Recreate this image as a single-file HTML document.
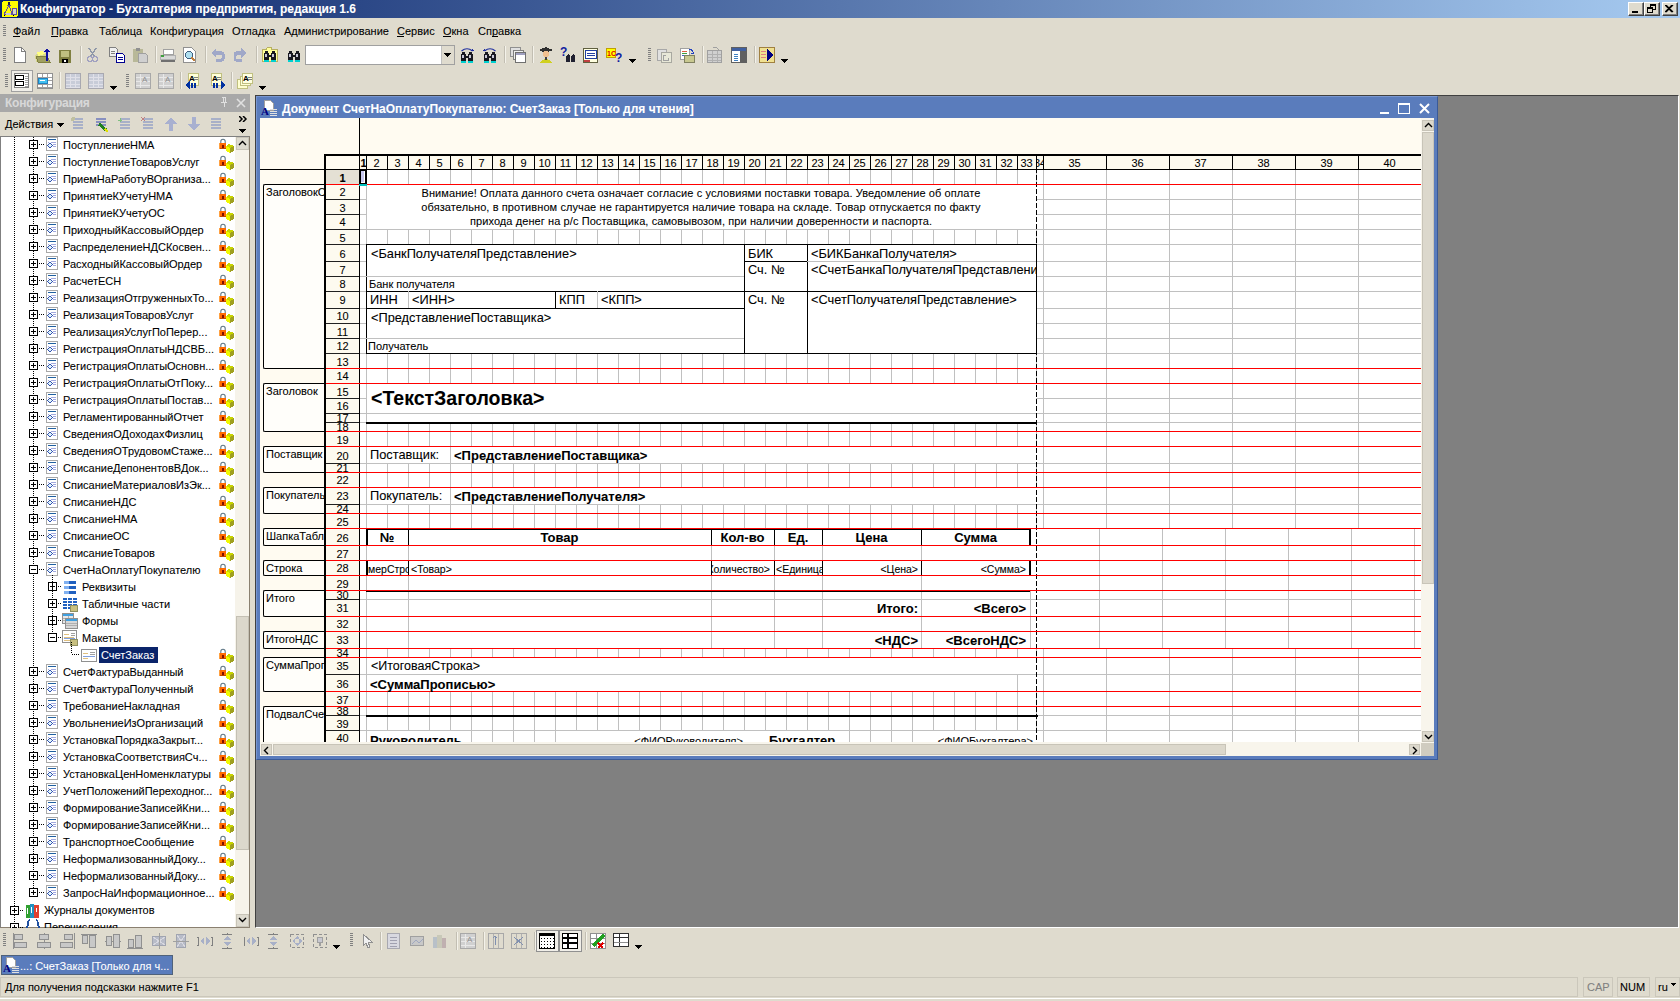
<!DOCTYPE html>
<html><head><meta charset="utf-8"><style>
html,body{margin:0;padding:0}
body{width:1680px;height:1001px;overflow:hidden;position:relative;background:#dfdbce;font-family:"Liberation Sans",sans-serif;font-size:11px}
div{position:absolute;box-sizing:border-box}
.t{white-space:pre;-webkit-text-stroke:0.08px currentColor}
</style></head><body>
<div style="left:0px;top:0px;width:1680px;height:18px;background:linear-gradient(to right,#0a246a,#a6caf0)"></div><svg style="position:absolute;left:0px;top:0px" width="20" height="18" viewBox="0 0 20 18" shape-rendering="crispEdges"><rect x="2" y="1" width="16" height="16" rx="2" fill="#ffff00"/><circle cx="9" cy="3.5" r="1.2" fill="#202040"/><path d="M7 5.5 H11" stroke="#6050a0" stroke-width="1.2"/><path d="M8.5 6 L4 14.5 M9.5 6 L12 14 M3.5 14.5 H16.5" stroke="#6050a0" stroke-width="1" fill="none"/><rect x="12.5" y="8.5" width="4" height="6" fill="#d8d8c8" stroke="#6050a0"/><path d="M6 13.5 H11" stroke="#c8c8d8" stroke-width="2"/><circle cx="4.5" cy="15.5" r="1" fill="#000"/><circle cx="13.5" cy="15.5" r="1" fill="#000"/></svg><div class="t" style="left:20px;top:1px;font-size:12px;line-height:16px;color:#fff;font-weight:bold;">Конфигуратор - Бухгалтерия предприятия, редакция 1.6</div><div style="left:1628px;top:2px;width:16px;height:14px;background:#dfdbce;border-top:1px solid #fff;border-left:1px solid #fff;border-right:1px solid #404040;border-bottom:1px solid #404040;box-shadow:inset -1px -1px 0 #808080"></div><div style="left:1632px;top:11px;width:6px;height:2px;background:#000"></div><div style="left:1644px;top:2px;width:16px;height:14px;background:#dfdbce;border-top:1px solid #fff;border-left:1px solid #fff;border-right:1px solid #404040;border-bottom:1px solid #404040;box-shadow:inset -1px -1px 0 #808080"></div><div style="left:1650px;top:4px;width:6px;height:6px;border:1px solid #000;border-top-width:2px"></div><div style="left:1647px;top:7px;width:6px;height:6px;border:1px solid #000;border-top-width:2px;background:#dfdbce"></div><div style="left:1662px;top:2px;width:16px;height:14px;background:#dfdbce;border-top:1px solid #fff;border-left:1px solid #fff;border-right:1px solid #404040;border-bottom:1px solid #404040;box-shadow:inset -1px -1px 0 #808080"></div><svg style="position:absolute;left:1665px;top:5px" width="9" height="8" viewBox="0 0 9 8" shape-rendering="crispEdges"><path d="M1 0 L8 7 M0 0 L7 7 M7 0 L0 7 M8 0 L1 7" stroke="#000" stroke-width="1.2" fill="none" shape-rendering="auto"/></svg><div style="left:3px;top:25px;width:3px;height:1px;background:#808080"></div><div style="left:3px;top:27px;width:3px;height:1px;background:#808080"></div><div style="left:3px;top:29px;width:3px;height:1px;background:#808080"></div><div style="left:3px;top:31px;width:3px;height:1px;background:#808080"></div><div style="left:3px;top:33px;width:3px;height:1px;background:#808080"></div><div style="left:3px;top:35px;width:3px;height:1px;background:#808080"></div><div class="t" style="left:13px;top:24px;font-size:11px;line-height:15px;color:#000;">Файл</div><div class="t" style="left:51px;top:24px;font-size:11px;line-height:15px;color:#000;">Правка</div><div class="t" style="left:99px;top:24px;font-size:11px;line-height:15px;color:#000;">Таблица</div><div class="t" style="left:150px;top:24px;font-size:11px;line-height:15px;color:#000;">Конфигурация</div><div class="t" style="left:232px;top:24px;font-size:11px;line-height:15px;color:#000;">Отладка</div><div class="t" style="left:284px;top:24px;font-size:11px;line-height:15px;color:#000;">Администрирование</div><div class="t" style="left:397px;top:24px;font-size:11px;line-height:15px;color:#000;">Сервис</div><div class="t" style="left:443px;top:24px;font-size:11px;line-height:15px;color:#000;">Окна</div><div class="t" style="left:478px;top:24px;font-size:11px;line-height:15px;color:#000;">Справка</div><div style="left:13px;top:36px;width:7px;height:1px;background:#000"></div><div style="left:51px;top:36px;width:7px;height:1px;background:#000"></div><div style="left:397px;top:36px;width:7px;height:1px;background:#000"></div><div style="left:443px;top:36px;width:8px;height:1px;background:#000"></div><div style="left:492px;top:36px;width:6px;height:1px;background:#000"></div><div style="left:3px;top:48px;width:3px;height:1px;background:#808080"></div><div style="left:3px;top:50px;width:3px;height:1px;background:#808080"></div><div style="left:3px;top:52px;width:3px;height:1px;background:#808080"></div><div style="left:3px;top:54px;width:3px;height:1px;background:#808080"></div><div style="left:3px;top:56px;width:3px;height:1px;background:#808080"></div><div style="left:3px;top:58px;width:3px;height:1px;background:#808080"></div><div style="left:3px;top:60px;width:3px;height:1px;background:#808080"></div><svg style="position:absolute;left:12px;top:47px" width="16" height="16" viewBox="0 0 16 16" shape-rendering="crispEdges"><path d="M2.5 0.5 H9.5 L13.5 4.5 V15.5 H2.5 Z" fill="#fff" stroke="#808080"/><path d="M9.5 0.5 V4.5 H13.5" fill="none" stroke="#808080"/></svg><svg style="position:absolute;left:35px;top:47px" width="16" height="16" viewBox="0 0 16 16" shape-rendering="crispEdges"><path d="M0 8 L4 6 H12 V15 H1 Z" fill="#d8d890"/><path d="M1 9 H12 L15 15 H3 Z" fill="#a0a060" stroke="#808040"/><path d="M2 5 L8 4 L10 7 L3 9 Z" fill="#ffff80"/><path d="M12 1 L9 5 H11 V14 H13 V5 H15 Z" fill="#1010a0"/></svg><svg style="position:absolute;left:59px;top:47px" width="16" height="16" viewBox="0 0 16 16" shape-rendering="crispEdges"><rect x="0" y="3" width="12" height="13" fill="#808040"/><rect x="2" y="4" width="8" height="6" fill="#c0c080"/><rect x="3" y="12" width="6" height="4" fill="#000"/><rect x="5" y="13" width="2" height="2" fill="#ffffff"/></svg><div style="left:80px;top:46px;width:1px;height:17px;background:#c2beb2"></div><div style="left:81px;top:46px;width:1px;height:17px;background:#f4f2ea"></div><svg style="position:absolute;left:86px;top:47px" width="16" height="16" viewBox="0 0 16 16" shape-rendering="crispEdges"><path d="M3 1 L8 9 M10 1 L5 9" stroke="#9098a8" stroke-width="1.5" fill="none"/><circle cx="4" cy="12" r="2.5" fill="none" stroke="#a0a0c0" stroke-width="1.2"/><circle cx="9" cy="12" r="2.5" fill="none" stroke="#a0a0c0" stroke-width="1.2"/></svg><svg style="position:absolute;left:109px;top:47px" width="16" height="16" viewBox="0 0 16 16" shape-rendering="crispEdges"><path d="M0.5 0.5 H6.5 L8.5 2.5 V9.5 H0.5 Z" fill="#f0f0f0" stroke="#808080"/><path d="M2 4 H6 M2 6 H6" stroke="#808080"/><path d="M7.5 6.5 H13.5 L15.5 8.5 V15.5 H7.5 Z" fill="#fff" stroke="#000090"/><path d="M9 10 H14 M9 12 H14" stroke="#000090"/></svg><svg style="position:absolute;left:132px;top:47px" width="16" height="16" viewBox="0 0 16 16" shape-rendering="crispEdges"><rect x="1" y="2" width="10" height="13" fill="#b8b898"/><rect x="4" y="1" width="4" height="3" fill="#909090"/><path d="M6.5 6.5 H13.5 L15.5 8.5 V15.5 H6.5 Z" fill="#d0d0d0" stroke="#a0a0a0"/></svg><div style="left:155px;top:46px;width:1px;height:17px;background:#c2beb2"></div><div style="left:156px;top:46px;width:1px;height:17px;background:#f4f2ea"></div><svg style="position:absolute;left:160px;top:47px" width="16" height="16" viewBox="0 0 16 16" shape-rendering="crispEdges"><rect x="3" y="2" width="10" height="5" fill="#fff" stroke="#a0a0a0"/><path d="M0 8 H16 V13 H0 Z" fill="#b0b0b0"/><rect x="1" y="9" width="14" height="3" fill="#d8d8d8"/><rect x="1" y="8" width="3" height="2" fill="#40a040"/><path d="M1 13 H15 V15 H1Z" fill="#707070"/></svg><svg style="position:absolute;left:183px;top:47px" width="16" height="16" viewBox="0 0 16 16" shape-rendering="crispEdges"><path d="M0.5 0.5 H8.5 L12.5 4.5 V15.5 H0.5 Z" fill="#fff" stroke="#909090"/><circle cx="6" cy="8" r="3.5" fill="#b0e0f0" stroke="#406080"/><path d="M8.5 10.5 L12 14" stroke="#c08040" stroke-width="2"/></svg><div style="left:205px;top:46px;width:1px;height:17px;background:#c2beb2"></div><div style="left:206px;top:46px;width:1px;height:17px;background:#f4f2ea"></div><svg style="position:absolute;left:210px;top:47px" width="16" height="16" viewBox="0 0 16 16" shape-rendering="crispEdges"><path d="M6 1 L1 6 L6 11 V8 H10 A2 2 0 0 1 10 12 H6 V15 H10 A5 5 0 0 0 10 4 H6 Z" fill="#a0a8c8"/></svg><svg style="position:absolute;left:234px;top:47px" width="16" height="16" viewBox="0 0 16 16" shape-rendering="crispEdges"><path d="M7 1 L12 6 L7 11 V8 H4 A2 2 0 0 0 4 12 H8 V15 H4 A5 5 0 0 1 4 4 H7 Z" fill="#a0a8c8"/></svg><div style="left:256px;top:46px;width:1px;height:17px;background:#c2beb2"></div><div style="left:257px;top:46px;width:1px;height:17px;background:#f4f2ea"></div><svg style="position:absolute;left:262px;top:46px" width="16" height="16" viewBox="0 0 16 16" shape-rendering="crispEdges"><path d="M0.5 3.5 H4 L5.5 1.5 H9 V3.5 H15.5 V15.5 H0.5 Z" fill="#ffff98" stroke="#b8b060"/><g transform="translate(0,0.5)"><path d="M3 4 H6 V6 H7 V8 H9 V6 H10 V4 H13 V6 H14 V14 H9 V10 H7 V14 H2 V6 H3 Z" fill="#181820"/><rect x="3" y="7" width="2" height="3" fill="#c8c8d8"/><rect x="10" y="7" width="2" height="3" fill="#c8c8d8"/><rect x="2" y="13" width="5" height="2" fill="#00d0d0"/><rect x="9" y="13" width="5" height="2" fill="#00d0d0"/></g></svg><svg style="position:absolute;left:286px;top:47px" width="16" height="16" viewBox="0 0 16 16" shape-rendering="crispEdges"><g><path d="M3 4 H6 V6 H7 V8 H9 V6 H10 V4 H13 V6 H14 V14 H9 V10 H7 V14 H2 V6 H3 Z" fill="#181820"/><rect x="3" y="7" width="2" height="3" fill="#c8c8d8"/><rect x="10" y="7" width="2" height="3" fill="#c8c8d8"/><rect x="2" y="13" width="5" height="2" fill="#00d0d0"/><rect x="9" y="13" width="5" height="2" fill="#00d0d0"/></g></svg><div style="left:305px;top:45px;width:150px;height:20px;background:#fff;border:1px solid #7f9db9;border-color:#a0a0a0"></div><div style="left:441px;top:46px;width:13px;height:18px;background:#dfdbce;border-left:1px solid #c0c0c0"></div><svg style="position:absolute;left:444px;top:53px" width="7" height="4" viewBox="0 0 7 4" shape-rendering="crispEdges"><path d="M0 0 H7 L3.5 4 Z" fill="#000"/></svg><svg style="position:absolute;left:459px;top:47px" width="16" height="16" viewBox="0 0 16 16" shape-rendering="crispEdges"><path d="M2.5 4 Q8 -0.5 13.5 4" stroke="#2030a0" stroke-width="1.2" fill="none" shape-rendering="auto"/><path d="M15 4.5 L11 4 L14 1.5 Z" fill="#2030a0"/><g transform="translate(0,1)"><path d="M3 4 H6 V6 H7 V8 H9 V6 H10 V4 H13 V6 H14 V14 H9 V10 H7 V14 H2 V6 H3 Z" fill="#181820"/><rect x="3" y="7" width="2" height="3" fill="#c8c8d8"/><rect x="10" y="7" width="2" height="3" fill="#c8c8d8"/><rect x="2" y="13" width="5" height="2" fill="#00d0d0"/><rect x="9" y="13" width="5" height="2" fill="#00d0d0"/></g></svg><svg style="position:absolute;left:482px;top:47px" width="16" height="16" viewBox="0 0 16 16" shape-rendering="crispEdges"><path d="M2.5 4 Q8 -0.5 13.5 4" stroke="#2030a0" stroke-width="1.2" fill="none" shape-rendering="auto"/><path d="M1 4.5 L5 4 L2 1.5 Z" fill="#2030a0"/><g transform="translate(0,1)"><path d="M3 4 H6 V6 H7 V8 H9 V6 H10 V4 H13 V6 H14 V14 H9 V10 H7 V14 H2 V6 H3 Z" fill="#181820"/><rect x="3" y="7" width="2" height="3" fill="#c8c8d8"/><rect x="10" y="7" width="2" height="3" fill="#c8c8d8"/><rect x="2" y="13" width="5" height="2" fill="#00d0d0"/><rect x="9" y="13" width="5" height="2" fill="#00d0d0"/></g></svg><div style="left:504px;top:46px;width:1px;height:17px;background:#c2beb2"></div><div style="left:505px;top:46px;width:1px;height:17px;background:#f4f2ea"></div><svg style="position:absolute;left:510px;top:47px" width="16" height="16" viewBox="0 0 16 16" shape-rendering="crispEdges"><rect x="0.5" y="0.5" width="10" height="9" fill="#e0e0e0" stroke="#909090"/><rect x="3.5" y="3.5" width="10" height="9" fill="#f0f0f0" stroke="#808080"/><rect x="5.5" y="5.5" width="10" height="10" fill="#fff" stroke="#707070"/><rect x="6" y="6" width="9" height="2" fill="#a0a0c0"/></svg><div style="left:532px;top:46px;width:1px;height:17px;background:#c2beb2"></div><div style="left:533px;top:46px;width:1px;height:17px;background:#f4f2ea"></div><svg style="position:absolute;left:537px;top:47px" width="16" height="16" viewBox="0 0 16 16" shape-rendering="crispEdges"><path d="M2 3 L9 0 L16 3 L9 6 Z" fill="#303030"/><circle cx="9" cy="7" r="3" fill="#f0c090"/><path d="M3 16 Q9 8 15 16 Z" fill="#d0d020"/><path d="M8 10 L9 16 L10 10Z" fill="#404040"/></svg><svg style="position:absolute;left:560px;top:47px" width="16" height="16" viewBox="0 0 16 16" shape-rendering="crispEdges"><text x="0" y="9" font-size="12" font-weight="bold" fill="#1020a0" font-family="Liberation Sans">?</text><path d="M6 9 L8 7 L10 9 V15 H6Z M11 9 L13 7 L15 9 V15 H11Z" fill="#202030"/></svg><svg style="position:absolute;left:583px;top:47px" width="16" height="16" viewBox="0 0 16 16" shape-rendering="crispEdges"><rect x="0.5" y="1.5" width="14" height="14" fill="#ffffe0" stroke="#606040"/><rect x="2.5" y="3.5" width="11" height="8" fill="#fff" stroke="#2040a0"/><path d="M4 6 H12 M4 8 H12" stroke="#2040a0"/><rect x="1" y="13" width="6" height="2" fill="#c04040"/></svg><svg style="position:absolute;left:606px;top:47px" width="16" height="16" viewBox="0 0 16 16" shape-rendering="crispEdges"><rect x="0.5" y="1.5" width="9" height="9" fill="#ffff00" stroke="#c0a000"/><text x="1" y="9" font-size="7" font-weight="bold" fill="#e00000" font-family="Liberation Sans">1С</text><text x="9" y="15" font-size="12" font-weight="bold" fill="#1020a0" font-family="Liberation Sans">?</text></svg><svg style="position:absolute;left:629px;top:59px" width="7" height="4" viewBox="0 0 7 4" shape-rendering="crispEdges"><path d="M0 0 H7 L3.5 4 Z" fill="#000"/></svg><div style="left:648px;top:48px;width:3px;height:1px;background:#808080"></div><div style="left:648px;top:50px;width:3px;height:1px;background:#808080"></div><div style="left:648px;top:52px;width:3px;height:1px;background:#808080"></div><div style="left:648px;top:54px;width:3px;height:1px;background:#808080"></div><div style="left:648px;top:56px;width:3px;height:1px;background:#808080"></div><div style="left:648px;top:58px;width:3px;height:1px;background:#808080"></div><div style="left:648px;top:60px;width:3px;height:1px;background:#808080"></div><svg style="position:absolute;left:657px;top:47px" width="16" height="16" viewBox="0 0 16 16" shape-rendering="crispEdges"><rect x="0.5" y="2.5" width="9" height="11" fill="#e0e0e0" stroke="#a8a8a8"/><rect x="4.5" y="5.5" width="10" height="10" fill="#e8e8d8" stroke="#a8a8a0"/><path d="M9 8 A3 3 0 1 0 12 11" fill="none" stroke="#a0a0a0"/></svg><svg style="position:absolute;left:680px;top:47px" width="16" height="16" viewBox="0 0 16 16" shape-rendering="crispEdges"><rect x="0.5" y="1.5" width="9" height="11" fill="#fff" stroke="#a0a0a0"/><path d="M2 4 H7" stroke="#e06040"/><path d="M2 6 H7" stroke="#40a040"/><path d="M2 8 H7" stroke="#4060c0"/><rect x="4.5" y="8.5" width="10" height="7" fill="#c8c890" stroke="#808060"/><path d="M9 2 A4 4 0 0 1 13 7 L11 6 M13 7 L14 5" fill="none" stroke="#2040c0"/></svg><div style="left:702px;top:46px;width:1px;height:17px;background:#c2beb2"></div><div style="left:703px;top:46px;width:1px;height:17px;background:#f4f2ea"></div><svg style="position:absolute;left:707px;top:47px" width="16" height="16" viewBox="0 0 16 16" shape-rendering="crispEdges"><rect x="0.5" y="3.5" width="14" height="12" fill="#d0d0d0" stroke="#a0a0a0"/><path d="M1 7 H14 M1 10 H14 M1 13 H14 M5 4 V15 M10 4 V15" stroke="#b0b0b0"/><path d="M6 1 A4 4 0 0 1 12 4" fill="none" stroke="#a0a0a0"/></svg><svg style="position:absolute;left:731px;top:47px" width="16" height="16" viewBox="0 0 16 16" shape-rendering="crispEdges"><rect x="0.5" y="0.5" width="15" height="15" fill="#fff" stroke="#606060"/><rect x="1" y="1" width="14" height="3" fill="#4060a0"/><rect x="9" y="4" width="6" height="11" fill="#606060"/><path d="M3 7 H7 M3 9 H7 M3 11 H7 M3 13 H7" stroke="#4080c0"/></svg><div style="left:754px;top:46px;width:1px;height:17px;background:#c2beb2"></div><div style="left:755px;top:46px;width:1px;height:17px;background:#f4f2ea"></div><svg style="position:absolute;left:759px;top:47px" width="16" height="16" viewBox="0 0 16 16" shape-rendering="crispEdges"><rect x="0.5" y="0.5" width="15" height="15" fill="#f0e090" stroke="#a08040"/><path d="M2 4 H7 M2 7 H7 M2 10 H7" stroke="#e08080"/><path d="M8 2 L15 8 L8 14 Z" fill="#000080"/></svg><svg style="position:absolute;left:781px;top:59px" width="7" height="4" viewBox="0 0 7 4" shape-rendering="crispEdges"><path d="M0 0 H7 L3.5 4 Z" fill="#000"/></svg><div style="left:5px;top:74px;width:3px;height:1px;background:#808080"></div><div style="left:5px;top:76px;width:3px;height:1px;background:#808080"></div><div style="left:5px;top:78px;width:3px;height:1px;background:#808080"></div><div style="left:5px;top:80px;width:3px;height:1px;background:#808080"></div><div style="left:5px;top:82px;width:3px;height:1px;background:#808080"></div><div style="left:5px;top:84px;width:3px;height:1px;background:#808080"></div><div style="left:5px;top:86px;width:3px;height:1px;background:#808080"></div><div style="left:11px;top:70px;width:22px;height:22px;border:1px solid #a0a0a0;background:#f0eee8"></div><svg style="position:absolute;left:14px;top:73px" width="16" height="16" viewBox="0 0 16 16" shape-rendering="crispEdges"><rect x="0.5" y="0.5" width="14" height="14" fill="#fff" stroke="#808080"/><rect x="1.5" y="2.5" width="8" height="4" fill="none" stroke="#000" stroke-width="1.5"/><rect x="1.5" y="8.5" width="8" height="4" fill="none" stroke="#000" stroke-width="1.5"/><path d="M11 3 H14 M11 5 H14 M11 7 H14 M11 9 H14 M11 11 H14 M11 13 H14" stroke="#a0a0a0"/></svg><svg style="position:absolute;left:37px;top:73px" width="16" height="16" viewBox="0 0 16 16" shape-rendering="crispEdges"><rect x="0.5" y="0.5" width="15" height="15" fill="#fff" stroke="#909090"/><path d="M1 4 H15 M1 7.5 H15 M1 11 H15 M1 14 H15 M5.5 1 V15 M10.5 1 V15" stroke="#a0a0a0"/><rect x="1" y="5" width="9" height="5" fill="#40c0f0" stroke="#2080c0"/><path d="M3 7.5 H8" stroke="#fff"/></svg><div style="left:59px;top:72px;width:1px;height:17px;background:#c2beb2"></div><div style="left:60px;top:72px;width:1px;height:17px;background:#f4f2ea"></div><svg style="position:absolute;left:65px;top:73px" width="16" height="16" viewBox="0 0 16 16" shape-rendering="crispEdges"><rect x="0.5" y="0.5" width="15" height="15" fill="#c8ccd8" stroke="#a8a8b0"/><path d="M1 4 H15 M1 7.5 H15 M1 11 H15 M1 14 H15 M5.5 1 V15 M10.5 1 V15" stroke="#e0e0e8"/></svg><svg style="position:absolute;left:88px;top:73px" width="16" height="16" viewBox="0 0 16 16" shape-rendering="crispEdges"><rect x="0.5" y="0.5" width="15" height="15" fill="#c8ccd8" stroke="#a8a8b0"/><path d="M1 4 H15 M1 7.5 H15 M1 11 H15 M1 14 H15 M5.5 1 V15 M10.5 1 V15" stroke="#e0e0e8"/></svg><svg style="position:absolute;left:110px;top:86px" width="7" height="4" viewBox="0 0 7 4" shape-rendering="crispEdges"><path d="M0 0 H7 L3.5 4 Z" fill="#000"/></svg><div style="left:126px;top:74px;width:3px;height:1px;background:#808080"></div><div style="left:126px;top:76px;width:3px;height:1px;background:#808080"></div><div style="left:126px;top:78px;width:3px;height:1px;background:#808080"></div><div style="left:126px;top:80px;width:3px;height:1px;background:#808080"></div><div style="left:126px;top:82px;width:3px;height:1px;background:#808080"></div><div style="left:126px;top:84px;width:3px;height:1px;background:#808080"></div><div style="left:126px;top:86px;width:3px;height:1px;background:#808080"></div><svg style="position:absolute;left:135px;top:73px" width="16" height="16" viewBox="0 0 16 16" shape-rendering="crispEdges"><rect x="0.5" y="0.5" width="15" height="15" fill="#d0d0d0" stroke="#a8a8a8"/><path d="M1 4 H15 M1 8 H15 M1 12 H15 M5 1 V15" stroke="#e8e8e8"/><text x="7" y="9" font-size="8" fill="#909090" font-family="Liberation Sans">A</text></svg><svg style="position:absolute;left:158px;top:73px" width="16" height="16" viewBox="0 0 16 16" shape-rendering="crispEdges"><rect x="0.5" y="0.5" width="15" height="15" fill="#d0d0d0" stroke="#a8a8a8"/><path d="M1 4 H15 M1 8 H15 M1 12 H15 M5 1 V15" stroke="#e8e8e8"/><text x="7" y="9" font-size="8" fill="#909090" font-family="Liberation Sans">A</text></svg><div style="left:180px;top:72px;width:1px;height:17px;background:#c2beb2"></div><div style="left:181px;top:72px;width:1px;height:17px;background:#f4f2ea"></div><svg style="position:absolute;left:185px;top:73px" width="16" height="16" viewBox="0 0 16 16" shape-rendering="crispEdges"><rect x="3.5" y="0.5" width="10" height="12" fill="#ffffd8" stroke="#c0c080"/><text x="4" y="8" font-size="8" font-weight="bold" fill="#000" font-family="Liberation Sans">A</text><path d="M9 4 H13 M9 6 H13" stroke="#808080"/><path d="M0 12 L5 8 V16 Z" fill="#0030a0"/><rect x="6" y="10" width="2" height="5" fill="#0030a0"/><rect x="9" y="10" width="2" height="5" fill="#0030a0"/></svg><svg style="position:absolute;left:210px;top:73px" width="16" height="16" viewBox="0 0 16 16" shape-rendering="crispEdges"><rect x="1.5" y="0.5" width="10" height="12" fill="#ffffd8" stroke="#c0c080"/><text x="2" y="8" font-size="8" font-weight="bold" fill="#000" font-family="Liberation Sans">A</text><path d="M7 4 H11 M7 6 H11" stroke="#808080"/><path d="M16 12 L11 8 V16 Z" fill="#0030a0"/><rect x="3" y="10" width="2" height="5" fill="#0030a0"/><rect x="6" y="10" width="2" height="5" fill="#0030a0"/></svg><div style="left:231px;top:72px;width:1px;height:17px;background:#c2beb2"></div><div style="left:232px;top:72px;width:1px;height:17px;background:#f4f2ea"></div><svg style="position:absolute;left:237px;top:73px" width="16" height="16" viewBox="0 0 16 16" shape-rendering="crispEdges"><rect x="0.5" y="6.5" width="10" height="9" fill="#ffffd0" stroke="#c0c080"/><rect x="3.5" y="3.5" width="10" height="9" fill="#ffffd8" stroke="#c0c080"/><rect x="5.5" y="0.5" width="10" height="10" fill="#ffffe0" stroke="#c0c080"/><text x="6" y="8" font-size="8" font-weight="bold" fill="#000" font-family="Liberation Sans">A</text><path d="M11 4 H15 M11 6 H15" stroke="#808080"/></svg><svg style="position:absolute;left:259px;top:86px" width="7" height="4" viewBox="0 0 7 4" shape-rendering="crispEdges"><path d="M0 0 H7 L3.5 4 Z" fill="#000"/></svg><div style="left:0px;top:94px;width:250px;height:18px;background:#a8a8a8"></div><div class="t" style="left:5px;top:95px;font-size:12px;line-height:16px;color:#d8d8d8;font-weight:bold;letter-spacing:-0.2px;">Конфигурация</div><svg style="position:absolute;left:220px;top:96px" width="8" height="12" viewBox="0 0 8 12" shape-rendering="crispEdges"><path d="M2 1 H6 M3 1 V6 M5 1 V6 M1 6 H7 M4 6 V11" stroke="#e0e0e0" fill="none"/></svg><svg style="position:absolute;left:236px;top:98px" width="10" height="10" viewBox="0 0 10 10" shape-rendering="crispEdges"><path d="M1 1 L9 9 M9 1 L1 9" stroke="#e0e0e0" stroke-width="1.6" fill="none" shape-rendering="auto"/></svg><div class="t" style="left:5px;top:117px;font-size:11px;line-height:15px;color:#000;">Действия</div><svg style="position:absolute;left:57px;top:123px" width="7" height="4" viewBox="0 0 7 4" shape-rendering="crispEdges"><path d="M0 0 H7 L3.5 4 Z" fill="#000"/></svg><svg style="position:absolute;left:70px;top:116px" width="16" height="16" viewBox="0 0 16 16" shape-rendering="crispEdges"><path d="M3 3 H13 M3 6 H13 M3 9 H13 M3 12 H13" stroke="#a8b0c8" stroke-width="2"/><circle cx="3" cy="3" r="2" fill="#c0c0a0"/></svg><svg style="position:absolute;left:93px;top:116px" width="16" height="16" viewBox="0 0 16 16" shape-rendering="crispEdges"><path d="M3 3 H13 M3 6 H13 M3 9 H13" stroke="#8890c0" stroke-width="2"/><path d="M6 8 L13 14" stroke="#208020" stroke-width="3"/><path d="M12 13 L15 16" stroke="#e0e000" stroke-width="2"/></svg><svg style="position:absolute;left:117px;top:116px" width="16" height="16" viewBox="0 0 16 16" shape-rendering="crispEdges"><path d="M3 3 H13 M3 6 H13 M3 9 H13 M3 12 H13" stroke="#a8b0c8" stroke-width="2"/><path d="M1 4 H5 M3 2 V6" stroke="#80c080"/></svg><svg style="position:absolute;left:140px;top:116px" width="16" height="16" viewBox="0 0 16 16" shape-rendering="crispEdges"><path d="M3 3 H13 M3 6 H13 M3 9 H13 M3 12 H13" stroke="#a8b0c8" stroke-width="2"/><path d="M1 1 L5 5 M5 1 L1 5" stroke="#c08080"/></svg><svg style="position:absolute;left:163px;top:116px" width="16" height="16" viewBox="0 0 16 16" shape-rendering="crispEdges"><path d="M8 1 L14 8 H10 V15 H6 V8 H2 Z" fill="#a8b0d0"/></svg><svg style="position:absolute;left:186px;top:116px" width="16" height="16" viewBox="0 0 16 16" shape-rendering="crispEdges"><path d="M8 15 L14 8 H10 V1 H6 V8 H2 Z" fill="#a8b0d0"/></svg><svg style="position:absolute;left:208px;top:116px" width="16" height="16" viewBox="0 0 16 16" shape-rendering="crispEdges"><path d="M3 3 H13 M3 6 H13 M3 9 H13 M3 12 H13" stroke="#a8b0c8" stroke-width="2"/></svg><svg style="position:absolute;left:239px;top:116px" width="9" height="6" viewBox="0 0 9 6" shape-rendering="crispEdges"><path d="M0 0 L3 3 L0 6 M4 0 L7 3 L4 6" stroke="#000" stroke-width="1.5" fill="none" shape-rendering="auto"/></svg><svg style="position:absolute;left:239px;top:129px" width="7" height="4" viewBox="0 0 7 4" shape-rendering="crispEdges"><path d="M0 0 H7 L3.5 4 Z" fill="#000"/></svg><div style="left:0px;top:136px;width:250px;height:792px;background:#fff;border:1px solid #808080;border-right-color:#8a8070;border-bottom-color:#8a8070"></div><div style="left:235px;top:137px;width:14px;height:790px;background:#f6f3ea"></div><div style="left:236px;top:137px;width:13px;height:13px;background:#dedbd0;border:1px solid #c8c4b8"></div><svg style="position:absolute;left:238px;top:140px" width="9" height="6" viewBox="0 0 9 6" shape-rendering="crispEdges"><path d="M1 5 L4.5 1.5 L8 5" stroke="#000" stroke-width="1.4" fill="none" shape-rendering="auto"/></svg><div style="left:236px;top:914px;width:13px;height:13px;background:#dedbd0;border:1px solid #c8c4b8"></div><svg style="position:absolute;left:238px;top:917px" width="9" height="6" viewBox="0 0 9 6" shape-rendering="crispEdges"><path d="M1 1 L4.5 4.5 L8 1" stroke="#000" stroke-width="1.4" fill="none" shape-rendering="auto"/></svg><div style="left:236px;top:616px;width:13px;height:234px;background:#dcd8cc;border:1px solid #c4c0b4"></div><div style="left:14px;top:137px;width:1px;height:790px;background:repeating-linear-gradient(to bottom,#000 0 1px,transparent 1px 2px)"></div><div style="left:33px;top:137px;width:1px;height:756px;background:repeating-linear-gradient(to bottom,#000 0 1px,transparent 1px 2px)"></div><div style="left:29px;top:140px;width:9px;height:9px;background:#fff;border:1px solid #000"></div><div style="left:31px;top:144px;width:5px;height:1px;background:#000"></div><div style="left:33px;top:142px;width:1px;height:5px;background:#000"></div><div style="left:39px;top:144px;width:6px;height:1px;background:repeating-linear-gradient(to right,#000 0 1px,transparent 1px 2px)"></div><svg style="position:absolute;left:46px;top:137px" width="12" height="14" viewBox="0 0 12 14" shape-rendering="crispEdges"><rect x="0.5" y="0.5" width="11" height="13" fill="#fff" stroke="#a8a8a8"/><path d="M2 2.5 H10" stroke="#2060a0" stroke-width="1.3"/><path d="M2 5 H3 M5 5 H10 M7 7 H10 M7 9 H10" stroke="#a0a8e0"/><path d="M4 6 L6.5 8.5 L4 11 L1.5 8.5 Z" fill="#e0f4f8" stroke="#3050b0"/></svg><div class="t" style="left:63px;top:138px;font-size:11px;line-height:15px;color:#000;">ПоступлениеНМА</div><svg style="position:absolute;left:219px;top:137px" width="16" height="16" viewBox="0 0 16 16" shape-rendering="crispEdges"><path d="M1.8 6 V4.5 A2.2 2.2 0 0 1 6.2 4.5 V6" fill="none" stroke="#607888" stroke-width="1.1" shape-rendering="auto"/><rect x="0" y="6" width="7" height="6" fill="#ff6a00"/><rect x="0" y="11" width="7" height="1" fill="#c04800"/><rect x="0" y="6" width="1" height="6" fill="#ffa040"/><rect x="3" y="8" width="1.5" height="2.5" fill="#801000"/><path d="M7 9 L10 7 L15 9 L11 11 Z" fill="#c8d400"/><path d="M7 9 L11 11 V16 L7 14 Z" fill="#f0f800"/><path d="M11 11 L15 9 V14 L11 16 Z" fill="#a0a020"/></svg><div style="left:29px;top:157px;width:9px;height:9px;background:#fff;border:1px solid #000"></div><div style="left:31px;top:161px;width:5px;height:1px;background:#000"></div><div style="left:33px;top:159px;width:1px;height:5px;background:#000"></div><div style="left:39px;top:161px;width:6px;height:1px;background:repeating-linear-gradient(to right,#000 0 1px,transparent 1px 2px)"></div><svg style="position:absolute;left:46px;top:154px" width="12" height="14" viewBox="0 0 12 14" shape-rendering="crispEdges"><rect x="0.5" y="0.5" width="11" height="13" fill="#fff" stroke="#a8a8a8"/><path d="M2 2.5 H10" stroke="#2060a0" stroke-width="1.3"/><path d="M2 5 H3 M5 5 H10 M7 7 H10 M7 9 H10" stroke="#a0a8e0"/><path d="M4 6 L6.5 8.5 L4 11 L1.5 8.5 Z" fill="#e0f4f8" stroke="#3050b0"/></svg><div class="t" style="left:63px;top:155px;font-size:11px;line-height:15px;color:#000;">ПоступлениеТоваровУслуг</div><svg style="position:absolute;left:219px;top:154px" width="16" height="16" viewBox="0 0 16 16" shape-rendering="crispEdges"><path d="M1.8 6 V4.5 A2.2 2.2 0 0 1 6.2 4.5 V6" fill="none" stroke="#607888" stroke-width="1.1" shape-rendering="auto"/><rect x="0" y="6" width="7" height="6" fill="#ff6a00"/><rect x="0" y="11" width="7" height="1" fill="#c04800"/><rect x="0" y="6" width="1" height="6" fill="#ffa040"/><rect x="3" y="8" width="1.5" height="2.5" fill="#801000"/><path d="M7 9 L10 7 L15 9 L11 11 Z" fill="#c8d400"/><path d="M7 9 L11 11 V16 L7 14 Z" fill="#f0f800"/><path d="M11 11 L15 9 V14 L11 16 Z" fill="#a0a020"/></svg><div style="left:29px;top:174px;width:9px;height:9px;background:#fff;border:1px solid #000"></div><div style="left:31px;top:178px;width:5px;height:1px;background:#000"></div><div style="left:33px;top:176px;width:1px;height:5px;background:#000"></div><div style="left:39px;top:178px;width:6px;height:1px;background:repeating-linear-gradient(to right,#000 0 1px,transparent 1px 2px)"></div><svg style="position:absolute;left:46px;top:171px" width="12" height="14" viewBox="0 0 12 14" shape-rendering="crispEdges"><rect x="0.5" y="0.5" width="11" height="13" fill="#fff" stroke="#a8a8a8"/><path d="M2 2.5 H10" stroke="#2060a0" stroke-width="1.3"/><path d="M2 5 H3 M5 5 H10 M7 7 H10 M7 9 H10" stroke="#a0a8e0"/><path d="M4 6 L6.5 8.5 L4 11 L1.5 8.5 Z" fill="#e0f4f8" stroke="#3050b0"/></svg><div class="t" style="left:63px;top:172px;font-size:11px;line-height:15px;color:#000;">ПриемНаРаботуВОрганиза...</div><svg style="position:absolute;left:219px;top:171px" width="16" height="16" viewBox="0 0 16 16" shape-rendering="crispEdges"><path d="M1.8 6 V4.5 A2.2 2.2 0 0 1 6.2 4.5 V6" fill="none" stroke="#607888" stroke-width="1.1" shape-rendering="auto"/><rect x="0" y="6" width="7" height="6" fill="#ff6a00"/><rect x="0" y="11" width="7" height="1" fill="#c04800"/><rect x="0" y="6" width="1" height="6" fill="#ffa040"/><rect x="3" y="8" width="1.5" height="2.5" fill="#801000"/><path d="M7 9 L10 7 L15 9 L11 11 Z" fill="#c8d400"/><path d="M7 9 L11 11 V16 L7 14 Z" fill="#f0f800"/><path d="M11 11 L15 9 V14 L11 16 Z" fill="#a0a020"/></svg><div style="left:29px;top:191px;width:9px;height:9px;background:#fff;border:1px solid #000"></div><div style="left:31px;top:195px;width:5px;height:1px;background:#000"></div><div style="left:33px;top:193px;width:1px;height:5px;background:#000"></div><div style="left:39px;top:195px;width:6px;height:1px;background:repeating-linear-gradient(to right,#000 0 1px,transparent 1px 2px)"></div><svg style="position:absolute;left:46px;top:188px" width="12" height="14" viewBox="0 0 12 14" shape-rendering="crispEdges"><rect x="0.5" y="0.5" width="11" height="13" fill="#fff" stroke="#a8a8a8"/><path d="M2 2.5 H10" stroke="#2060a0" stroke-width="1.3"/><path d="M2 5 H3 M5 5 H10 M7 7 H10 M7 9 H10" stroke="#a0a8e0"/><path d="M4 6 L6.5 8.5 L4 11 L1.5 8.5 Z" fill="#e0f4f8" stroke="#3050b0"/></svg><div class="t" style="left:63px;top:189px;font-size:11px;line-height:15px;color:#000;">ПринятиеКУчетуНМА</div><svg style="position:absolute;left:219px;top:188px" width="16" height="16" viewBox="0 0 16 16" shape-rendering="crispEdges"><path d="M1.8 6 V4.5 A2.2 2.2 0 0 1 6.2 4.5 V6" fill="none" stroke="#607888" stroke-width="1.1" shape-rendering="auto"/><rect x="0" y="6" width="7" height="6" fill="#ff6a00"/><rect x="0" y="11" width="7" height="1" fill="#c04800"/><rect x="0" y="6" width="1" height="6" fill="#ffa040"/><rect x="3" y="8" width="1.5" height="2.5" fill="#801000"/><path d="M7 9 L10 7 L15 9 L11 11 Z" fill="#c8d400"/><path d="M7 9 L11 11 V16 L7 14 Z" fill="#f0f800"/><path d="M11 11 L15 9 V14 L11 16 Z" fill="#a0a020"/></svg><div style="left:29px;top:208px;width:9px;height:9px;background:#fff;border:1px solid #000"></div><div style="left:31px;top:212px;width:5px;height:1px;background:#000"></div><div style="left:33px;top:210px;width:1px;height:5px;background:#000"></div><div style="left:39px;top:212px;width:6px;height:1px;background:repeating-linear-gradient(to right,#000 0 1px,transparent 1px 2px)"></div><svg style="position:absolute;left:46px;top:205px" width="12" height="14" viewBox="0 0 12 14" shape-rendering="crispEdges"><rect x="0.5" y="0.5" width="11" height="13" fill="#fff" stroke="#a8a8a8"/><path d="M2 2.5 H10" stroke="#2060a0" stroke-width="1.3"/><path d="M2 5 H3 M5 5 H10 M7 7 H10 M7 9 H10" stroke="#a0a8e0"/><path d="M4 6 L6.5 8.5 L4 11 L1.5 8.5 Z" fill="#e0f4f8" stroke="#3050b0"/></svg><div class="t" style="left:63px;top:206px;font-size:11px;line-height:15px;color:#000;">ПринятиеКУчетуОС</div><svg style="position:absolute;left:219px;top:205px" width="16" height="16" viewBox="0 0 16 16" shape-rendering="crispEdges"><path d="M1.8 6 V4.5 A2.2 2.2 0 0 1 6.2 4.5 V6" fill="none" stroke="#607888" stroke-width="1.1" shape-rendering="auto"/><rect x="0" y="6" width="7" height="6" fill="#ff6a00"/><rect x="0" y="11" width="7" height="1" fill="#c04800"/><rect x="0" y="6" width="1" height="6" fill="#ffa040"/><rect x="3" y="8" width="1.5" height="2.5" fill="#801000"/><path d="M7 9 L10 7 L15 9 L11 11 Z" fill="#c8d400"/><path d="M7 9 L11 11 V16 L7 14 Z" fill="#f0f800"/><path d="M11 11 L15 9 V14 L11 16 Z" fill="#a0a020"/></svg><div style="left:29px;top:225px;width:9px;height:9px;background:#fff;border:1px solid #000"></div><div style="left:31px;top:229px;width:5px;height:1px;background:#000"></div><div style="left:33px;top:227px;width:1px;height:5px;background:#000"></div><div style="left:39px;top:229px;width:6px;height:1px;background:repeating-linear-gradient(to right,#000 0 1px,transparent 1px 2px)"></div><svg style="position:absolute;left:46px;top:222px" width="12" height="14" viewBox="0 0 12 14" shape-rendering="crispEdges"><rect x="0.5" y="0.5" width="11" height="13" fill="#fff" stroke="#a8a8a8"/><path d="M2 2.5 H10" stroke="#2060a0" stroke-width="1.3"/><path d="M2 5 H3 M5 5 H10 M7 7 H10 M7 9 H10" stroke="#a0a8e0"/><path d="M4 6 L6.5 8.5 L4 11 L1.5 8.5 Z" fill="#e0f4f8" stroke="#3050b0"/></svg><div class="t" style="left:63px;top:223px;font-size:11px;line-height:15px;color:#000;">ПриходныйКассовыйОрдер</div><svg style="position:absolute;left:219px;top:222px" width="16" height="16" viewBox="0 0 16 16" shape-rendering="crispEdges"><path d="M1.8 6 V4.5 A2.2 2.2 0 0 1 6.2 4.5 V6" fill="none" stroke="#607888" stroke-width="1.1" shape-rendering="auto"/><rect x="0" y="6" width="7" height="6" fill="#ff6a00"/><rect x="0" y="11" width="7" height="1" fill="#c04800"/><rect x="0" y="6" width="1" height="6" fill="#ffa040"/><rect x="3" y="8" width="1.5" height="2.5" fill="#801000"/><path d="M7 9 L10 7 L15 9 L11 11 Z" fill="#c8d400"/><path d="M7 9 L11 11 V16 L7 14 Z" fill="#f0f800"/><path d="M11 11 L15 9 V14 L11 16 Z" fill="#a0a020"/></svg><div style="left:29px;top:242px;width:9px;height:9px;background:#fff;border:1px solid #000"></div><div style="left:31px;top:246px;width:5px;height:1px;background:#000"></div><div style="left:33px;top:244px;width:1px;height:5px;background:#000"></div><div style="left:39px;top:246px;width:6px;height:1px;background:repeating-linear-gradient(to right,#000 0 1px,transparent 1px 2px)"></div><svg style="position:absolute;left:46px;top:239px" width="12" height="14" viewBox="0 0 12 14" shape-rendering="crispEdges"><rect x="0.5" y="0.5" width="11" height="13" fill="#fff" stroke="#a8a8a8"/><path d="M2 2.5 H10" stroke="#2060a0" stroke-width="1.3"/><path d="M2 5 H3 M5 5 H10 M7 7 H10 M7 9 H10" stroke="#a0a8e0"/><path d="M4 6 L6.5 8.5 L4 11 L1.5 8.5 Z" fill="#e0f4f8" stroke="#3050b0"/></svg><div class="t" style="left:63px;top:240px;font-size:11px;line-height:15px;color:#000;">РаспределениеНДСКосвен...</div><svg style="position:absolute;left:219px;top:239px" width="16" height="16" viewBox="0 0 16 16" shape-rendering="crispEdges"><path d="M1.8 6 V4.5 A2.2 2.2 0 0 1 6.2 4.5 V6" fill="none" stroke="#607888" stroke-width="1.1" shape-rendering="auto"/><rect x="0" y="6" width="7" height="6" fill="#ff6a00"/><rect x="0" y="11" width="7" height="1" fill="#c04800"/><rect x="0" y="6" width="1" height="6" fill="#ffa040"/><rect x="3" y="8" width="1.5" height="2.5" fill="#801000"/><path d="M7 9 L10 7 L15 9 L11 11 Z" fill="#c8d400"/><path d="M7 9 L11 11 V16 L7 14 Z" fill="#f0f800"/><path d="M11 11 L15 9 V14 L11 16 Z" fill="#a0a020"/></svg><div style="left:29px;top:259px;width:9px;height:9px;background:#fff;border:1px solid #000"></div><div style="left:31px;top:263px;width:5px;height:1px;background:#000"></div><div style="left:33px;top:261px;width:1px;height:5px;background:#000"></div><div style="left:39px;top:263px;width:6px;height:1px;background:repeating-linear-gradient(to right,#000 0 1px,transparent 1px 2px)"></div><svg style="position:absolute;left:46px;top:256px" width="12" height="14" viewBox="0 0 12 14" shape-rendering="crispEdges"><rect x="0.5" y="0.5" width="11" height="13" fill="#fff" stroke="#a8a8a8"/><path d="M2 2.5 H10" stroke="#2060a0" stroke-width="1.3"/><path d="M2 5 H3 M5 5 H10 M7 7 H10 M7 9 H10" stroke="#a0a8e0"/><path d="M4 6 L6.5 8.5 L4 11 L1.5 8.5 Z" fill="#e0f4f8" stroke="#3050b0"/></svg><div class="t" style="left:63px;top:257px;font-size:11px;line-height:15px;color:#000;">РасходныйКассовыйОрдер</div><svg style="position:absolute;left:219px;top:256px" width="16" height="16" viewBox="0 0 16 16" shape-rendering="crispEdges"><path d="M1.8 6 V4.5 A2.2 2.2 0 0 1 6.2 4.5 V6" fill="none" stroke="#607888" stroke-width="1.1" shape-rendering="auto"/><rect x="0" y="6" width="7" height="6" fill="#ff6a00"/><rect x="0" y="11" width="7" height="1" fill="#c04800"/><rect x="0" y="6" width="1" height="6" fill="#ffa040"/><rect x="3" y="8" width="1.5" height="2.5" fill="#801000"/><path d="M7 9 L10 7 L15 9 L11 11 Z" fill="#c8d400"/><path d="M7 9 L11 11 V16 L7 14 Z" fill="#f0f800"/><path d="M11 11 L15 9 V14 L11 16 Z" fill="#a0a020"/></svg><div style="left:29px;top:276px;width:9px;height:9px;background:#fff;border:1px solid #000"></div><div style="left:31px;top:280px;width:5px;height:1px;background:#000"></div><div style="left:33px;top:278px;width:1px;height:5px;background:#000"></div><div style="left:39px;top:280px;width:6px;height:1px;background:repeating-linear-gradient(to right,#000 0 1px,transparent 1px 2px)"></div><svg style="position:absolute;left:46px;top:273px" width="12" height="14" viewBox="0 0 12 14" shape-rendering="crispEdges"><rect x="0.5" y="0.5" width="11" height="13" fill="#fff" stroke="#a8a8a8"/><path d="M2 2.5 H10" stroke="#2060a0" stroke-width="1.3"/><path d="M2 5 H3 M5 5 H10 M7 7 H10 M7 9 H10" stroke="#a0a8e0"/><path d="M4 6 L6.5 8.5 L4 11 L1.5 8.5 Z" fill="#e0f4f8" stroke="#3050b0"/></svg><div class="t" style="left:63px;top:274px;font-size:11px;line-height:15px;color:#000;">РасчетЕСН</div><svg style="position:absolute;left:219px;top:273px" width="16" height="16" viewBox="0 0 16 16" shape-rendering="crispEdges"><path d="M1.8 6 V4.5 A2.2 2.2 0 0 1 6.2 4.5 V6" fill="none" stroke="#607888" stroke-width="1.1" shape-rendering="auto"/><rect x="0" y="6" width="7" height="6" fill="#ff6a00"/><rect x="0" y="11" width="7" height="1" fill="#c04800"/><rect x="0" y="6" width="1" height="6" fill="#ffa040"/><rect x="3" y="8" width="1.5" height="2.5" fill="#801000"/><path d="M7 9 L10 7 L15 9 L11 11 Z" fill="#c8d400"/><path d="M7 9 L11 11 V16 L7 14 Z" fill="#f0f800"/><path d="M11 11 L15 9 V14 L11 16 Z" fill="#a0a020"/></svg><div style="left:29px;top:293px;width:9px;height:9px;background:#fff;border:1px solid #000"></div><div style="left:31px;top:297px;width:5px;height:1px;background:#000"></div><div style="left:33px;top:295px;width:1px;height:5px;background:#000"></div><div style="left:39px;top:297px;width:6px;height:1px;background:repeating-linear-gradient(to right,#000 0 1px,transparent 1px 2px)"></div><svg style="position:absolute;left:46px;top:290px" width="12" height="14" viewBox="0 0 12 14" shape-rendering="crispEdges"><rect x="0.5" y="0.5" width="11" height="13" fill="#fff" stroke="#a8a8a8"/><path d="M2 2.5 H10" stroke="#2060a0" stroke-width="1.3"/><path d="M2 5 H3 M5 5 H10 M7 7 H10 M7 9 H10" stroke="#a0a8e0"/><path d="M4 6 L6.5 8.5 L4 11 L1.5 8.5 Z" fill="#e0f4f8" stroke="#3050b0"/></svg><div class="t" style="left:63px;top:291px;font-size:11px;line-height:15px;color:#000;">РеализацияОтгруженныхТо...</div><svg style="position:absolute;left:219px;top:290px" width="16" height="16" viewBox="0 0 16 16" shape-rendering="crispEdges"><path d="M1.8 6 V4.5 A2.2 2.2 0 0 1 6.2 4.5 V6" fill="none" stroke="#607888" stroke-width="1.1" shape-rendering="auto"/><rect x="0" y="6" width="7" height="6" fill="#ff6a00"/><rect x="0" y="11" width="7" height="1" fill="#c04800"/><rect x="0" y="6" width="1" height="6" fill="#ffa040"/><rect x="3" y="8" width="1.5" height="2.5" fill="#801000"/><path d="M7 9 L10 7 L15 9 L11 11 Z" fill="#c8d400"/><path d="M7 9 L11 11 V16 L7 14 Z" fill="#f0f800"/><path d="M11 11 L15 9 V14 L11 16 Z" fill="#a0a020"/></svg><div style="left:29px;top:310px;width:9px;height:9px;background:#fff;border:1px solid #000"></div><div style="left:31px;top:314px;width:5px;height:1px;background:#000"></div><div style="left:33px;top:312px;width:1px;height:5px;background:#000"></div><div style="left:39px;top:314px;width:6px;height:1px;background:repeating-linear-gradient(to right,#000 0 1px,transparent 1px 2px)"></div><svg style="position:absolute;left:46px;top:307px" width="12" height="14" viewBox="0 0 12 14" shape-rendering="crispEdges"><rect x="0.5" y="0.5" width="11" height="13" fill="#fff" stroke="#a8a8a8"/><path d="M2 2.5 H10" stroke="#2060a0" stroke-width="1.3"/><path d="M2 5 H3 M5 5 H10 M7 7 H10 M7 9 H10" stroke="#a0a8e0"/><path d="M4 6 L6.5 8.5 L4 11 L1.5 8.5 Z" fill="#e0f4f8" stroke="#3050b0"/></svg><div class="t" style="left:63px;top:308px;font-size:11px;line-height:15px;color:#000;">РеализацияТоваровУслуг</div><svg style="position:absolute;left:219px;top:307px" width="16" height="16" viewBox="0 0 16 16" shape-rendering="crispEdges"><path d="M1.8 6 V4.5 A2.2 2.2 0 0 1 6.2 4.5 V6" fill="none" stroke="#607888" stroke-width="1.1" shape-rendering="auto"/><rect x="0" y="6" width="7" height="6" fill="#ff6a00"/><rect x="0" y="11" width="7" height="1" fill="#c04800"/><rect x="0" y="6" width="1" height="6" fill="#ffa040"/><rect x="3" y="8" width="1.5" height="2.5" fill="#801000"/><path d="M7 9 L10 7 L15 9 L11 11 Z" fill="#c8d400"/><path d="M7 9 L11 11 V16 L7 14 Z" fill="#f0f800"/><path d="M11 11 L15 9 V14 L11 16 Z" fill="#a0a020"/></svg><div style="left:29px;top:327px;width:9px;height:9px;background:#fff;border:1px solid #000"></div><div style="left:31px;top:331px;width:5px;height:1px;background:#000"></div><div style="left:33px;top:329px;width:1px;height:5px;background:#000"></div><div style="left:39px;top:331px;width:6px;height:1px;background:repeating-linear-gradient(to right,#000 0 1px,transparent 1px 2px)"></div><svg style="position:absolute;left:46px;top:324px" width="12" height="14" viewBox="0 0 12 14" shape-rendering="crispEdges"><rect x="0.5" y="0.5" width="11" height="13" fill="#fff" stroke="#a8a8a8"/><path d="M2 2.5 H10" stroke="#2060a0" stroke-width="1.3"/><path d="M2 5 H3 M5 5 H10 M7 7 H10 M7 9 H10" stroke="#a0a8e0"/><path d="M4 6 L6.5 8.5 L4 11 L1.5 8.5 Z" fill="#e0f4f8" stroke="#3050b0"/></svg><div class="t" style="left:63px;top:325px;font-size:11px;line-height:15px;color:#000;">РеализацияУслугПоПерер...</div><svg style="position:absolute;left:219px;top:324px" width="16" height="16" viewBox="0 0 16 16" shape-rendering="crispEdges"><path d="M1.8 6 V4.5 A2.2 2.2 0 0 1 6.2 4.5 V6" fill="none" stroke="#607888" stroke-width="1.1" shape-rendering="auto"/><rect x="0" y="6" width="7" height="6" fill="#ff6a00"/><rect x="0" y="11" width="7" height="1" fill="#c04800"/><rect x="0" y="6" width="1" height="6" fill="#ffa040"/><rect x="3" y="8" width="1.5" height="2.5" fill="#801000"/><path d="M7 9 L10 7 L15 9 L11 11 Z" fill="#c8d400"/><path d="M7 9 L11 11 V16 L7 14 Z" fill="#f0f800"/><path d="M11 11 L15 9 V14 L11 16 Z" fill="#a0a020"/></svg><div style="left:29px;top:344px;width:9px;height:9px;background:#fff;border:1px solid #000"></div><div style="left:31px;top:348px;width:5px;height:1px;background:#000"></div><div style="left:33px;top:346px;width:1px;height:5px;background:#000"></div><div style="left:39px;top:348px;width:6px;height:1px;background:repeating-linear-gradient(to right,#000 0 1px,transparent 1px 2px)"></div><svg style="position:absolute;left:46px;top:341px" width="12" height="14" viewBox="0 0 12 14" shape-rendering="crispEdges"><rect x="0.5" y="0.5" width="11" height="13" fill="#fff" stroke="#a8a8a8"/><path d="M2 2.5 H10" stroke="#2060a0" stroke-width="1.3"/><path d="M2 5 H3 M5 5 H10 M7 7 H10 M7 9 H10" stroke="#a0a8e0"/><path d="M4 6 L6.5 8.5 L4 11 L1.5 8.5 Z" fill="#e0f4f8" stroke="#3050b0"/></svg><div class="t" style="left:63px;top:342px;font-size:11px;line-height:15px;color:#000;">РегистрацияОплатыНДСВБ...</div><svg style="position:absolute;left:219px;top:341px" width="16" height="16" viewBox="0 0 16 16" shape-rendering="crispEdges"><path d="M1.8 6 V4.5 A2.2 2.2 0 0 1 6.2 4.5 V6" fill="none" stroke="#607888" stroke-width="1.1" shape-rendering="auto"/><rect x="0" y="6" width="7" height="6" fill="#ff6a00"/><rect x="0" y="11" width="7" height="1" fill="#c04800"/><rect x="0" y="6" width="1" height="6" fill="#ffa040"/><rect x="3" y="8" width="1.5" height="2.5" fill="#801000"/><path d="M7 9 L10 7 L15 9 L11 11 Z" fill="#c8d400"/><path d="M7 9 L11 11 V16 L7 14 Z" fill="#f0f800"/><path d="M11 11 L15 9 V14 L11 16 Z" fill="#a0a020"/></svg><div style="left:29px;top:361px;width:9px;height:9px;background:#fff;border:1px solid #000"></div><div style="left:31px;top:365px;width:5px;height:1px;background:#000"></div><div style="left:33px;top:363px;width:1px;height:5px;background:#000"></div><div style="left:39px;top:365px;width:6px;height:1px;background:repeating-linear-gradient(to right,#000 0 1px,transparent 1px 2px)"></div><svg style="position:absolute;left:46px;top:358px" width="12" height="14" viewBox="0 0 12 14" shape-rendering="crispEdges"><rect x="0.5" y="0.5" width="11" height="13" fill="#fff" stroke="#a8a8a8"/><path d="M2 2.5 H10" stroke="#2060a0" stroke-width="1.3"/><path d="M2 5 H3 M5 5 H10 M7 7 H10 M7 9 H10" stroke="#a0a8e0"/><path d="M4 6 L6.5 8.5 L4 11 L1.5 8.5 Z" fill="#e0f4f8" stroke="#3050b0"/></svg><div class="t" style="left:63px;top:359px;font-size:11px;line-height:15px;color:#000;">РегистрацияОплатыОсновн...</div><svg style="position:absolute;left:219px;top:358px" width="16" height="16" viewBox="0 0 16 16" shape-rendering="crispEdges"><path d="M1.8 6 V4.5 A2.2 2.2 0 0 1 6.2 4.5 V6" fill="none" stroke="#607888" stroke-width="1.1" shape-rendering="auto"/><rect x="0" y="6" width="7" height="6" fill="#ff6a00"/><rect x="0" y="11" width="7" height="1" fill="#c04800"/><rect x="0" y="6" width="1" height="6" fill="#ffa040"/><rect x="3" y="8" width="1.5" height="2.5" fill="#801000"/><path d="M7 9 L10 7 L15 9 L11 11 Z" fill="#c8d400"/><path d="M7 9 L11 11 V16 L7 14 Z" fill="#f0f800"/><path d="M11 11 L15 9 V14 L11 16 Z" fill="#a0a020"/></svg><div style="left:29px;top:378px;width:9px;height:9px;background:#fff;border:1px solid #000"></div><div style="left:31px;top:382px;width:5px;height:1px;background:#000"></div><div style="left:33px;top:380px;width:1px;height:5px;background:#000"></div><div style="left:39px;top:382px;width:6px;height:1px;background:repeating-linear-gradient(to right,#000 0 1px,transparent 1px 2px)"></div><svg style="position:absolute;left:46px;top:375px" width="12" height="14" viewBox="0 0 12 14" shape-rendering="crispEdges"><rect x="0.5" y="0.5" width="11" height="13" fill="#fff" stroke="#a8a8a8"/><path d="M2 2.5 H10" stroke="#2060a0" stroke-width="1.3"/><path d="M2 5 H3 M5 5 H10 M7 7 H10 M7 9 H10" stroke="#a0a8e0"/><path d="M4 6 L6.5 8.5 L4 11 L1.5 8.5 Z" fill="#e0f4f8" stroke="#3050b0"/></svg><div class="t" style="left:63px;top:376px;font-size:11px;line-height:15px;color:#000;">РегистрацияОплатыОтПоку...</div><svg style="position:absolute;left:219px;top:375px" width="16" height="16" viewBox="0 0 16 16" shape-rendering="crispEdges"><path d="M1.8 6 V4.5 A2.2 2.2 0 0 1 6.2 4.5 V6" fill="none" stroke="#607888" stroke-width="1.1" shape-rendering="auto"/><rect x="0" y="6" width="7" height="6" fill="#ff6a00"/><rect x="0" y="11" width="7" height="1" fill="#c04800"/><rect x="0" y="6" width="1" height="6" fill="#ffa040"/><rect x="3" y="8" width="1.5" height="2.5" fill="#801000"/><path d="M7 9 L10 7 L15 9 L11 11 Z" fill="#c8d400"/><path d="M7 9 L11 11 V16 L7 14 Z" fill="#f0f800"/><path d="M11 11 L15 9 V14 L11 16 Z" fill="#a0a020"/></svg><div style="left:29px;top:395px;width:9px;height:9px;background:#fff;border:1px solid #000"></div><div style="left:31px;top:399px;width:5px;height:1px;background:#000"></div><div style="left:33px;top:397px;width:1px;height:5px;background:#000"></div><div style="left:39px;top:399px;width:6px;height:1px;background:repeating-linear-gradient(to right,#000 0 1px,transparent 1px 2px)"></div><svg style="position:absolute;left:46px;top:392px" width="12" height="14" viewBox="0 0 12 14" shape-rendering="crispEdges"><rect x="0.5" y="0.5" width="11" height="13" fill="#fff" stroke="#a8a8a8"/><path d="M2 2.5 H10" stroke="#2060a0" stroke-width="1.3"/><path d="M2 5 H3 M5 5 H10 M7 7 H10 M7 9 H10" stroke="#a0a8e0"/><path d="M4 6 L6.5 8.5 L4 11 L1.5 8.5 Z" fill="#e0f4f8" stroke="#3050b0"/></svg><div class="t" style="left:63px;top:393px;font-size:11px;line-height:15px;color:#000;">РегистрацияОплатыПостав...</div><svg style="position:absolute;left:219px;top:392px" width="16" height="16" viewBox="0 0 16 16" shape-rendering="crispEdges"><path d="M1.8 6 V4.5 A2.2 2.2 0 0 1 6.2 4.5 V6" fill="none" stroke="#607888" stroke-width="1.1" shape-rendering="auto"/><rect x="0" y="6" width="7" height="6" fill="#ff6a00"/><rect x="0" y="11" width="7" height="1" fill="#c04800"/><rect x="0" y="6" width="1" height="6" fill="#ffa040"/><rect x="3" y="8" width="1.5" height="2.5" fill="#801000"/><path d="M7 9 L10 7 L15 9 L11 11 Z" fill="#c8d400"/><path d="M7 9 L11 11 V16 L7 14 Z" fill="#f0f800"/><path d="M11 11 L15 9 V14 L11 16 Z" fill="#a0a020"/></svg><div style="left:29px;top:412px;width:9px;height:9px;background:#fff;border:1px solid #000"></div><div style="left:31px;top:416px;width:5px;height:1px;background:#000"></div><div style="left:33px;top:414px;width:1px;height:5px;background:#000"></div><div style="left:39px;top:416px;width:6px;height:1px;background:repeating-linear-gradient(to right,#000 0 1px,transparent 1px 2px)"></div><svg style="position:absolute;left:46px;top:409px" width="12" height="14" viewBox="0 0 12 14" shape-rendering="crispEdges"><rect x="0.5" y="0.5" width="11" height="13" fill="#fff" stroke="#a8a8a8"/><path d="M2 2.5 H10" stroke="#2060a0" stroke-width="1.3"/><path d="M2 5 H3 M5 5 H10 M7 7 H10 M7 9 H10" stroke="#a0a8e0"/><path d="M4 6 L6.5 8.5 L4 11 L1.5 8.5 Z" fill="#e0f4f8" stroke="#3050b0"/></svg><div class="t" style="left:63px;top:410px;font-size:11px;line-height:15px;color:#000;">РегламентированныйОтчет</div><svg style="position:absolute;left:219px;top:409px" width="16" height="16" viewBox="0 0 16 16" shape-rendering="crispEdges"><path d="M1.8 6 V4.5 A2.2 2.2 0 0 1 6.2 4.5 V6" fill="none" stroke="#607888" stroke-width="1.1" shape-rendering="auto"/><rect x="0" y="6" width="7" height="6" fill="#ff6a00"/><rect x="0" y="11" width="7" height="1" fill="#c04800"/><rect x="0" y="6" width="1" height="6" fill="#ffa040"/><rect x="3" y="8" width="1.5" height="2.5" fill="#801000"/><path d="M7 9 L10 7 L15 9 L11 11 Z" fill="#c8d400"/><path d="M7 9 L11 11 V16 L7 14 Z" fill="#f0f800"/><path d="M11 11 L15 9 V14 L11 16 Z" fill="#a0a020"/></svg><div style="left:29px;top:429px;width:9px;height:9px;background:#fff;border:1px solid #000"></div><div style="left:31px;top:433px;width:5px;height:1px;background:#000"></div><div style="left:33px;top:431px;width:1px;height:5px;background:#000"></div><div style="left:39px;top:433px;width:6px;height:1px;background:repeating-linear-gradient(to right,#000 0 1px,transparent 1px 2px)"></div><svg style="position:absolute;left:46px;top:426px" width="12" height="14" viewBox="0 0 12 14" shape-rendering="crispEdges"><rect x="0.5" y="0.5" width="11" height="13" fill="#fff" stroke="#a8a8a8"/><path d="M2 2.5 H10" stroke="#2060a0" stroke-width="1.3"/><path d="M2 5 H3 M5 5 H10 M7 7 H10 M7 9 H10" stroke="#a0a8e0"/><path d="M4 6 L6.5 8.5 L4 11 L1.5 8.5 Z" fill="#e0f4f8" stroke="#3050b0"/></svg><div class="t" style="left:63px;top:427px;font-size:11px;line-height:15px;color:#000;">СведенияОДоходахФизлиц</div><svg style="position:absolute;left:219px;top:426px" width="16" height="16" viewBox="0 0 16 16" shape-rendering="crispEdges"><path d="M1.8 6 V4.5 A2.2 2.2 0 0 1 6.2 4.5 V6" fill="none" stroke="#607888" stroke-width="1.1" shape-rendering="auto"/><rect x="0" y="6" width="7" height="6" fill="#ff6a00"/><rect x="0" y="11" width="7" height="1" fill="#c04800"/><rect x="0" y="6" width="1" height="6" fill="#ffa040"/><rect x="3" y="8" width="1.5" height="2.5" fill="#801000"/><path d="M7 9 L10 7 L15 9 L11 11 Z" fill="#c8d400"/><path d="M7 9 L11 11 V16 L7 14 Z" fill="#f0f800"/><path d="M11 11 L15 9 V14 L11 16 Z" fill="#a0a020"/></svg><div style="left:29px;top:446px;width:9px;height:9px;background:#fff;border:1px solid #000"></div><div style="left:31px;top:450px;width:5px;height:1px;background:#000"></div><div style="left:33px;top:448px;width:1px;height:5px;background:#000"></div><div style="left:39px;top:450px;width:6px;height:1px;background:repeating-linear-gradient(to right,#000 0 1px,transparent 1px 2px)"></div><svg style="position:absolute;left:46px;top:443px" width="12" height="14" viewBox="0 0 12 14" shape-rendering="crispEdges"><rect x="0.5" y="0.5" width="11" height="13" fill="#fff" stroke="#a8a8a8"/><path d="M2 2.5 H10" stroke="#2060a0" stroke-width="1.3"/><path d="M2 5 H3 M5 5 H10 M7 7 H10 M7 9 H10" stroke="#a0a8e0"/><path d="M4 6 L6.5 8.5 L4 11 L1.5 8.5 Z" fill="#e0f4f8" stroke="#3050b0"/></svg><div class="t" style="left:63px;top:444px;font-size:11px;line-height:15px;color:#000;">СведенияОТрудовомСтаже...</div><svg style="position:absolute;left:219px;top:443px" width="16" height="16" viewBox="0 0 16 16" shape-rendering="crispEdges"><path d="M1.8 6 V4.5 A2.2 2.2 0 0 1 6.2 4.5 V6" fill="none" stroke="#607888" stroke-width="1.1" shape-rendering="auto"/><rect x="0" y="6" width="7" height="6" fill="#ff6a00"/><rect x="0" y="11" width="7" height="1" fill="#c04800"/><rect x="0" y="6" width="1" height="6" fill="#ffa040"/><rect x="3" y="8" width="1.5" height="2.5" fill="#801000"/><path d="M7 9 L10 7 L15 9 L11 11 Z" fill="#c8d400"/><path d="M7 9 L11 11 V16 L7 14 Z" fill="#f0f800"/><path d="M11 11 L15 9 V14 L11 16 Z" fill="#a0a020"/></svg><div style="left:29px;top:463px;width:9px;height:9px;background:#fff;border:1px solid #000"></div><div style="left:31px;top:467px;width:5px;height:1px;background:#000"></div><div style="left:33px;top:465px;width:1px;height:5px;background:#000"></div><div style="left:39px;top:467px;width:6px;height:1px;background:repeating-linear-gradient(to right,#000 0 1px,transparent 1px 2px)"></div><svg style="position:absolute;left:46px;top:460px" width="12" height="14" viewBox="0 0 12 14" shape-rendering="crispEdges"><rect x="0.5" y="0.5" width="11" height="13" fill="#fff" stroke="#a8a8a8"/><path d="M2 2.5 H10" stroke="#2060a0" stroke-width="1.3"/><path d="M2 5 H3 M5 5 H10 M7 7 H10 M7 9 H10" stroke="#a0a8e0"/><path d="M4 6 L6.5 8.5 L4 11 L1.5 8.5 Z" fill="#e0f4f8" stroke="#3050b0"/></svg><div class="t" style="left:63px;top:461px;font-size:11px;line-height:15px;color:#000;">СписаниеДепонентовВДок...</div><svg style="position:absolute;left:219px;top:460px" width="16" height="16" viewBox="0 0 16 16" shape-rendering="crispEdges"><path d="M1.8 6 V4.5 A2.2 2.2 0 0 1 6.2 4.5 V6" fill="none" stroke="#607888" stroke-width="1.1" shape-rendering="auto"/><rect x="0" y="6" width="7" height="6" fill="#ff6a00"/><rect x="0" y="11" width="7" height="1" fill="#c04800"/><rect x="0" y="6" width="1" height="6" fill="#ffa040"/><rect x="3" y="8" width="1.5" height="2.5" fill="#801000"/><path d="M7 9 L10 7 L15 9 L11 11 Z" fill="#c8d400"/><path d="M7 9 L11 11 V16 L7 14 Z" fill="#f0f800"/><path d="M11 11 L15 9 V14 L11 16 Z" fill="#a0a020"/></svg><div style="left:29px;top:480px;width:9px;height:9px;background:#fff;border:1px solid #000"></div><div style="left:31px;top:484px;width:5px;height:1px;background:#000"></div><div style="left:33px;top:482px;width:1px;height:5px;background:#000"></div><div style="left:39px;top:484px;width:6px;height:1px;background:repeating-linear-gradient(to right,#000 0 1px,transparent 1px 2px)"></div><svg style="position:absolute;left:46px;top:477px" width="12" height="14" viewBox="0 0 12 14" shape-rendering="crispEdges"><rect x="0.5" y="0.5" width="11" height="13" fill="#fff" stroke="#a8a8a8"/><path d="M2 2.5 H10" stroke="#2060a0" stroke-width="1.3"/><path d="M2 5 H3 M5 5 H10 M7 7 H10 M7 9 H10" stroke="#a0a8e0"/><path d="M4 6 L6.5 8.5 L4 11 L1.5 8.5 Z" fill="#e0f4f8" stroke="#3050b0"/></svg><div class="t" style="left:63px;top:478px;font-size:11px;line-height:15px;color:#000;">СписаниеМатериаловИзЭк...</div><svg style="position:absolute;left:219px;top:477px" width="16" height="16" viewBox="0 0 16 16" shape-rendering="crispEdges"><path d="M1.8 6 V4.5 A2.2 2.2 0 0 1 6.2 4.5 V6" fill="none" stroke="#607888" stroke-width="1.1" shape-rendering="auto"/><rect x="0" y="6" width="7" height="6" fill="#ff6a00"/><rect x="0" y="11" width="7" height="1" fill="#c04800"/><rect x="0" y="6" width="1" height="6" fill="#ffa040"/><rect x="3" y="8" width="1.5" height="2.5" fill="#801000"/><path d="M7 9 L10 7 L15 9 L11 11 Z" fill="#c8d400"/><path d="M7 9 L11 11 V16 L7 14 Z" fill="#f0f800"/><path d="M11 11 L15 9 V14 L11 16 Z" fill="#a0a020"/></svg><div style="left:29px;top:497px;width:9px;height:9px;background:#fff;border:1px solid #000"></div><div style="left:31px;top:501px;width:5px;height:1px;background:#000"></div><div style="left:33px;top:499px;width:1px;height:5px;background:#000"></div><div style="left:39px;top:501px;width:6px;height:1px;background:repeating-linear-gradient(to right,#000 0 1px,transparent 1px 2px)"></div><svg style="position:absolute;left:46px;top:494px" width="12" height="14" viewBox="0 0 12 14" shape-rendering="crispEdges"><rect x="0.5" y="0.5" width="11" height="13" fill="#fff" stroke="#a8a8a8"/><path d="M2 2.5 H10" stroke="#2060a0" stroke-width="1.3"/><path d="M2 5 H3 M5 5 H10 M7 7 H10 M7 9 H10" stroke="#a0a8e0"/><path d="M4 6 L6.5 8.5 L4 11 L1.5 8.5 Z" fill="#e0f4f8" stroke="#3050b0"/></svg><div class="t" style="left:63px;top:495px;font-size:11px;line-height:15px;color:#000;">СписаниеНДС</div><svg style="position:absolute;left:219px;top:494px" width="16" height="16" viewBox="0 0 16 16" shape-rendering="crispEdges"><path d="M1.8 6 V4.5 A2.2 2.2 0 0 1 6.2 4.5 V6" fill="none" stroke="#607888" stroke-width="1.1" shape-rendering="auto"/><rect x="0" y="6" width="7" height="6" fill="#ff6a00"/><rect x="0" y="11" width="7" height="1" fill="#c04800"/><rect x="0" y="6" width="1" height="6" fill="#ffa040"/><rect x="3" y="8" width="1.5" height="2.5" fill="#801000"/><path d="M7 9 L10 7 L15 9 L11 11 Z" fill="#c8d400"/><path d="M7 9 L11 11 V16 L7 14 Z" fill="#f0f800"/><path d="M11 11 L15 9 V14 L11 16 Z" fill="#a0a020"/></svg><div style="left:29px;top:514px;width:9px;height:9px;background:#fff;border:1px solid #000"></div><div style="left:31px;top:518px;width:5px;height:1px;background:#000"></div><div style="left:33px;top:516px;width:1px;height:5px;background:#000"></div><div style="left:39px;top:518px;width:6px;height:1px;background:repeating-linear-gradient(to right,#000 0 1px,transparent 1px 2px)"></div><svg style="position:absolute;left:46px;top:511px" width="12" height="14" viewBox="0 0 12 14" shape-rendering="crispEdges"><rect x="0.5" y="0.5" width="11" height="13" fill="#fff" stroke="#a8a8a8"/><path d="M2 2.5 H10" stroke="#2060a0" stroke-width="1.3"/><path d="M2 5 H3 M5 5 H10 M7 7 H10 M7 9 H10" stroke="#a0a8e0"/><path d="M4 6 L6.5 8.5 L4 11 L1.5 8.5 Z" fill="#e0f4f8" stroke="#3050b0"/></svg><div class="t" style="left:63px;top:512px;font-size:11px;line-height:15px;color:#000;">СписаниеНМА</div><svg style="position:absolute;left:219px;top:511px" width="16" height="16" viewBox="0 0 16 16" shape-rendering="crispEdges"><path d="M1.8 6 V4.5 A2.2 2.2 0 0 1 6.2 4.5 V6" fill="none" stroke="#607888" stroke-width="1.1" shape-rendering="auto"/><rect x="0" y="6" width="7" height="6" fill="#ff6a00"/><rect x="0" y="11" width="7" height="1" fill="#c04800"/><rect x="0" y="6" width="1" height="6" fill="#ffa040"/><rect x="3" y="8" width="1.5" height="2.5" fill="#801000"/><path d="M7 9 L10 7 L15 9 L11 11 Z" fill="#c8d400"/><path d="M7 9 L11 11 V16 L7 14 Z" fill="#f0f800"/><path d="M11 11 L15 9 V14 L11 16 Z" fill="#a0a020"/></svg><div style="left:29px;top:531px;width:9px;height:9px;background:#fff;border:1px solid #000"></div><div style="left:31px;top:535px;width:5px;height:1px;background:#000"></div><div style="left:33px;top:533px;width:1px;height:5px;background:#000"></div><div style="left:39px;top:535px;width:6px;height:1px;background:repeating-linear-gradient(to right,#000 0 1px,transparent 1px 2px)"></div><svg style="position:absolute;left:46px;top:528px" width="12" height="14" viewBox="0 0 12 14" shape-rendering="crispEdges"><rect x="0.5" y="0.5" width="11" height="13" fill="#fff" stroke="#a8a8a8"/><path d="M2 2.5 H10" stroke="#2060a0" stroke-width="1.3"/><path d="M2 5 H3 M5 5 H10 M7 7 H10 M7 9 H10" stroke="#a0a8e0"/><path d="M4 6 L6.5 8.5 L4 11 L1.5 8.5 Z" fill="#e0f4f8" stroke="#3050b0"/></svg><div class="t" style="left:63px;top:529px;font-size:11px;line-height:15px;color:#000;">СписаниеОС</div><svg style="position:absolute;left:219px;top:528px" width="16" height="16" viewBox="0 0 16 16" shape-rendering="crispEdges"><path d="M1.8 6 V4.5 A2.2 2.2 0 0 1 6.2 4.5 V6" fill="none" stroke="#607888" stroke-width="1.1" shape-rendering="auto"/><rect x="0" y="6" width="7" height="6" fill="#ff6a00"/><rect x="0" y="11" width="7" height="1" fill="#c04800"/><rect x="0" y="6" width="1" height="6" fill="#ffa040"/><rect x="3" y="8" width="1.5" height="2.5" fill="#801000"/><path d="M7 9 L10 7 L15 9 L11 11 Z" fill="#c8d400"/><path d="M7 9 L11 11 V16 L7 14 Z" fill="#f0f800"/><path d="M11 11 L15 9 V14 L11 16 Z" fill="#a0a020"/></svg><div style="left:29px;top:548px;width:9px;height:9px;background:#fff;border:1px solid #000"></div><div style="left:31px;top:552px;width:5px;height:1px;background:#000"></div><div style="left:33px;top:550px;width:1px;height:5px;background:#000"></div><div style="left:39px;top:552px;width:6px;height:1px;background:repeating-linear-gradient(to right,#000 0 1px,transparent 1px 2px)"></div><svg style="position:absolute;left:46px;top:545px" width="12" height="14" viewBox="0 0 12 14" shape-rendering="crispEdges"><rect x="0.5" y="0.5" width="11" height="13" fill="#fff" stroke="#a8a8a8"/><path d="M2 2.5 H10" stroke="#2060a0" stroke-width="1.3"/><path d="M2 5 H3 M5 5 H10 M7 7 H10 M7 9 H10" stroke="#a0a8e0"/><path d="M4 6 L6.5 8.5 L4 11 L1.5 8.5 Z" fill="#e0f4f8" stroke="#3050b0"/></svg><div class="t" style="left:63px;top:546px;font-size:11px;line-height:15px;color:#000;">СписаниеТоваров</div><svg style="position:absolute;left:219px;top:545px" width="16" height="16" viewBox="0 0 16 16" shape-rendering="crispEdges"><path d="M1.8 6 V4.5 A2.2 2.2 0 0 1 6.2 4.5 V6" fill="none" stroke="#607888" stroke-width="1.1" shape-rendering="auto"/><rect x="0" y="6" width="7" height="6" fill="#ff6a00"/><rect x="0" y="11" width="7" height="1" fill="#c04800"/><rect x="0" y="6" width="1" height="6" fill="#ffa040"/><rect x="3" y="8" width="1.5" height="2.5" fill="#801000"/><path d="M7 9 L10 7 L15 9 L11 11 Z" fill="#c8d400"/><path d="M7 9 L11 11 V16 L7 14 Z" fill="#f0f800"/><path d="M11 11 L15 9 V14 L11 16 Z" fill="#a0a020"/></svg><div style="left:29px;top:565px;width:9px;height:9px;background:#fff;border:1px solid #000"></div><div style="left:31px;top:569px;width:5px;height:1px;background:#000"></div><div style="left:39px;top:569px;width:6px;height:1px;background:repeating-linear-gradient(to right,#000 0 1px,transparent 1px 2px)"></div><svg style="position:absolute;left:46px;top:562px" width="12" height="14" viewBox="0 0 12 14" shape-rendering="crispEdges"><rect x="0.5" y="0.5" width="11" height="13" fill="#fff" stroke="#a8a8a8"/><path d="M2 2.5 H10" stroke="#2060a0" stroke-width="1.3"/><path d="M2 5 H3 M5 5 H10 M7 7 H10 M7 9 H10" stroke="#a0a8e0"/><path d="M4 6 L6.5 8.5 L4 11 L1.5 8.5 Z" fill="#e0f4f8" stroke="#3050b0"/></svg><div class="t" style="left:63px;top:563px;font-size:11px;line-height:15px;color:#000;">СчетНаОплатуПокупателю</div><svg style="position:absolute;left:219px;top:562px" width="16" height="16" viewBox="0 0 16 16" shape-rendering="crispEdges"><path d="M1.8 6 V4.5 A2.2 2.2 0 0 1 6.2 4.5 V6" fill="none" stroke="#607888" stroke-width="1.1" shape-rendering="auto"/><rect x="0" y="6" width="7" height="6" fill="#ff6a00"/><rect x="0" y="11" width="7" height="1" fill="#c04800"/><rect x="0" y="6" width="1" height="6" fill="#ffa040"/><rect x="3" y="8" width="1.5" height="2.5" fill="#801000"/><path d="M7 9 L10 7 L15 9 L11 11 Z" fill="#c8d400"/><path d="M7 9 L11 11 V16 L7 14 Z" fill="#f0f800"/><path d="M11 11 L15 9 V14 L11 16 Z" fill="#a0a020"/></svg><div style="left:48px;top:582px;width:9px;height:9px;background:#fff;border:1px solid #000"></div><div style="left:50px;top:586px;width:5px;height:1px;background:#000"></div><div style="left:52px;top:584px;width:1px;height:5px;background:#000"></div><div style="left:58px;top:586px;width:4px;height:1px;background:repeating-linear-gradient(to right,#000 0 1px,transparent 1px 2px)"></div><svg style="position:absolute;left:62px;top:579px" width="16" height="16" viewBox="0 0 16 16" shape-rendering="crispEdges"><rect x="2" y="2" width="12" height="3" fill="#2060c0"/><rect x="2" y="7" width="12" height="3" fill="#2060c0"/><rect x="2" y="12" width="12" height="3" fill="#2060c0"/><rect x="2" y="2" width="5" height="3" fill="#80b0f0"/><rect x="2" y="7" width="5" height="3" fill="#80b0f0"/><rect x="2" y="12" width="5" height="3" fill="#80b0f0"/></svg><div class="t" style="left:82px;top:580px;font-size:11px;line-height:15px;color:#000;">Реквизиты</div><div style="left:48px;top:599px;width:9px;height:9px;background:#fff;border:1px solid #000"></div><div style="left:50px;top:603px;width:5px;height:1px;background:#000"></div><div style="left:52px;top:601px;width:1px;height:5px;background:#000"></div><div style="left:58px;top:603px;width:4px;height:1px;background:repeating-linear-gradient(to right,#000 0 1px,transparent 1px 2px)"></div><svg style="position:absolute;left:62px;top:596px" width="16" height="16" viewBox="0 0 16 16" shape-rendering="crispEdges"><path d="M1 3 H15 M1 6 H15 M1 9 H15 M1 12 H15" stroke="#2060c0" stroke-width="2"/><path d="M5 1 V14 M10 1 V14" stroke="#fff" stroke-width="1"/><rect x="8.5" y="9.5" width="7" height="6" fill="#c8c080" stroke="#909060"/></svg><div class="t" style="left:82px;top:597px;font-size:11px;line-height:15px;color:#000;">Табличные части</div><div style="left:48px;top:616px;width:9px;height:9px;background:#fff;border:1px solid #000"></div><div style="left:50px;top:620px;width:5px;height:1px;background:#000"></div><div style="left:52px;top:618px;width:1px;height:5px;background:#000"></div><div style="left:58px;top:620px;width:4px;height:1px;background:repeating-linear-gradient(to right,#000 0 1px,transparent 1px 2px)"></div><svg style="position:absolute;left:62px;top:613px" width="16" height="16" viewBox="0 0 16 16" shape-rendering="crispEdges"><rect x="0.5" y="0.5" width="11" height="10" fill="#e8e8e8" stroke="#909090"/><rect x="1" y="1" width="10" height="2" fill="#40a0e0"/><path d="M1 5 H11 M1 7 H11 M6 3 V10" stroke="#b0b0b0"/><rect x="3.5" y="5.5" width="12" height="10" fill="#d8d8d8" stroke="#909090"/><rect x="4" y="6" width="11" height="2" fill="#40a0e0"/><path d="M4 10 H15 M4 12 H15" stroke="#b0b0b0"/></svg><div class="t" style="left:82px;top:614px;font-size:11px;line-height:15px;color:#000;">Формы</div><div style="left:48px;top:633px;width:9px;height:9px;background:#fff;border:1px solid #000"></div><div style="left:50px;top:637px;width:5px;height:1px;background:#000"></div><div style="left:58px;top:637px;width:4px;height:1px;background:repeating-linear-gradient(to right,#000 0 1px,transparent 1px 2px)"></div><svg style="position:absolute;left:62px;top:630px" width="16" height="16" viewBox="0 0 16 16" shape-rendering="crispEdges"><rect x="0.5" y="0.5" width="14" height="12" fill="#fff" stroke="#909090"/><path d="M2 4 H7 M2 7 H12 M2 10 H8" stroke="#e0c080"/><path d="M9 3 H13 M9 5 H13" stroke="#a0a0a0"/><path d="M2 8 H13" stroke="#80a0e0"/><rect x="8.5" y="9.5" width="7" height="6" fill="#c8c080" stroke="#909060"/></svg><div class="t" style="left:82px;top:631px;font-size:11px;line-height:15px;color:#000;">Макеты</div><div style="left:71px;top:642px;width:1px;height:12px;background:repeating-linear-gradient(to bottom,#000 0 1px,transparent 1px 2px)"></div><div style="left:72px;top:654px;width:8px;height:1px;background:repeating-linear-gradient(to right,#000 0 1px,transparent 1px 2px)"></div><svg style="position:absolute;left:81px;top:648px" width="16" height="16" viewBox="0 0 16 16" shape-rendering="crispEdges"><rect x="0.5" y="1.5" width="15" height="12" fill="#fff" stroke="#909090"/><path d="M2 5 H7 M2 10 H7" stroke="#e0c080"/><path d="M9 4 H14 M9 6 H14" stroke="#a0a0a0"/><path d="M2 8 H14" stroke="#80a0e0"/></svg><div style="left:99px;top:647px;width:59px;height:16px;background:#0a246a"></div><div class="t" style="left:101px;top:648px;font-size:11px;line-height:15px;color:#fff;">СчетЗаказ</div><svg style="position:absolute;left:219px;top:647px" width="16" height="16" viewBox="0 0 16 16" shape-rendering="crispEdges"><path d="M1.8 6 V4.5 A2.2 2.2 0 0 1 6.2 4.5 V6" fill="none" stroke="#607888" stroke-width="1.1" shape-rendering="auto"/><rect x="0" y="6" width="7" height="6" fill="#ff6a00"/><rect x="0" y="11" width="7" height="1" fill="#c04800"/><rect x="0" y="6" width="1" height="6" fill="#ffa040"/><rect x="3" y="8" width="1.5" height="2.5" fill="#801000"/><path d="M7 9 L10 7 L15 9 L11 11 Z" fill="#c8d400"/><path d="M7 9 L11 11 V16 L7 14 Z" fill="#f0f800"/><path d="M11 11 L15 9 V14 L11 16 Z" fill="#a0a020"/></svg><div style="left:29px;top:667px;width:9px;height:9px;background:#fff;border:1px solid #000"></div><div style="left:31px;top:671px;width:5px;height:1px;background:#000"></div><div style="left:33px;top:669px;width:1px;height:5px;background:#000"></div><div style="left:39px;top:671px;width:6px;height:1px;background:repeating-linear-gradient(to right,#000 0 1px,transparent 1px 2px)"></div><svg style="position:absolute;left:46px;top:664px" width="12" height="14" viewBox="0 0 12 14" shape-rendering="crispEdges"><rect x="0.5" y="0.5" width="11" height="13" fill="#fff" stroke="#a8a8a8"/><path d="M2 2.5 H10" stroke="#2060a0" stroke-width="1.3"/><path d="M2 5 H3 M5 5 H10 M7 7 H10 M7 9 H10" stroke="#a0a8e0"/><path d="M4 6 L6.5 8.5 L4 11 L1.5 8.5 Z" fill="#e0f4f8" stroke="#3050b0"/></svg><div class="t" style="left:63px;top:665px;font-size:11px;line-height:15px;color:#000;">СчетФактураВыданный</div><svg style="position:absolute;left:219px;top:664px" width="16" height="16" viewBox="0 0 16 16" shape-rendering="crispEdges"><path d="M1.8 6 V4.5 A2.2 2.2 0 0 1 6.2 4.5 V6" fill="none" stroke="#607888" stroke-width="1.1" shape-rendering="auto"/><rect x="0" y="6" width="7" height="6" fill="#ff6a00"/><rect x="0" y="11" width="7" height="1" fill="#c04800"/><rect x="0" y="6" width="1" height="6" fill="#ffa040"/><rect x="3" y="8" width="1.5" height="2.5" fill="#801000"/><path d="M7 9 L10 7 L15 9 L11 11 Z" fill="#c8d400"/><path d="M7 9 L11 11 V16 L7 14 Z" fill="#f0f800"/><path d="M11 11 L15 9 V14 L11 16 Z" fill="#a0a020"/></svg><div style="left:29px;top:684px;width:9px;height:9px;background:#fff;border:1px solid #000"></div><div style="left:31px;top:688px;width:5px;height:1px;background:#000"></div><div style="left:33px;top:686px;width:1px;height:5px;background:#000"></div><div style="left:39px;top:688px;width:6px;height:1px;background:repeating-linear-gradient(to right,#000 0 1px,transparent 1px 2px)"></div><svg style="position:absolute;left:46px;top:681px" width="12" height="14" viewBox="0 0 12 14" shape-rendering="crispEdges"><rect x="0.5" y="0.5" width="11" height="13" fill="#fff" stroke="#a8a8a8"/><path d="M2 2.5 H10" stroke="#2060a0" stroke-width="1.3"/><path d="M2 5 H3 M5 5 H10 M7 7 H10 M7 9 H10" stroke="#a0a8e0"/><path d="M4 6 L6.5 8.5 L4 11 L1.5 8.5 Z" fill="#e0f4f8" stroke="#3050b0"/></svg><div class="t" style="left:63px;top:682px;font-size:11px;line-height:15px;color:#000;">СчетФактураПолученный</div><svg style="position:absolute;left:219px;top:681px" width="16" height="16" viewBox="0 0 16 16" shape-rendering="crispEdges"><path d="M1.8 6 V4.5 A2.2 2.2 0 0 1 6.2 4.5 V6" fill="none" stroke="#607888" stroke-width="1.1" shape-rendering="auto"/><rect x="0" y="6" width="7" height="6" fill="#ff6a00"/><rect x="0" y="11" width="7" height="1" fill="#c04800"/><rect x="0" y="6" width="1" height="6" fill="#ffa040"/><rect x="3" y="8" width="1.5" height="2.5" fill="#801000"/><path d="M7 9 L10 7 L15 9 L11 11 Z" fill="#c8d400"/><path d="M7 9 L11 11 V16 L7 14 Z" fill="#f0f800"/><path d="M11 11 L15 9 V14 L11 16 Z" fill="#a0a020"/></svg><div style="left:29px;top:701px;width:9px;height:9px;background:#fff;border:1px solid #000"></div><div style="left:31px;top:705px;width:5px;height:1px;background:#000"></div><div style="left:33px;top:703px;width:1px;height:5px;background:#000"></div><div style="left:39px;top:705px;width:6px;height:1px;background:repeating-linear-gradient(to right,#000 0 1px,transparent 1px 2px)"></div><svg style="position:absolute;left:46px;top:698px" width="12" height="14" viewBox="0 0 12 14" shape-rendering="crispEdges"><rect x="0.5" y="0.5" width="11" height="13" fill="#fff" stroke="#a8a8a8"/><path d="M2 2.5 H10" stroke="#2060a0" stroke-width="1.3"/><path d="M2 5 H3 M5 5 H10 M7 7 H10 M7 9 H10" stroke="#a0a8e0"/><path d="M4 6 L6.5 8.5 L4 11 L1.5 8.5 Z" fill="#e0f4f8" stroke="#3050b0"/></svg><div class="t" style="left:63px;top:699px;font-size:11px;line-height:15px;color:#000;">ТребованиеНакладная</div><svg style="position:absolute;left:219px;top:698px" width="16" height="16" viewBox="0 0 16 16" shape-rendering="crispEdges"><path d="M1.8 6 V4.5 A2.2 2.2 0 0 1 6.2 4.5 V6" fill="none" stroke="#607888" stroke-width="1.1" shape-rendering="auto"/><rect x="0" y="6" width="7" height="6" fill="#ff6a00"/><rect x="0" y="11" width="7" height="1" fill="#c04800"/><rect x="0" y="6" width="1" height="6" fill="#ffa040"/><rect x="3" y="8" width="1.5" height="2.5" fill="#801000"/><path d="M7 9 L10 7 L15 9 L11 11 Z" fill="#c8d400"/><path d="M7 9 L11 11 V16 L7 14 Z" fill="#f0f800"/><path d="M11 11 L15 9 V14 L11 16 Z" fill="#a0a020"/></svg><div style="left:29px;top:718px;width:9px;height:9px;background:#fff;border:1px solid #000"></div><div style="left:31px;top:722px;width:5px;height:1px;background:#000"></div><div style="left:33px;top:720px;width:1px;height:5px;background:#000"></div><div style="left:39px;top:722px;width:6px;height:1px;background:repeating-linear-gradient(to right,#000 0 1px,transparent 1px 2px)"></div><svg style="position:absolute;left:46px;top:715px" width="12" height="14" viewBox="0 0 12 14" shape-rendering="crispEdges"><rect x="0.5" y="0.5" width="11" height="13" fill="#fff" stroke="#a8a8a8"/><path d="M2 2.5 H10" stroke="#2060a0" stroke-width="1.3"/><path d="M2 5 H3 M5 5 H10 M7 7 H10 M7 9 H10" stroke="#a0a8e0"/><path d="M4 6 L6.5 8.5 L4 11 L1.5 8.5 Z" fill="#e0f4f8" stroke="#3050b0"/></svg><div class="t" style="left:63px;top:716px;font-size:11px;line-height:15px;color:#000;">УвольнениеИзОрганизаций</div><svg style="position:absolute;left:219px;top:715px" width="16" height="16" viewBox="0 0 16 16" shape-rendering="crispEdges"><path d="M1.8 6 V4.5 A2.2 2.2 0 0 1 6.2 4.5 V6" fill="none" stroke="#607888" stroke-width="1.1" shape-rendering="auto"/><rect x="0" y="6" width="7" height="6" fill="#ff6a00"/><rect x="0" y="11" width="7" height="1" fill="#c04800"/><rect x="0" y="6" width="1" height="6" fill="#ffa040"/><rect x="3" y="8" width="1.5" height="2.5" fill="#801000"/><path d="M7 9 L10 7 L15 9 L11 11 Z" fill="#c8d400"/><path d="M7 9 L11 11 V16 L7 14 Z" fill="#f0f800"/><path d="M11 11 L15 9 V14 L11 16 Z" fill="#a0a020"/></svg><div style="left:29px;top:735px;width:9px;height:9px;background:#fff;border:1px solid #000"></div><div style="left:31px;top:739px;width:5px;height:1px;background:#000"></div><div style="left:33px;top:737px;width:1px;height:5px;background:#000"></div><div style="left:39px;top:739px;width:6px;height:1px;background:repeating-linear-gradient(to right,#000 0 1px,transparent 1px 2px)"></div><svg style="position:absolute;left:46px;top:732px" width="12" height="14" viewBox="0 0 12 14" shape-rendering="crispEdges"><rect x="0.5" y="0.5" width="11" height="13" fill="#fff" stroke="#a8a8a8"/><path d="M2 2.5 H10" stroke="#2060a0" stroke-width="1.3"/><path d="M2 5 H3 M5 5 H10 M7 7 H10 M7 9 H10" stroke="#a0a8e0"/><path d="M4 6 L6.5 8.5 L4 11 L1.5 8.5 Z" fill="#e0f4f8" stroke="#3050b0"/></svg><div class="t" style="left:63px;top:733px;font-size:11px;line-height:15px;color:#000;">УстановкаПорядкаЗакрыт...</div><svg style="position:absolute;left:219px;top:732px" width="16" height="16" viewBox="0 0 16 16" shape-rendering="crispEdges"><path d="M1.8 6 V4.5 A2.2 2.2 0 0 1 6.2 4.5 V6" fill="none" stroke="#607888" stroke-width="1.1" shape-rendering="auto"/><rect x="0" y="6" width="7" height="6" fill="#ff6a00"/><rect x="0" y="11" width="7" height="1" fill="#c04800"/><rect x="0" y="6" width="1" height="6" fill="#ffa040"/><rect x="3" y="8" width="1.5" height="2.5" fill="#801000"/><path d="M7 9 L10 7 L15 9 L11 11 Z" fill="#c8d400"/><path d="M7 9 L11 11 V16 L7 14 Z" fill="#f0f800"/><path d="M11 11 L15 9 V14 L11 16 Z" fill="#a0a020"/></svg><div style="left:29px;top:752px;width:9px;height:9px;background:#fff;border:1px solid #000"></div><div style="left:31px;top:756px;width:5px;height:1px;background:#000"></div><div style="left:33px;top:754px;width:1px;height:5px;background:#000"></div><div style="left:39px;top:756px;width:6px;height:1px;background:repeating-linear-gradient(to right,#000 0 1px,transparent 1px 2px)"></div><svg style="position:absolute;left:46px;top:749px" width="12" height="14" viewBox="0 0 12 14" shape-rendering="crispEdges"><rect x="0.5" y="0.5" width="11" height="13" fill="#fff" stroke="#a8a8a8"/><path d="M2 2.5 H10" stroke="#2060a0" stroke-width="1.3"/><path d="M2 5 H3 M5 5 H10 M7 7 H10 M7 9 H10" stroke="#a0a8e0"/><path d="M4 6 L6.5 8.5 L4 11 L1.5 8.5 Z" fill="#e0f4f8" stroke="#3050b0"/></svg><div class="t" style="left:63px;top:750px;font-size:11px;line-height:15px;color:#000;">УстановкаСоответствияСч...</div><svg style="position:absolute;left:219px;top:749px" width="16" height="16" viewBox="0 0 16 16" shape-rendering="crispEdges"><path d="M1.8 6 V4.5 A2.2 2.2 0 0 1 6.2 4.5 V6" fill="none" stroke="#607888" stroke-width="1.1" shape-rendering="auto"/><rect x="0" y="6" width="7" height="6" fill="#ff6a00"/><rect x="0" y="11" width="7" height="1" fill="#c04800"/><rect x="0" y="6" width="1" height="6" fill="#ffa040"/><rect x="3" y="8" width="1.5" height="2.5" fill="#801000"/><path d="M7 9 L10 7 L15 9 L11 11 Z" fill="#c8d400"/><path d="M7 9 L11 11 V16 L7 14 Z" fill="#f0f800"/><path d="M11 11 L15 9 V14 L11 16 Z" fill="#a0a020"/></svg><div style="left:29px;top:769px;width:9px;height:9px;background:#fff;border:1px solid #000"></div><div style="left:31px;top:773px;width:5px;height:1px;background:#000"></div><div style="left:33px;top:771px;width:1px;height:5px;background:#000"></div><div style="left:39px;top:773px;width:6px;height:1px;background:repeating-linear-gradient(to right,#000 0 1px,transparent 1px 2px)"></div><svg style="position:absolute;left:46px;top:766px" width="12" height="14" viewBox="0 0 12 14" shape-rendering="crispEdges"><rect x="0.5" y="0.5" width="11" height="13" fill="#fff" stroke="#a8a8a8"/><path d="M2 2.5 H10" stroke="#2060a0" stroke-width="1.3"/><path d="M2 5 H3 M5 5 H10 M7 7 H10 M7 9 H10" stroke="#a0a8e0"/><path d="M4 6 L6.5 8.5 L4 11 L1.5 8.5 Z" fill="#e0f4f8" stroke="#3050b0"/></svg><div class="t" style="left:63px;top:767px;font-size:11px;line-height:15px;color:#000;">УстановкаЦенНоменклатуры</div><svg style="position:absolute;left:219px;top:766px" width="16" height="16" viewBox="0 0 16 16" shape-rendering="crispEdges"><path d="M1.8 6 V4.5 A2.2 2.2 0 0 1 6.2 4.5 V6" fill="none" stroke="#607888" stroke-width="1.1" shape-rendering="auto"/><rect x="0" y="6" width="7" height="6" fill="#ff6a00"/><rect x="0" y="11" width="7" height="1" fill="#c04800"/><rect x="0" y="6" width="1" height="6" fill="#ffa040"/><rect x="3" y="8" width="1.5" height="2.5" fill="#801000"/><path d="M7 9 L10 7 L15 9 L11 11 Z" fill="#c8d400"/><path d="M7 9 L11 11 V16 L7 14 Z" fill="#f0f800"/><path d="M11 11 L15 9 V14 L11 16 Z" fill="#a0a020"/></svg><div style="left:29px;top:786px;width:9px;height:9px;background:#fff;border:1px solid #000"></div><div style="left:31px;top:790px;width:5px;height:1px;background:#000"></div><div style="left:33px;top:788px;width:1px;height:5px;background:#000"></div><div style="left:39px;top:790px;width:6px;height:1px;background:repeating-linear-gradient(to right,#000 0 1px,transparent 1px 2px)"></div><svg style="position:absolute;left:46px;top:783px" width="12" height="14" viewBox="0 0 12 14" shape-rendering="crispEdges"><rect x="0.5" y="0.5" width="11" height="13" fill="#fff" stroke="#a8a8a8"/><path d="M2 2.5 H10" stroke="#2060a0" stroke-width="1.3"/><path d="M2 5 H3 M5 5 H10 M7 7 H10 M7 9 H10" stroke="#a0a8e0"/><path d="M4 6 L6.5 8.5 L4 11 L1.5 8.5 Z" fill="#e0f4f8" stroke="#3050b0"/></svg><div class="t" style="left:63px;top:784px;font-size:11px;line-height:15px;color:#000;">УчетПоложенийПереходног...</div><svg style="position:absolute;left:219px;top:783px" width="16" height="16" viewBox="0 0 16 16" shape-rendering="crispEdges"><path d="M1.8 6 V4.5 A2.2 2.2 0 0 1 6.2 4.5 V6" fill="none" stroke="#607888" stroke-width="1.1" shape-rendering="auto"/><rect x="0" y="6" width="7" height="6" fill="#ff6a00"/><rect x="0" y="11" width="7" height="1" fill="#c04800"/><rect x="0" y="6" width="1" height="6" fill="#ffa040"/><rect x="3" y="8" width="1.5" height="2.5" fill="#801000"/><path d="M7 9 L10 7 L15 9 L11 11 Z" fill="#c8d400"/><path d="M7 9 L11 11 V16 L7 14 Z" fill="#f0f800"/><path d="M11 11 L15 9 V14 L11 16 Z" fill="#a0a020"/></svg><div style="left:29px;top:803px;width:9px;height:9px;background:#fff;border:1px solid #000"></div><div style="left:31px;top:807px;width:5px;height:1px;background:#000"></div><div style="left:33px;top:805px;width:1px;height:5px;background:#000"></div><div style="left:39px;top:807px;width:6px;height:1px;background:repeating-linear-gradient(to right,#000 0 1px,transparent 1px 2px)"></div><svg style="position:absolute;left:46px;top:800px" width="12" height="14" viewBox="0 0 12 14" shape-rendering="crispEdges"><rect x="0.5" y="0.5" width="11" height="13" fill="#fff" stroke="#a8a8a8"/><path d="M2 2.5 H10" stroke="#2060a0" stroke-width="1.3"/><path d="M2 5 H3 M5 5 H10 M7 7 H10 M7 9 H10" stroke="#a0a8e0"/><path d="M4 6 L6.5 8.5 L4 11 L1.5 8.5 Z" fill="#e0f4f8" stroke="#3050b0"/></svg><div class="t" style="left:63px;top:801px;font-size:11px;line-height:15px;color:#000;">ФормированиеЗаписейКни...</div><svg style="position:absolute;left:219px;top:800px" width="16" height="16" viewBox="0 0 16 16" shape-rendering="crispEdges"><path d="M1.8 6 V4.5 A2.2 2.2 0 0 1 6.2 4.5 V6" fill="none" stroke="#607888" stroke-width="1.1" shape-rendering="auto"/><rect x="0" y="6" width="7" height="6" fill="#ff6a00"/><rect x="0" y="11" width="7" height="1" fill="#c04800"/><rect x="0" y="6" width="1" height="6" fill="#ffa040"/><rect x="3" y="8" width="1.5" height="2.5" fill="#801000"/><path d="M7 9 L10 7 L15 9 L11 11 Z" fill="#c8d400"/><path d="M7 9 L11 11 V16 L7 14 Z" fill="#f0f800"/><path d="M11 11 L15 9 V14 L11 16 Z" fill="#a0a020"/></svg><div style="left:29px;top:820px;width:9px;height:9px;background:#fff;border:1px solid #000"></div><div style="left:31px;top:824px;width:5px;height:1px;background:#000"></div><div style="left:33px;top:822px;width:1px;height:5px;background:#000"></div><div style="left:39px;top:824px;width:6px;height:1px;background:repeating-linear-gradient(to right,#000 0 1px,transparent 1px 2px)"></div><svg style="position:absolute;left:46px;top:817px" width="12" height="14" viewBox="0 0 12 14" shape-rendering="crispEdges"><rect x="0.5" y="0.5" width="11" height="13" fill="#fff" stroke="#a8a8a8"/><path d="M2 2.5 H10" stroke="#2060a0" stroke-width="1.3"/><path d="M2 5 H3 M5 5 H10 M7 7 H10 M7 9 H10" stroke="#a0a8e0"/><path d="M4 6 L6.5 8.5 L4 11 L1.5 8.5 Z" fill="#e0f4f8" stroke="#3050b0"/></svg><div class="t" style="left:63px;top:818px;font-size:11px;line-height:15px;color:#000;">ФормированиеЗаписейКни...</div><svg style="position:absolute;left:219px;top:817px" width="16" height="16" viewBox="0 0 16 16" shape-rendering="crispEdges"><path d="M1.8 6 V4.5 A2.2 2.2 0 0 1 6.2 4.5 V6" fill="none" stroke="#607888" stroke-width="1.1" shape-rendering="auto"/><rect x="0" y="6" width="7" height="6" fill="#ff6a00"/><rect x="0" y="11" width="7" height="1" fill="#c04800"/><rect x="0" y="6" width="1" height="6" fill="#ffa040"/><rect x="3" y="8" width="1.5" height="2.5" fill="#801000"/><path d="M7 9 L10 7 L15 9 L11 11 Z" fill="#c8d400"/><path d="M7 9 L11 11 V16 L7 14 Z" fill="#f0f800"/><path d="M11 11 L15 9 V14 L11 16 Z" fill="#a0a020"/></svg><div style="left:29px;top:837px;width:9px;height:9px;background:#fff;border:1px solid #000"></div><div style="left:31px;top:841px;width:5px;height:1px;background:#000"></div><div style="left:33px;top:839px;width:1px;height:5px;background:#000"></div><div style="left:39px;top:841px;width:6px;height:1px;background:repeating-linear-gradient(to right,#000 0 1px,transparent 1px 2px)"></div><svg style="position:absolute;left:46px;top:834px" width="12" height="14" viewBox="0 0 12 14" shape-rendering="crispEdges"><rect x="0.5" y="0.5" width="11" height="13" fill="#fff" stroke="#a8a8a8"/><path d="M2 2.5 H10" stroke="#2060a0" stroke-width="1.3"/><path d="M2 5 H3 M5 5 H10 M7 7 H10 M7 9 H10" stroke="#a0a8e0"/><path d="M4 6 L6.5 8.5 L4 11 L1.5 8.5 Z" fill="#e0f4f8" stroke="#3050b0"/></svg><div class="t" style="left:63px;top:835px;font-size:11px;line-height:15px;color:#000;">ТранспортноеСообщение</div><svg style="position:absolute;left:219px;top:834px" width="16" height="16" viewBox="0 0 16 16" shape-rendering="crispEdges"><path d="M1.8 6 V4.5 A2.2 2.2 0 0 1 6.2 4.5 V6" fill="none" stroke="#607888" stroke-width="1.1" shape-rendering="auto"/><rect x="0" y="6" width="7" height="6" fill="#ff6a00"/><rect x="0" y="11" width="7" height="1" fill="#c04800"/><rect x="0" y="6" width="1" height="6" fill="#ffa040"/><rect x="3" y="8" width="1.5" height="2.5" fill="#801000"/><path d="M7 9 L10 7 L15 9 L11 11 Z" fill="#c8d400"/><path d="M7 9 L11 11 V16 L7 14 Z" fill="#f0f800"/><path d="M11 11 L15 9 V14 L11 16 Z" fill="#a0a020"/></svg><div style="left:29px;top:854px;width:9px;height:9px;background:#fff;border:1px solid #000"></div><div style="left:31px;top:858px;width:5px;height:1px;background:#000"></div><div style="left:33px;top:856px;width:1px;height:5px;background:#000"></div><div style="left:39px;top:858px;width:6px;height:1px;background:repeating-linear-gradient(to right,#000 0 1px,transparent 1px 2px)"></div><svg style="position:absolute;left:46px;top:851px" width="12" height="14" viewBox="0 0 12 14" shape-rendering="crispEdges"><rect x="0.5" y="0.5" width="11" height="13" fill="#fff" stroke="#a8a8a8"/><path d="M2 2.5 H10" stroke="#2060a0" stroke-width="1.3"/><path d="M2 5 H3 M5 5 H10 M7 7 H10 M7 9 H10" stroke="#a0a8e0"/><path d="M4 6 L6.5 8.5 L4 11 L1.5 8.5 Z" fill="#e0f4f8" stroke="#3050b0"/></svg><div class="t" style="left:63px;top:852px;font-size:11px;line-height:15px;color:#000;">НеформализованныйДоку...</div><svg style="position:absolute;left:219px;top:851px" width="16" height="16" viewBox="0 0 16 16" shape-rendering="crispEdges"><path d="M1.8 6 V4.5 A2.2 2.2 0 0 1 6.2 4.5 V6" fill="none" stroke="#607888" stroke-width="1.1" shape-rendering="auto"/><rect x="0" y="6" width="7" height="6" fill="#ff6a00"/><rect x="0" y="11" width="7" height="1" fill="#c04800"/><rect x="0" y="6" width="1" height="6" fill="#ffa040"/><rect x="3" y="8" width="1.5" height="2.5" fill="#801000"/><path d="M7 9 L10 7 L15 9 L11 11 Z" fill="#c8d400"/><path d="M7 9 L11 11 V16 L7 14 Z" fill="#f0f800"/><path d="M11 11 L15 9 V14 L11 16 Z" fill="#a0a020"/></svg><div style="left:29px;top:871px;width:9px;height:9px;background:#fff;border:1px solid #000"></div><div style="left:31px;top:875px;width:5px;height:1px;background:#000"></div><div style="left:33px;top:873px;width:1px;height:5px;background:#000"></div><div style="left:39px;top:875px;width:6px;height:1px;background:repeating-linear-gradient(to right,#000 0 1px,transparent 1px 2px)"></div><svg style="position:absolute;left:46px;top:868px" width="12" height="14" viewBox="0 0 12 14" shape-rendering="crispEdges"><rect x="0.5" y="0.5" width="11" height="13" fill="#fff" stroke="#a8a8a8"/><path d="M2 2.5 H10" stroke="#2060a0" stroke-width="1.3"/><path d="M2 5 H3 M5 5 H10 M7 7 H10 M7 9 H10" stroke="#a0a8e0"/><path d="M4 6 L6.5 8.5 L4 11 L1.5 8.5 Z" fill="#e0f4f8" stroke="#3050b0"/></svg><div class="t" style="left:63px;top:869px;font-size:11px;line-height:15px;color:#000;">НеформализованныйДоку...</div><svg style="position:absolute;left:219px;top:868px" width="16" height="16" viewBox="0 0 16 16" shape-rendering="crispEdges"><path d="M1.8 6 V4.5 A2.2 2.2 0 0 1 6.2 4.5 V6" fill="none" stroke="#607888" stroke-width="1.1" shape-rendering="auto"/><rect x="0" y="6" width="7" height="6" fill="#ff6a00"/><rect x="0" y="11" width="7" height="1" fill="#c04800"/><rect x="0" y="6" width="1" height="6" fill="#ffa040"/><rect x="3" y="8" width="1.5" height="2.5" fill="#801000"/><path d="M7 9 L10 7 L15 9 L11 11 Z" fill="#c8d400"/><path d="M7 9 L11 11 V16 L7 14 Z" fill="#f0f800"/><path d="M11 11 L15 9 V14 L11 16 Z" fill="#a0a020"/></svg><div style="left:29px;top:888px;width:9px;height:9px;background:#fff;border:1px solid #000"></div><div style="left:31px;top:892px;width:5px;height:1px;background:#000"></div><div style="left:33px;top:890px;width:1px;height:5px;background:#000"></div><div style="left:39px;top:892px;width:6px;height:1px;background:repeating-linear-gradient(to right,#000 0 1px,transparent 1px 2px)"></div><svg style="position:absolute;left:46px;top:885px" width="12" height="14" viewBox="0 0 12 14" shape-rendering="crispEdges"><rect x="0.5" y="0.5" width="11" height="13" fill="#fff" stroke="#a8a8a8"/><path d="M2 2.5 H10" stroke="#2060a0" stroke-width="1.3"/><path d="M2 5 H3 M5 5 H10 M7 7 H10 M7 9 H10" stroke="#a0a8e0"/><path d="M4 6 L6.5 8.5 L4 11 L1.5 8.5 Z" fill="#e0f4f8" stroke="#3050b0"/></svg><div class="t" style="left:63px;top:886px;font-size:11px;line-height:15px;color:#000;">ЗапросНаИнформационное...</div><svg style="position:absolute;left:219px;top:885px" width="16" height="16" viewBox="0 0 16 16" shape-rendering="crispEdges"><path d="M1.8 6 V4.5 A2.2 2.2 0 0 1 6.2 4.5 V6" fill="none" stroke="#607888" stroke-width="1.1" shape-rendering="auto"/><rect x="0" y="6" width="7" height="6" fill="#ff6a00"/><rect x="0" y="11" width="7" height="1" fill="#c04800"/><rect x="0" y="6" width="1" height="6" fill="#ffa040"/><rect x="3" y="8" width="1.5" height="2.5" fill="#801000"/><path d="M7 9 L10 7 L15 9 L11 11 Z" fill="#c8d400"/><path d="M7 9 L11 11 V16 L7 14 Z" fill="#f0f800"/><path d="M11 11 L15 9 V14 L11 16 Z" fill="#a0a020"/></svg><div style="left:52px;top:575px;width:1px;height:59px;background:repeating-linear-gradient(to bottom,#000 0 1px,transparent 1px 2px)"></div><div style="left:10px;top:906px;width:9px;height:9px;background:#fff;border:1px solid #000"></div><div style="left:12px;top:910px;width:5px;height:1px;background:#000"></div><div style="left:14px;top:908px;width:1px;height:5px;background:#000"></div><div style="left:20px;top:910px;width:4px;height:1px;background:repeating-linear-gradient(to right,#000 0 1px,transparent 1px 2px)"></div><svg style="position:absolute;left:25px;top:902px" width="16" height="16" viewBox="0 0 16 16" shape-rendering="crispEdges"><rect x="1" y="3" width="4" height="13" fill="#30a030"/><rect x="5" y="2" width="4" height="14" fill="#2090c0"/><rect x="9" y="3" width="5" height="13" fill="#e04030"/><path d="M2 6 V12 M6 5 V11 M11 6 V10" stroke="#fff"/></svg><div class="t" style="left:44px;top:903px;font-size:11px;line-height:15px;color:#000;">Журналы документов</div><div style="left:10px;top:923px;width:9px;height:9px;background:#fff;border:1px solid #000"></div><div style="left:12px;top:927px;width:5px;height:1px;background:#000"></div><div style="left:14px;top:925px;width:1px;height:5px;background:#000"></div><div style="left:20px;top:927px;width:4px;height:1px;background:repeating-linear-gradient(to right,#000 0 1px,transparent 1px 2px)"></div><svg style="position:absolute;left:25px;top:919px" width="16" height="16" viewBox="0 0 16 16" shape-rendering="crispEdges"><path d="M5 1 Q3 1 3 4 V7 L1 8 L3 9 V13 Q3 15 5 15 M11 1 Q13 1 13 4 V7 L15 8 L13 9 V13 Q13 15 11 15" fill="none" stroke="#2050a0" stroke-width="1.3"/></svg><div class="t" style="left:44px;top:920px;font-size:11px;line-height:15px;color:#000;">Перечисления</div><div style="left:255px;top:95px;width:1424px;height:833px;background:#808080;border-top:1px solid #404040;border-left:1px solid #404040;border-right:1px solid #fff;border-bottom:1px solid #fff"></div><div style="left:256px;top:96px;width:1182px;height:664px;background:#5a7cbc;border:1px solid #7896d0;border-right-color:#3a5a98;border-bottom-color:#3a5a98"></div><svg style="position:absolute;left:261px;top:100px" width="17" height="16" viewBox="0 0 17 16" shape-rendering="crispEdges"><path d="M3.5 0.5 H9.5 L12.5 3.5 V10 H3.5Z" fill="#fff" stroke="#a0a0a0"/><text x="0" y="15" font-size="11" font-weight="bold" fill="#000080" font-family="Liberation Serif">A</text><path d="M9 9 H16 M9 11 H16 M9 13 H16 M9 15 H16" stroke="#e0e0e0"/></svg><div class="t" style="left:282px;top:101px;font-size:12px;line-height:16px;color:#fff;font-weight:bold;">Документ СчетНаОплатуПокупателю: СчетЗаказ [Только для чтения]</div><div style="left:1380px;top:112px;width:9px;height:2px;background:#fff"></div><div style="left:1398px;top:103px;width:12px;height:11px;border:1px solid #fff;border-top-width:2px"></div><svg style="position:absolute;left:1419px;top:103px" width="11" height="11" viewBox="0 0 11 11" shape-rendering="crispEdges"><path d="M1 1 L10 10 M10 1 L1 10" stroke="#fff" stroke-width="2" fill="none" shape-rendering="auto"/></svg><div style="left:260px;top:118px;width:1174px;height:638px;background:#fffbf1"></div><div style="left:359px;top:169px;width:1062px;height:573px;background:#fff"></div><div style="left:366px;top:169px;width:1px;height:15px;background:#c0c0c0"></div><div style="left:387px;top:169px;width:1px;height:15px;background:#c0c0c0"></div><div style="left:408px;top:169px;width:1px;height:15px;background:#c0c0c0"></div><div style="left:429px;top:169px;width:1px;height:15px;background:#c0c0c0"></div><div style="left:450px;top:169px;width:1px;height:15px;background:#c0c0c0"></div><div style="left:471px;top:169px;width:1px;height:15px;background:#c0c0c0"></div><div style="left:492px;top:169px;width:1px;height:15px;background:#c0c0c0"></div><div style="left:513px;top:169px;width:1px;height:15px;background:#c0c0c0"></div><div style="left:534px;top:169px;width:1px;height:15px;background:#c0c0c0"></div><div style="left:555px;top:169px;width:1px;height:15px;background:#c0c0c0"></div><div style="left:576px;top:169px;width:1px;height:15px;background:#c0c0c0"></div><div style="left:597px;top:169px;width:1px;height:15px;background:#c0c0c0"></div><div style="left:618px;top:169px;width:1px;height:15px;background:#c0c0c0"></div><div style="left:639px;top:169px;width:1px;height:15px;background:#c0c0c0"></div><div style="left:660px;top:169px;width:1px;height:15px;background:#c0c0c0"></div><div style="left:681px;top:169px;width:1px;height:15px;background:#c0c0c0"></div><div style="left:702px;top:169px;width:1px;height:15px;background:#c0c0c0"></div><div style="left:723px;top:169px;width:1px;height:15px;background:#c0c0c0"></div><div style="left:744px;top:169px;width:1px;height:15px;background:#c0c0c0"></div><div style="left:765px;top:169px;width:1px;height:15px;background:#c0c0c0"></div><div style="left:786px;top:169px;width:1px;height:15px;background:#c0c0c0"></div><div style="left:807px;top:169px;width:1px;height:15px;background:#c0c0c0"></div><div style="left:828px;top:169px;width:1px;height:15px;background:#c0c0c0"></div><div style="left:849px;top:169px;width:1px;height:15px;background:#c0c0c0"></div><div style="left:870px;top:169px;width:1px;height:15px;background:#c0c0c0"></div><div style="left:891px;top:169px;width:1px;height:15px;background:#c0c0c0"></div><div style="left:912px;top:169px;width:1px;height:15px;background:#c0c0c0"></div><div style="left:933px;top:169px;width:1px;height:15px;background:#c0c0c0"></div><div style="left:954px;top:169px;width:1px;height:15px;background:#c0c0c0"></div><div style="left:975px;top:169px;width:1px;height:15px;background:#c0c0c0"></div><div style="left:996px;top:169px;width:1px;height:15px;background:#c0c0c0"></div><div style="left:1017px;top:169px;width:1px;height:15px;background:#c0c0c0"></div><div style="left:1036px;top:169px;width:1px;height:15px;background:#c0c0c0"></div><div style="left:1043px;top:169px;width:1px;height:15px;background:#c0c0c0"></div><div style="left:1106px;top:169px;width:1px;height:15px;background:#c0c0c0"></div><div style="left:1169px;top:169px;width:1px;height:15px;background:#c0c0c0"></div><div style="left:1232px;top:169px;width:1px;height:15px;background:#c0c0c0"></div><div style="left:1295px;top:169px;width:1px;height:15px;background:#c0c0c0"></div><div style="left:1358px;top:169px;width:1px;height:15px;background:#c0c0c0"></div><div style="left:366px;top:184px;width:1px;height:15px;background:#c0c0c0"></div><div style="left:1043px;top:184px;width:1px;height:15px;background:#c0c0c0"></div><div style="left:1106px;top:184px;width:1px;height:15px;background:#c0c0c0"></div><div style="left:1169px;top:184px;width:1px;height:15px;background:#c0c0c0"></div><div style="left:1232px;top:184px;width:1px;height:15px;background:#c0c0c0"></div><div style="left:1295px;top:184px;width:1px;height:15px;background:#c0c0c0"></div><div style="left:1358px;top:184px;width:1px;height:15px;background:#c0c0c0"></div><div style="left:366px;top:199px;width:1px;height:15px;background:#c0c0c0"></div><div style="left:1043px;top:199px;width:1px;height:15px;background:#c0c0c0"></div><div style="left:1106px;top:199px;width:1px;height:15px;background:#c0c0c0"></div><div style="left:1169px;top:199px;width:1px;height:15px;background:#c0c0c0"></div><div style="left:1232px;top:199px;width:1px;height:15px;background:#c0c0c0"></div><div style="left:1295px;top:199px;width:1px;height:15px;background:#c0c0c0"></div><div style="left:1358px;top:199px;width:1px;height:15px;background:#c0c0c0"></div><div style="left:366px;top:214px;width:1px;height:15px;background:#c0c0c0"></div><div style="left:1043px;top:214px;width:1px;height:15px;background:#c0c0c0"></div><div style="left:1106px;top:214px;width:1px;height:15px;background:#c0c0c0"></div><div style="left:1169px;top:214px;width:1px;height:15px;background:#c0c0c0"></div><div style="left:1232px;top:214px;width:1px;height:15px;background:#c0c0c0"></div><div style="left:1295px;top:214px;width:1px;height:15px;background:#c0c0c0"></div><div style="left:1358px;top:214px;width:1px;height:15px;background:#c0c0c0"></div><div style="left:366px;top:229px;width:1px;height:15px;background:#c0c0c0"></div><div style="left:387px;top:229px;width:1px;height:15px;background:#c0c0c0"></div><div style="left:408px;top:229px;width:1px;height:15px;background:#c0c0c0"></div><div style="left:429px;top:229px;width:1px;height:15px;background:#c0c0c0"></div><div style="left:450px;top:229px;width:1px;height:15px;background:#c0c0c0"></div><div style="left:471px;top:229px;width:1px;height:15px;background:#c0c0c0"></div><div style="left:492px;top:229px;width:1px;height:15px;background:#c0c0c0"></div><div style="left:513px;top:229px;width:1px;height:15px;background:#c0c0c0"></div><div style="left:534px;top:229px;width:1px;height:15px;background:#c0c0c0"></div><div style="left:555px;top:229px;width:1px;height:15px;background:#c0c0c0"></div><div style="left:576px;top:229px;width:1px;height:15px;background:#c0c0c0"></div><div style="left:597px;top:229px;width:1px;height:15px;background:#c0c0c0"></div><div style="left:618px;top:229px;width:1px;height:15px;background:#c0c0c0"></div><div style="left:639px;top:229px;width:1px;height:15px;background:#c0c0c0"></div><div style="left:660px;top:229px;width:1px;height:15px;background:#c0c0c0"></div><div style="left:681px;top:229px;width:1px;height:15px;background:#c0c0c0"></div><div style="left:702px;top:229px;width:1px;height:15px;background:#c0c0c0"></div><div style="left:723px;top:229px;width:1px;height:15px;background:#c0c0c0"></div><div style="left:744px;top:229px;width:1px;height:15px;background:#c0c0c0"></div><div style="left:765px;top:229px;width:1px;height:15px;background:#c0c0c0"></div><div style="left:786px;top:229px;width:1px;height:15px;background:#c0c0c0"></div><div style="left:807px;top:229px;width:1px;height:15px;background:#c0c0c0"></div><div style="left:828px;top:229px;width:1px;height:15px;background:#c0c0c0"></div><div style="left:849px;top:229px;width:1px;height:15px;background:#c0c0c0"></div><div style="left:870px;top:229px;width:1px;height:15px;background:#c0c0c0"></div><div style="left:891px;top:229px;width:1px;height:15px;background:#c0c0c0"></div><div style="left:912px;top:229px;width:1px;height:15px;background:#c0c0c0"></div><div style="left:933px;top:229px;width:1px;height:15px;background:#c0c0c0"></div><div style="left:954px;top:229px;width:1px;height:15px;background:#c0c0c0"></div><div style="left:975px;top:229px;width:1px;height:15px;background:#c0c0c0"></div><div style="left:996px;top:229px;width:1px;height:15px;background:#c0c0c0"></div><div style="left:1017px;top:229px;width:1px;height:15px;background:#c0c0c0"></div><div style="left:1036px;top:229px;width:1px;height:15px;background:#c0c0c0"></div><div style="left:1043px;top:229px;width:1px;height:15px;background:#c0c0c0"></div><div style="left:1106px;top:229px;width:1px;height:15px;background:#c0c0c0"></div><div style="left:1169px;top:229px;width:1px;height:15px;background:#c0c0c0"></div><div style="left:1232px;top:229px;width:1px;height:15px;background:#c0c0c0"></div><div style="left:1295px;top:229px;width:1px;height:15px;background:#c0c0c0"></div><div style="left:1358px;top:229px;width:1px;height:15px;background:#c0c0c0"></div><div style="left:366px;top:244px;width:1px;height:17px;background:#c0c0c0"></div><div style="left:1043px;top:244px;width:1px;height:17px;background:#c0c0c0"></div><div style="left:1106px;top:244px;width:1px;height:17px;background:#c0c0c0"></div><div style="left:1169px;top:244px;width:1px;height:17px;background:#c0c0c0"></div><div style="left:1232px;top:244px;width:1px;height:17px;background:#c0c0c0"></div><div style="left:1295px;top:244px;width:1px;height:17px;background:#c0c0c0"></div><div style="left:1358px;top:244px;width:1px;height:17px;background:#c0c0c0"></div><div style="left:366px;top:261px;width:1px;height:15px;background:#c0c0c0"></div><div style="left:1043px;top:261px;width:1px;height:15px;background:#c0c0c0"></div><div style="left:1106px;top:261px;width:1px;height:15px;background:#c0c0c0"></div><div style="left:1169px;top:261px;width:1px;height:15px;background:#c0c0c0"></div><div style="left:1232px;top:261px;width:1px;height:15px;background:#c0c0c0"></div><div style="left:1295px;top:261px;width:1px;height:15px;background:#c0c0c0"></div><div style="left:1358px;top:261px;width:1px;height:15px;background:#c0c0c0"></div><div style="left:366px;top:276px;width:1px;height:15px;background:#c0c0c0"></div><div style="left:1043px;top:276px;width:1px;height:15px;background:#c0c0c0"></div><div style="left:1106px;top:276px;width:1px;height:15px;background:#c0c0c0"></div><div style="left:1169px;top:276px;width:1px;height:15px;background:#c0c0c0"></div><div style="left:1232px;top:276px;width:1px;height:15px;background:#c0c0c0"></div><div style="left:1295px;top:276px;width:1px;height:15px;background:#c0c0c0"></div><div style="left:1358px;top:276px;width:1px;height:15px;background:#c0c0c0"></div><div style="left:366px;top:291px;width:1px;height:17px;background:#c0c0c0"></div><div style="left:1043px;top:291px;width:1px;height:17px;background:#c0c0c0"></div><div style="left:1106px;top:291px;width:1px;height:17px;background:#c0c0c0"></div><div style="left:1169px;top:291px;width:1px;height:17px;background:#c0c0c0"></div><div style="left:1232px;top:291px;width:1px;height:17px;background:#c0c0c0"></div><div style="left:1295px;top:291px;width:1px;height:17px;background:#c0c0c0"></div><div style="left:1358px;top:291px;width:1px;height:17px;background:#c0c0c0"></div><div style="left:366px;top:308px;width:1px;height:15px;background:#c0c0c0"></div><div style="left:1043px;top:308px;width:1px;height:15px;background:#c0c0c0"></div><div style="left:1106px;top:308px;width:1px;height:15px;background:#c0c0c0"></div><div style="left:1169px;top:308px;width:1px;height:15px;background:#c0c0c0"></div><div style="left:1232px;top:308px;width:1px;height:15px;background:#c0c0c0"></div><div style="left:1295px;top:308px;width:1px;height:15px;background:#c0c0c0"></div><div style="left:1358px;top:308px;width:1px;height:15px;background:#c0c0c0"></div><div style="left:366px;top:323px;width:1px;height:15px;background:#c0c0c0"></div><div style="left:1043px;top:323px;width:1px;height:15px;background:#c0c0c0"></div><div style="left:1106px;top:323px;width:1px;height:15px;background:#c0c0c0"></div><div style="left:1169px;top:323px;width:1px;height:15px;background:#c0c0c0"></div><div style="left:1232px;top:323px;width:1px;height:15px;background:#c0c0c0"></div><div style="left:1295px;top:323px;width:1px;height:15px;background:#c0c0c0"></div><div style="left:1358px;top:323px;width:1px;height:15px;background:#c0c0c0"></div><div style="left:366px;top:338px;width:1px;height:15px;background:#c0c0c0"></div><div style="left:1043px;top:338px;width:1px;height:15px;background:#c0c0c0"></div><div style="left:1106px;top:338px;width:1px;height:15px;background:#c0c0c0"></div><div style="left:1169px;top:338px;width:1px;height:15px;background:#c0c0c0"></div><div style="left:1232px;top:338px;width:1px;height:15px;background:#c0c0c0"></div><div style="left:1295px;top:338px;width:1px;height:15px;background:#c0c0c0"></div><div style="left:1358px;top:338px;width:1px;height:15px;background:#c0c0c0"></div><div style="left:366px;top:353px;width:1px;height:15px;background:#c0c0c0"></div><div style="left:387px;top:353px;width:1px;height:15px;background:#c0c0c0"></div><div style="left:408px;top:353px;width:1px;height:15px;background:#c0c0c0"></div><div style="left:429px;top:353px;width:1px;height:15px;background:#c0c0c0"></div><div style="left:450px;top:353px;width:1px;height:15px;background:#c0c0c0"></div><div style="left:471px;top:353px;width:1px;height:15px;background:#c0c0c0"></div><div style="left:492px;top:353px;width:1px;height:15px;background:#c0c0c0"></div><div style="left:513px;top:353px;width:1px;height:15px;background:#c0c0c0"></div><div style="left:534px;top:353px;width:1px;height:15px;background:#c0c0c0"></div><div style="left:555px;top:353px;width:1px;height:15px;background:#c0c0c0"></div><div style="left:576px;top:353px;width:1px;height:15px;background:#c0c0c0"></div><div style="left:597px;top:353px;width:1px;height:15px;background:#c0c0c0"></div><div style="left:618px;top:353px;width:1px;height:15px;background:#c0c0c0"></div><div style="left:639px;top:353px;width:1px;height:15px;background:#c0c0c0"></div><div style="left:660px;top:353px;width:1px;height:15px;background:#c0c0c0"></div><div style="left:681px;top:353px;width:1px;height:15px;background:#c0c0c0"></div><div style="left:702px;top:353px;width:1px;height:15px;background:#c0c0c0"></div><div style="left:723px;top:353px;width:1px;height:15px;background:#c0c0c0"></div><div style="left:744px;top:353px;width:1px;height:15px;background:#c0c0c0"></div><div style="left:765px;top:353px;width:1px;height:15px;background:#c0c0c0"></div><div style="left:786px;top:353px;width:1px;height:15px;background:#c0c0c0"></div><div style="left:807px;top:353px;width:1px;height:15px;background:#c0c0c0"></div><div style="left:828px;top:353px;width:1px;height:15px;background:#c0c0c0"></div><div style="left:849px;top:353px;width:1px;height:15px;background:#c0c0c0"></div><div style="left:870px;top:353px;width:1px;height:15px;background:#c0c0c0"></div><div style="left:891px;top:353px;width:1px;height:15px;background:#c0c0c0"></div><div style="left:912px;top:353px;width:1px;height:15px;background:#c0c0c0"></div><div style="left:933px;top:353px;width:1px;height:15px;background:#c0c0c0"></div><div style="left:954px;top:353px;width:1px;height:15px;background:#c0c0c0"></div><div style="left:975px;top:353px;width:1px;height:15px;background:#c0c0c0"></div><div style="left:996px;top:353px;width:1px;height:15px;background:#c0c0c0"></div><div style="left:1017px;top:353px;width:1px;height:15px;background:#c0c0c0"></div><div style="left:1036px;top:353px;width:1px;height:15px;background:#c0c0c0"></div><div style="left:1043px;top:353px;width:1px;height:15px;background:#c0c0c0"></div><div style="left:1106px;top:353px;width:1px;height:15px;background:#c0c0c0"></div><div style="left:1169px;top:353px;width:1px;height:15px;background:#c0c0c0"></div><div style="left:1232px;top:353px;width:1px;height:15px;background:#c0c0c0"></div><div style="left:1295px;top:353px;width:1px;height:15px;background:#c0c0c0"></div><div style="left:1358px;top:353px;width:1px;height:15px;background:#c0c0c0"></div><div style="left:366px;top:368px;width:1px;height:15px;background:#c0c0c0"></div><div style="left:387px;top:368px;width:1px;height:15px;background:#c0c0c0"></div><div style="left:408px;top:368px;width:1px;height:15px;background:#c0c0c0"></div><div style="left:429px;top:368px;width:1px;height:15px;background:#c0c0c0"></div><div style="left:450px;top:368px;width:1px;height:15px;background:#c0c0c0"></div><div style="left:471px;top:368px;width:1px;height:15px;background:#c0c0c0"></div><div style="left:492px;top:368px;width:1px;height:15px;background:#c0c0c0"></div><div style="left:513px;top:368px;width:1px;height:15px;background:#c0c0c0"></div><div style="left:534px;top:368px;width:1px;height:15px;background:#c0c0c0"></div><div style="left:555px;top:368px;width:1px;height:15px;background:#c0c0c0"></div><div style="left:576px;top:368px;width:1px;height:15px;background:#c0c0c0"></div><div style="left:597px;top:368px;width:1px;height:15px;background:#c0c0c0"></div><div style="left:618px;top:368px;width:1px;height:15px;background:#c0c0c0"></div><div style="left:639px;top:368px;width:1px;height:15px;background:#c0c0c0"></div><div style="left:660px;top:368px;width:1px;height:15px;background:#c0c0c0"></div><div style="left:681px;top:368px;width:1px;height:15px;background:#c0c0c0"></div><div style="left:702px;top:368px;width:1px;height:15px;background:#c0c0c0"></div><div style="left:723px;top:368px;width:1px;height:15px;background:#c0c0c0"></div><div style="left:744px;top:368px;width:1px;height:15px;background:#c0c0c0"></div><div style="left:765px;top:368px;width:1px;height:15px;background:#c0c0c0"></div><div style="left:786px;top:368px;width:1px;height:15px;background:#c0c0c0"></div><div style="left:807px;top:368px;width:1px;height:15px;background:#c0c0c0"></div><div style="left:828px;top:368px;width:1px;height:15px;background:#c0c0c0"></div><div style="left:849px;top:368px;width:1px;height:15px;background:#c0c0c0"></div><div style="left:870px;top:368px;width:1px;height:15px;background:#c0c0c0"></div><div style="left:891px;top:368px;width:1px;height:15px;background:#c0c0c0"></div><div style="left:912px;top:368px;width:1px;height:15px;background:#c0c0c0"></div><div style="left:933px;top:368px;width:1px;height:15px;background:#c0c0c0"></div><div style="left:954px;top:368px;width:1px;height:15px;background:#c0c0c0"></div><div style="left:975px;top:368px;width:1px;height:15px;background:#c0c0c0"></div><div style="left:996px;top:368px;width:1px;height:15px;background:#c0c0c0"></div><div style="left:1017px;top:368px;width:1px;height:15px;background:#c0c0c0"></div><div style="left:1036px;top:368px;width:1px;height:15px;background:#c0c0c0"></div><div style="left:1043px;top:368px;width:1px;height:15px;background:#c0c0c0"></div><div style="left:1106px;top:368px;width:1px;height:15px;background:#c0c0c0"></div><div style="left:1169px;top:368px;width:1px;height:15px;background:#c0c0c0"></div><div style="left:1232px;top:368px;width:1px;height:15px;background:#c0c0c0"></div><div style="left:1295px;top:368px;width:1px;height:15px;background:#c0c0c0"></div><div style="left:1358px;top:368px;width:1px;height:15px;background:#c0c0c0"></div><div style="left:366px;top:383px;width:1px;height:15px;background:#c0c0c0"></div><div style="left:1043px;top:383px;width:1px;height:15px;background:#c0c0c0"></div><div style="left:1106px;top:383px;width:1px;height:15px;background:#c0c0c0"></div><div style="left:1169px;top:383px;width:1px;height:15px;background:#c0c0c0"></div><div style="left:1232px;top:383px;width:1px;height:15px;background:#c0c0c0"></div><div style="left:1295px;top:383px;width:1px;height:15px;background:#c0c0c0"></div><div style="left:1358px;top:383px;width:1px;height:15px;background:#c0c0c0"></div><div style="left:366px;top:398px;width:1px;height:15px;background:#c0c0c0"></div><div style="left:1043px;top:398px;width:1px;height:15px;background:#c0c0c0"></div><div style="left:1106px;top:398px;width:1px;height:15px;background:#c0c0c0"></div><div style="left:1169px;top:398px;width:1px;height:15px;background:#c0c0c0"></div><div style="left:1232px;top:398px;width:1px;height:15px;background:#c0c0c0"></div><div style="left:1295px;top:398px;width:1px;height:15px;background:#c0c0c0"></div><div style="left:1358px;top:398px;width:1px;height:15px;background:#c0c0c0"></div><div style="left:366px;top:413px;width:1px;height:9px;background:#c0c0c0"></div><div style="left:1043px;top:413px;width:1px;height:9px;background:#c0c0c0"></div><div style="left:1106px;top:413px;width:1px;height:9px;background:#c0c0c0"></div><div style="left:1169px;top:413px;width:1px;height:9px;background:#c0c0c0"></div><div style="left:1232px;top:413px;width:1px;height:9px;background:#c0c0c0"></div><div style="left:1295px;top:413px;width:1px;height:9px;background:#c0c0c0"></div><div style="left:1358px;top:413px;width:1px;height:9px;background:#c0c0c0"></div><div style="left:366px;top:422px;width:1px;height:9px;background:#c0c0c0"></div><div style="left:387px;top:422px;width:1px;height:9px;background:#c0c0c0"></div><div style="left:408px;top:422px;width:1px;height:9px;background:#c0c0c0"></div><div style="left:429px;top:422px;width:1px;height:9px;background:#c0c0c0"></div><div style="left:450px;top:422px;width:1px;height:9px;background:#c0c0c0"></div><div style="left:471px;top:422px;width:1px;height:9px;background:#c0c0c0"></div><div style="left:492px;top:422px;width:1px;height:9px;background:#c0c0c0"></div><div style="left:513px;top:422px;width:1px;height:9px;background:#c0c0c0"></div><div style="left:534px;top:422px;width:1px;height:9px;background:#c0c0c0"></div><div style="left:555px;top:422px;width:1px;height:9px;background:#c0c0c0"></div><div style="left:576px;top:422px;width:1px;height:9px;background:#c0c0c0"></div><div style="left:597px;top:422px;width:1px;height:9px;background:#c0c0c0"></div><div style="left:618px;top:422px;width:1px;height:9px;background:#c0c0c0"></div><div style="left:639px;top:422px;width:1px;height:9px;background:#c0c0c0"></div><div style="left:660px;top:422px;width:1px;height:9px;background:#c0c0c0"></div><div style="left:681px;top:422px;width:1px;height:9px;background:#c0c0c0"></div><div style="left:702px;top:422px;width:1px;height:9px;background:#c0c0c0"></div><div style="left:723px;top:422px;width:1px;height:9px;background:#c0c0c0"></div><div style="left:744px;top:422px;width:1px;height:9px;background:#c0c0c0"></div><div style="left:765px;top:422px;width:1px;height:9px;background:#c0c0c0"></div><div style="left:786px;top:422px;width:1px;height:9px;background:#c0c0c0"></div><div style="left:807px;top:422px;width:1px;height:9px;background:#c0c0c0"></div><div style="left:828px;top:422px;width:1px;height:9px;background:#c0c0c0"></div><div style="left:849px;top:422px;width:1px;height:9px;background:#c0c0c0"></div><div style="left:870px;top:422px;width:1px;height:9px;background:#c0c0c0"></div><div style="left:891px;top:422px;width:1px;height:9px;background:#c0c0c0"></div><div style="left:912px;top:422px;width:1px;height:9px;background:#c0c0c0"></div><div style="left:933px;top:422px;width:1px;height:9px;background:#c0c0c0"></div><div style="left:954px;top:422px;width:1px;height:9px;background:#c0c0c0"></div><div style="left:975px;top:422px;width:1px;height:9px;background:#c0c0c0"></div><div style="left:996px;top:422px;width:1px;height:9px;background:#c0c0c0"></div><div style="left:1017px;top:422px;width:1px;height:9px;background:#c0c0c0"></div><div style="left:1036px;top:422px;width:1px;height:9px;background:#c0c0c0"></div><div style="left:1043px;top:422px;width:1px;height:9px;background:#c0c0c0"></div><div style="left:1106px;top:422px;width:1px;height:9px;background:#c0c0c0"></div><div style="left:1169px;top:422px;width:1px;height:9px;background:#c0c0c0"></div><div style="left:1232px;top:422px;width:1px;height:9px;background:#c0c0c0"></div><div style="left:1295px;top:422px;width:1px;height:9px;background:#c0c0c0"></div><div style="left:1358px;top:422px;width:1px;height:9px;background:#c0c0c0"></div><div style="left:366px;top:431px;width:1px;height:15px;background:#c0c0c0"></div><div style="left:387px;top:431px;width:1px;height:15px;background:#c0c0c0"></div><div style="left:408px;top:431px;width:1px;height:15px;background:#c0c0c0"></div><div style="left:429px;top:431px;width:1px;height:15px;background:#c0c0c0"></div><div style="left:450px;top:431px;width:1px;height:15px;background:#c0c0c0"></div><div style="left:471px;top:431px;width:1px;height:15px;background:#c0c0c0"></div><div style="left:492px;top:431px;width:1px;height:15px;background:#c0c0c0"></div><div style="left:513px;top:431px;width:1px;height:15px;background:#c0c0c0"></div><div style="left:534px;top:431px;width:1px;height:15px;background:#c0c0c0"></div><div style="left:555px;top:431px;width:1px;height:15px;background:#c0c0c0"></div><div style="left:576px;top:431px;width:1px;height:15px;background:#c0c0c0"></div><div style="left:597px;top:431px;width:1px;height:15px;background:#c0c0c0"></div><div style="left:618px;top:431px;width:1px;height:15px;background:#c0c0c0"></div><div style="left:639px;top:431px;width:1px;height:15px;background:#c0c0c0"></div><div style="left:660px;top:431px;width:1px;height:15px;background:#c0c0c0"></div><div style="left:681px;top:431px;width:1px;height:15px;background:#c0c0c0"></div><div style="left:702px;top:431px;width:1px;height:15px;background:#c0c0c0"></div><div style="left:723px;top:431px;width:1px;height:15px;background:#c0c0c0"></div><div style="left:744px;top:431px;width:1px;height:15px;background:#c0c0c0"></div><div style="left:765px;top:431px;width:1px;height:15px;background:#c0c0c0"></div><div style="left:786px;top:431px;width:1px;height:15px;background:#c0c0c0"></div><div style="left:807px;top:431px;width:1px;height:15px;background:#c0c0c0"></div><div style="left:828px;top:431px;width:1px;height:15px;background:#c0c0c0"></div><div style="left:849px;top:431px;width:1px;height:15px;background:#c0c0c0"></div><div style="left:870px;top:431px;width:1px;height:15px;background:#c0c0c0"></div><div style="left:891px;top:431px;width:1px;height:15px;background:#c0c0c0"></div><div style="left:912px;top:431px;width:1px;height:15px;background:#c0c0c0"></div><div style="left:933px;top:431px;width:1px;height:15px;background:#c0c0c0"></div><div style="left:954px;top:431px;width:1px;height:15px;background:#c0c0c0"></div><div style="left:975px;top:431px;width:1px;height:15px;background:#c0c0c0"></div><div style="left:996px;top:431px;width:1px;height:15px;background:#c0c0c0"></div><div style="left:1017px;top:431px;width:1px;height:15px;background:#c0c0c0"></div><div style="left:1036px;top:431px;width:1px;height:15px;background:#c0c0c0"></div><div style="left:1043px;top:431px;width:1px;height:15px;background:#c0c0c0"></div><div style="left:1106px;top:431px;width:1px;height:15px;background:#c0c0c0"></div><div style="left:1169px;top:431px;width:1px;height:15px;background:#c0c0c0"></div><div style="left:1232px;top:431px;width:1px;height:15px;background:#c0c0c0"></div><div style="left:1295px;top:431px;width:1px;height:15px;background:#c0c0c0"></div><div style="left:1358px;top:431px;width:1px;height:15px;background:#c0c0c0"></div><div style="left:366px;top:446px;width:1px;height:17px;background:#c0c0c0"></div><div style="left:1043px;top:446px;width:1px;height:17px;background:#c0c0c0"></div><div style="left:1106px;top:446px;width:1px;height:17px;background:#c0c0c0"></div><div style="left:1169px;top:446px;width:1px;height:17px;background:#c0c0c0"></div><div style="left:1232px;top:446px;width:1px;height:17px;background:#c0c0c0"></div><div style="left:1295px;top:446px;width:1px;height:17px;background:#c0c0c0"></div><div style="left:1358px;top:446px;width:1px;height:17px;background:#c0c0c0"></div><div style="left:450px;top:446px;width:1px;height:17px;background:#c0c0c0"></div><div style="left:366px;top:463px;width:1px;height:9px;background:#c0c0c0"></div><div style="left:387px;top:463px;width:1px;height:9px;background:#c0c0c0"></div><div style="left:408px;top:463px;width:1px;height:9px;background:#c0c0c0"></div><div style="left:429px;top:463px;width:1px;height:9px;background:#c0c0c0"></div><div style="left:450px;top:463px;width:1px;height:9px;background:#c0c0c0"></div><div style="left:471px;top:463px;width:1px;height:9px;background:#c0c0c0"></div><div style="left:492px;top:463px;width:1px;height:9px;background:#c0c0c0"></div><div style="left:513px;top:463px;width:1px;height:9px;background:#c0c0c0"></div><div style="left:534px;top:463px;width:1px;height:9px;background:#c0c0c0"></div><div style="left:555px;top:463px;width:1px;height:9px;background:#c0c0c0"></div><div style="left:576px;top:463px;width:1px;height:9px;background:#c0c0c0"></div><div style="left:597px;top:463px;width:1px;height:9px;background:#c0c0c0"></div><div style="left:618px;top:463px;width:1px;height:9px;background:#c0c0c0"></div><div style="left:639px;top:463px;width:1px;height:9px;background:#c0c0c0"></div><div style="left:660px;top:463px;width:1px;height:9px;background:#c0c0c0"></div><div style="left:681px;top:463px;width:1px;height:9px;background:#c0c0c0"></div><div style="left:702px;top:463px;width:1px;height:9px;background:#c0c0c0"></div><div style="left:723px;top:463px;width:1px;height:9px;background:#c0c0c0"></div><div style="left:744px;top:463px;width:1px;height:9px;background:#c0c0c0"></div><div style="left:765px;top:463px;width:1px;height:9px;background:#c0c0c0"></div><div style="left:786px;top:463px;width:1px;height:9px;background:#c0c0c0"></div><div style="left:807px;top:463px;width:1px;height:9px;background:#c0c0c0"></div><div style="left:828px;top:463px;width:1px;height:9px;background:#c0c0c0"></div><div style="left:849px;top:463px;width:1px;height:9px;background:#c0c0c0"></div><div style="left:870px;top:463px;width:1px;height:9px;background:#c0c0c0"></div><div style="left:891px;top:463px;width:1px;height:9px;background:#c0c0c0"></div><div style="left:912px;top:463px;width:1px;height:9px;background:#c0c0c0"></div><div style="left:933px;top:463px;width:1px;height:9px;background:#c0c0c0"></div><div style="left:954px;top:463px;width:1px;height:9px;background:#c0c0c0"></div><div style="left:975px;top:463px;width:1px;height:9px;background:#c0c0c0"></div><div style="left:996px;top:463px;width:1px;height:9px;background:#c0c0c0"></div><div style="left:1017px;top:463px;width:1px;height:9px;background:#c0c0c0"></div><div style="left:1036px;top:463px;width:1px;height:9px;background:#c0c0c0"></div><div style="left:1043px;top:463px;width:1px;height:9px;background:#c0c0c0"></div><div style="left:1106px;top:463px;width:1px;height:9px;background:#c0c0c0"></div><div style="left:1169px;top:463px;width:1px;height:9px;background:#c0c0c0"></div><div style="left:1232px;top:463px;width:1px;height:9px;background:#c0c0c0"></div><div style="left:1295px;top:463px;width:1px;height:9px;background:#c0c0c0"></div><div style="left:1358px;top:463px;width:1px;height:9px;background:#c0c0c0"></div><div style="left:366px;top:472px;width:1px;height:15px;background:#c0c0c0"></div><div style="left:387px;top:472px;width:1px;height:15px;background:#c0c0c0"></div><div style="left:408px;top:472px;width:1px;height:15px;background:#c0c0c0"></div><div style="left:429px;top:472px;width:1px;height:15px;background:#c0c0c0"></div><div style="left:450px;top:472px;width:1px;height:15px;background:#c0c0c0"></div><div style="left:471px;top:472px;width:1px;height:15px;background:#c0c0c0"></div><div style="left:492px;top:472px;width:1px;height:15px;background:#c0c0c0"></div><div style="left:513px;top:472px;width:1px;height:15px;background:#c0c0c0"></div><div style="left:534px;top:472px;width:1px;height:15px;background:#c0c0c0"></div><div style="left:555px;top:472px;width:1px;height:15px;background:#c0c0c0"></div><div style="left:576px;top:472px;width:1px;height:15px;background:#c0c0c0"></div><div style="left:597px;top:472px;width:1px;height:15px;background:#c0c0c0"></div><div style="left:618px;top:472px;width:1px;height:15px;background:#c0c0c0"></div><div style="left:639px;top:472px;width:1px;height:15px;background:#c0c0c0"></div><div style="left:660px;top:472px;width:1px;height:15px;background:#c0c0c0"></div><div style="left:681px;top:472px;width:1px;height:15px;background:#c0c0c0"></div><div style="left:702px;top:472px;width:1px;height:15px;background:#c0c0c0"></div><div style="left:723px;top:472px;width:1px;height:15px;background:#c0c0c0"></div><div style="left:744px;top:472px;width:1px;height:15px;background:#c0c0c0"></div><div style="left:765px;top:472px;width:1px;height:15px;background:#c0c0c0"></div><div style="left:786px;top:472px;width:1px;height:15px;background:#c0c0c0"></div><div style="left:807px;top:472px;width:1px;height:15px;background:#c0c0c0"></div><div style="left:828px;top:472px;width:1px;height:15px;background:#c0c0c0"></div><div style="left:849px;top:472px;width:1px;height:15px;background:#c0c0c0"></div><div style="left:870px;top:472px;width:1px;height:15px;background:#c0c0c0"></div><div style="left:891px;top:472px;width:1px;height:15px;background:#c0c0c0"></div><div style="left:912px;top:472px;width:1px;height:15px;background:#c0c0c0"></div><div style="left:933px;top:472px;width:1px;height:15px;background:#c0c0c0"></div><div style="left:954px;top:472px;width:1px;height:15px;background:#c0c0c0"></div><div style="left:975px;top:472px;width:1px;height:15px;background:#c0c0c0"></div><div style="left:996px;top:472px;width:1px;height:15px;background:#c0c0c0"></div><div style="left:1017px;top:472px;width:1px;height:15px;background:#c0c0c0"></div><div style="left:1036px;top:472px;width:1px;height:15px;background:#c0c0c0"></div><div style="left:1043px;top:472px;width:1px;height:15px;background:#c0c0c0"></div><div style="left:1106px;top:472px;width:1px;height:15px;background:#c0c0c0"></div><div style="left:1169px;top:472px;width:1px;height:15px;background:#c0c0c0"></div><div style="left:1232px;top:472px;width:1px;height:15px;background:#c0c0c0"></div><div style="left:1295px;top:472px;width:1px;height:15px;background:#c0c0c0"></div><div style="left:1358px;top:472px;width:1px;height:15px;background:#c0c0c0"></div><div style="left:366px;top:487px;width:1px;height:17px;background:#c0c0c0"></div><div style="left:1043px;top:487px;width:1px;height:17px;background:#c0c0c0"></div><div style="left:1106px;top:487px;width:1px;height:17px;background:#c0c0c0"></div><div style="left:1169px;top:487px;width:1px;height:17px;background:#c0c0c0"></div><div style="left:1232px;top:487px;width:1px;height:17px;background:#c0c0c0"></div><div style="left:1295px;top:487px;width:1px;height:17px;background:#c0c0c0"></div><div style="left:1358px;top:487px;width:1px;height:17px;background:#c0c0c0"></div><div style="left:450px;top:487px;width:1px;height:17px;background:#c0c0c0"></div><div style="left:366px;top:504px;width:1px;height:9px;background:#c0c0c0"></div><div style="left:387px;top:504px;width:1px;height:9px;background:#c0c0c0"></div><div style="left:408px;top:504px;width:1px;height:9px;background:#c0c0c0"></div><div style="left:429px;top:504px;width:1px;height:9px;background:#c0c0c0"></div><div style="left:450px;top:504px;width:1px;height:9px;background:#c0c0c0"></div><div style="left:471px;top:504px;width:1px;height:9px;background:#c0c0c0"></div><div style="left:492px;top:504px;width:1px;height:9px;background:#c0c0c0"></div><div style="left:513px;top:504px;width:1px;height:9px;background:#c0c0c0"></div><div style="left:534px;top:504px;width:1px;height:9px;background:#c0c0c0"></div><div style="left:555px;top:504px;width:1px;height:9px;background:#c0c0c0"></div><div style="left:576px;top:504px;width:1px;height:9px;background:#c0c0c0"></div><div style="left:597px;top:504px;width:1px;height:9px;background:#c0c0c0"></div><div style="left:618px;top:504px;width:1px;height:9px;background:#c0c0c0"></div><div style="left:639px;top:504px;width:1px;height:9px;background:#c0c0c0"></div><div style="left:660px;top:504px;width:1px;height:9px;background:#c0c0c0"></div><div style="left:681px;top:504px;width:1px;height:9px;background:#c0c0c0"></div><div style="left:702px;top:504px;width:1px;height:9px;background:#c0c0c0"></div><div style="left:723px;top:504px;width:1px;height:9px;background:#c0c0c0"></div><div style="left:744px;top:504px;width:1px;height:9px;background:#c0c0c0"></div><div style="left:765px;top:504px;width:1px;height:9px;background:#c0c0c0"></div><div style="left:786px;top:504px;width:1px;height:9px;background:#c0c0c0"></div><div style="left:807px;top:504px;width:1px;height:9px;background:#c0c0c0"></div><div style="left:828px;top:504px;width:1px;height:9px;background:#c0c0c0"></div><div style="left:849px;top:504px;width:1px;height:9px;background:#c0c0c0"></div><div style="left:870px;top:504px;width:1px;height:9px;background:#c0c0c0"></div><div style="left:891px;top:504px;width:1px;height:9px;background:#c0c0c0"></div><div style="left:912px;top:504px;width:1px;height:9px;background:#c0c0c0"></div><div style="left:933px;top:504px;width:1px;height:9px;background:#c0c0c0"></div><div style="left:954px;top:504px;width:1px;height:9px;background:#c0c0c0"></div><div style="left:975px;top:504px;width:1px;height:9px;background:#c0c0c0"></div><div style="left:996px;top:504px;width:1px;height:9px;background:#c0c0c0"></div><div style="left:1017px;top:504px;width:1px;height:9px;background:#c0c0c0"></div><div style="left:1036px;top:504px;width:1px;height:9px;background:#c0c0c0"></div><div style="left:1043px;top:504px;width:1px;height:9px;background:#c0c0c0"></div><div style="left:1106px;top:504px;width:1px;height:9px;background:#c0c0c0"></div><div style="left:1169px;top:504px;width:1px;height:9px;background:#c0c0c0"></div><div style="left:1232px;top:504px;width:1px;height:9px;background:#c0c0c0"></div><div style="left:1295px;top:504px;width:1px;height:9px;background:#c0c0c0"></div><div style="left:1358px;top:504px;width:1px;height:9px;background:#c0c0c0"></div><div style="left:366px;top:513px;width:1px;height:15px;background:#c0c0c0"></div><div style="left:387px;top:513px;width:1px;height:15px;background:#c0c0c0"></div><div style="left:408px;top:513px;width:1px;height:15px;background:#c0c0c0"></div><div style="left:429px;top:513px;width:1px;height:15px;background:#c0c0c0"></div><div style="left:450px;top:513px;width:1px;height:15px;background:#c0c0c0"></div><div style="left:471px;top:513px;width:1px;height:15px;background:#c0c0c0"></div><div style="left:492px;top:513px;width:1px;height:15px;background:#c0c0c0"></div><div style="left:513px;top:513px;width:1px;height:15px;background:#c0c0c0"></div><div style="left:534px;top:513px;width:1px;height:15px;background:#c0c0c0"></div><div style="left:555px;top:513px;width:1px;height:15px;background:#c0c0c0"></div><div style="left:576px;top:513px;width:1px;height:15px;background:#c0c0c0"></div><div style="left:597px;top:513px;width:1px;height:15px;background:#c0c0c0"></div><div style="left:618px;top:513px;width:1px;height:15px;background:#c0c0c0"></div><div style="left:639px;top:513px;width:1px;height:15px;background:#c0c0c0"></div><div style="left:660px;top:513px;width:1px;height:15px;background:#c0c0c0"></div><div style="left:681px;top:513px;width:1px;height:15px;background:#c0c0c0"></div><div style="left:702px;top:513px;width:1px;height:15px;background:#c0c0c0"></div><div style="left:723px;top:513px;width:1px;height:15px;background:#c0c0c0"></div><div style="left:744px;top:513px;width:1px;height:15px;background:#c0c0c0"></div><div style="left:765px;top:513px;width:1px;height:15px;background:#c0c0c0"></div><div style="left:786px;top:513px;width:1px;height:15px;background:#c0c0c0"></div><div style="left:807px;top:513px;width:1px;height:15px;background:#c0c0c0"></div><div style="left:828px;top:513px;width:1px;height:15px;background:#c0c0c0"></div><div style="left:849px;top:513px;width:1px;height:15px;background:#c0c0c0"></div><div style="left:870px;top:513px;width:1px;height:15px;background:#c0c0c0"></div><div style="left:891px;top:513px;width:1px;height:15px;background:#c0c0c0"></div><div style="left:912px;top:513px;width:1px;height:15px;background:#c0c0c0"></div><div style="left:933px;top:513px;width:1px;height:15px;background:#c0c0c0"></div><div style="left:954px;top:513px;width:1px;height:15px;background:#c0c0c0"></div><div style="left:975px;top:513px;width:1px;height:15px;background:#c0c0c0"></div><div style="left:996px;top:513px;width:1px;height:15px;background:#c0c0c0"></div><div style="left:1017px;top:513px;width:1px;height:15px;background:#c0c0c0"></div><div style="left:1036px;top:513px;width:1px;height:15px;background:#c0c0c0"></div><div style="left:1043px;top:513px;width:1px;height:15px;background:#c0c0c0"></div><div style="left:1106px;top:513px;width:1px;height:15px;background:#c0c0c0"></div><div style="left:1169px;top:513px;width:1px;height:15px;background:#c0c0c0"></div><div style="left:1232px;top:513px;width:1px;height:15px;background:#c0c0c0"></div><div style="left:1295px;top:513px;width:1px;height:15px;background:#c0c0c0"></div><div style="left:1358px;top:513px;width:1px;height:15px;background:#c0c0c0"></div><div style="left:366px;top:528px;width:1px;height:17px;background:#c0c0c0"></div><div style="left:408px;top:528px;width:1px;height:17px;background:#c0c0c0"></div><div style="left:711px;top:528px;width:1px;height:17px;background:#c0c0c0"></div><div style="left:774px;top:528px;width:1px;height:17px;background:#c0c0c0"></div><div style="left:822px;top:528px;width:1px;height:17px;background:#c0c0c0"></div><div style="left:921px;top:528px;width:1px;height:17px;background:#c0c0c0"></div><div style="left:1099px;top:528px;width:1px;height:17px;background:#c0c0c0"></div><div style="left:1162px;top:528px;width:1px;height:17px;background:#c0c0c0"></div><div style="left:1225px;top:528px;width:1px;height:17px;background:#c0c0c0"></div><div style="left:1288px;top:528px;width:1px;height:17px;background:#c0c0c0"></div><div style="left:1351px;top:528px;width:1px;height:17px;background:#c0c0c0"></div><div style="left:1414px;top:528px;width:1px;height:17px;background:#c0c0c0"></div><div style="left:366px;top:545px;width:1px;height:15px;background:#c0c0c0"></div><div style="left:408px;top:545px;width:1px;height:15px;background:#c0c0c0"></div><div style="left:711px;top:545px;width:1px;height:15px;background:#c0c0c0"></div><div style="left:774px;top:545px;width:1px;height:15px;background:#c0c0c0"></div><div style="left:822px;top:545px;width:1px;height:15px;background:#c0c0c0"></div><div style="left:921px;top:545px;width:1px;height:15px;background:#c0c0c0"></div><div style="left:1099px;top:545px;width:1px;height:15px;background:#c0c0c0"></div><div style="left:1162px;top:545px;width:1px;height:15px;background:#c0c0c0"></div><div style="left:1225px;top:545px;width:1px;height:15px;background:#c0c0c0"></div><div style="left:1288px;top:545px;width:1px;height:15px;background:#c0c0c0"></div><div style="left:1351px;top:545px;width:1px;height:15px;background:#c0c0c0"></div><div style="left:1414px;top:545px;width:1px;height:15px;background:#c0c0c0"></div><div style="left:366px;top:560px;width:1px;height:15px;background:#c0c0c0"></div><div style="left:408px;top:560px;width:1px;height:15px;background:#c0c0c0"></div><div style="left:711px;top:560px;width:1px;height:15px;background:#c0c0c0"></div><div style="left:774px;top:560px;width:1px;height:15px;background:#c0c0c0"></div><div style="left:822px;top:560px;width:1px;height:15px;background:#c0c0c0"></div><div style="left:921px;top:560px;width:1px;height:15px;background:#c0c0c0"></div><div style="left:1099px;top:560px;width:1px;height:15px;background:#c0c0c0"></div><div style="left:1162px;top:560px;width:1px;height:15px;background:#c0c0c0"></div><div style="left:1225px;top:560px;width:1px;height:15px;background:#c0c0c0"></div><div style="left:1288px;top:560px;width:1px;height:15px;background:#c0c0c0"></div><div style="left:1351px;top:560px;width:1px;height:15px;background:#c0c0c0"></div><div style="left:1414px;top:560px;width:1px;height:15px;background:#c0c0c0"></div><div style="left:366px;top:575px;width:1px;height:15px;background:#c0c0c0"></div><div style="left:408px;top:575px;width:1px;height:15px;background:#c0c0c0"></div><div style="left:711px;top:575px;width:1px;height:15px;background:#c0c0c0"></div><div style="left:774px;top:575px;width:1px;height:15px;background:#c0c0c0"></div><div style="left:822px;top:575px;width:1px;height:15px;background:#c0c0c0"></div><div style="left:921px;top:575px;width:1px;height:15px;background:#c0c0c0"></div><div style="left:1099px;top:575px;width:1px;height:15px;background:#c0c0c0"></div><div style="left:1162px;top:575px;width:1px;height:15px;background:#c0c0c0"></div><div style="left:1225px;top:575px;width:1px;height:15px;background:#c0c0c0"></div><div style="left:1288px;top:575px;width:1px;height:15px;background:#c0c0c0"></div><div style="left:1351px;top:575px;width:1px;height:15px;background:#c0c0c0"></div><div style="left:1414px;top:575px;width:1px;height:15px;background:#c0c0c0"></div><div style="left:366px;top:590px;width:1px;height:9px;background:#c0c0c0"></div><div style="left:408px;top:590px;width:1px;height:9px;background:#c0c0c0"></div><div style="left:711px;top:590px;width:1px;height:9px;background:#c0c0c0"></div><div style="left:774px;top:590px;width:1px;height:9px;background:#c0c0c0"></div><div style="left:822px;top:590px;width:1px;height:9px;background:#c0c0c0"></div><div style="left:921px;top:590px;width:1px;height:9px;background:#c0c0c0"></div><div style="left:1099px;top:590px;width:1px;height:9px;background:#c0c0c0"></div><div style="left:1162px;top:590px;width:1px;height:9px;background:#c0c0c0"></div><div style="left:1225px;top:590px;width:1px;height:9px;background:#c0c0c0"></div><div style="left:1288px;top:590px;width:1px;height:9px;background:#c0c0c0"></div><div style="left:1351px;top:590px;width:1px;height:9px;background:#c0c0c0"></div><div style="left:1414px;top:590px;width:1px;height:9px;background:#c0c0c0"></div><div style="left:366px;top:599px;width:1px;height:17px;background:#c0c0c0"></div><div style="left:408px;top:599px;width:1px;height:17px;background:#c0c0c0"></div><div style="left:711px;top:599px;width:1px;height:17px;background:#c0c0c0"></div><div style="left:774px;top:599px;width:1px;height:17px;background:#c0c0c0"></div><div style="left:822px;top:599px;width:1px;height:17px;background:#c0c0c0"></div><div style="left:921px;top:599px;width:1px;height:17px;background:#c0c0c0"></div><div style="left:1099px;top:599px;width:1px;height:17px;background:#c0c0c0"></div><div style="left:1162px;top:599px;width:1px;height:17px;background:#c0c0c0"></div><div style="left:1225px;top:599px;width:1px;height:17px;background:#c0c0c0"></div><div style="left:1288px;top:599px;width:1px;height:17px;background:#c0c0c0"></div><div style="left:1351px;top:599px;width:1px;height:17px;background:#c0c0c0"></div><div style="left:1414px;top:599px;width:1px;height:17px;background:#c0c0c0"></div><div style="left:366px;top:616px;width:1px;height:15px;background:#c0c0c0"></div><div style="left:408px;top:616px;width:1px;height:15px;background:#c0c0c0"></div><div style="left:711px;top:616px;width:1px;height:15px;background:#c0c0c0"></div><div style="left:774px;top:616px;width:1px;height:15px;background:#c0c0c0"></div><div style="left:822px;top:616px;width:1px;height:15px;background:#c0c0c0"></div><div style="left:921px;top:616px;width:1px;height:15px;background:#c0c0c0"></div><div style="left:1099px;top:616px;width:1px;height:15px;background:#c0c0c0"></div><div style="left:1162px;top:616px;width:1px;height:15px;background:#c0c0c0"></div><div style="left:1225px;top:616px;width:1px;height:15px;background:#c0c0c0"></div><div style="left:1288px;top:616px;width:1px;height:15px;background:#c0c0c0"></div><div style="left:1351px;top:616px;width:1px;height:15px;background:#c0c0c0"></div><div style="left:1414px;top:616px;width:1px;height:15px;background:#c0c0c0"></div><div style="left:366px;top:631px;width:1px;height:17px;background:#c0c0c0"></div><div style="left:408px;top:631px;width:1px;height:17px;background:#c0c0c0"></div><div style="left:711px;top:631px;width:1px;height:17px;background:#c0c0c0"></div><div style="left:774px;top:631px;width:1px;height:17px;background:#c0c0c0"></div><div style="left:822px;top:631px;width:1px;height:17px;background:#c0c0c0"></div><div style="left:921px;top:631px;width:1px;height:17px;background:#c0c0c0"></div><div style="left:1099px;top:631px;width:1px;height:17px;background:#c0c0c0"></div><div style="left:1162px;top:631px;width:1px;height:17px;background:#c0c0c0"></div><div style="left:1225px;top:631px;width:1px;height:17px;background:#c0c0c0"></div><div style="left:1288px;top:631px;width:1px;height:17px;background:#c0c0c0"></div><div style="left:1351px;top:631px;width:1px;height:17px;background:#c0c0c0"></div><div style="left:1414px;top:631px;width:1px;height:17px;background:#c0c0c0"></div><div style="left:366px;top:648px;width:1px;height:9px;background:#c0c0c0"></div><div style="left:387px;top:648px;width:1px;height:9px;background:#c0c0c0"></div><div style="left:408px;top:648px;width:1px;height:9px;background:#c0c0c0"></div><div style="left:429px;top:648px;width:1px;height:9px;background:#c0c0c0"></div><div style="left:450px;top:648px;width:1px;height:9px;background:#c0c0c0"></div><div style="left:471px;top:648px;width:1px;height:9px;background:#c0c0c0"></div><div style="left:492px;top:648px;width:1px;height:9px;background:#c0c0c0"></div><div style="left:513px;top:648px;width:1px;height:9px;background:#c0c0c0"></div><div style="left:534px;top:648px;width:1px;height:9px;background:#c0c0c0"></div><div style="left:555px;top:648px;width:1px;height:9px;background:#c0c0c0"></div><div style="left:576px;top:648px;width:1px;height:9px;background:#c0c0c0"></div><div style="left:597px;top:648px;width:1px;height:9px;background:#c0c0c0"></div><div style="left:618px;top:648px;width:1px;height:9px;background:#c0c0c0"></div><div style="left:639px;top:648px;width:1px;height:9px;background:#c0c0c0"></div><div style="left:660px;top:648px;width:1px;height:9px;background:#c0c0c0"></div><div style="left:681px;top:648px;width:1px;height:9px;background:#c0c0c0"></div><div style="left:702px;top:648px;width:1px;height:9px;background:#c0c0c0"></div><div style="left:723px;top:648px;width:1px;height:9px;background:#c0c0c0"></div><div style="left:744px;top:648px;width:1px;height:9px;background:#c0c0c0"></div><div style="left:765px;top:648px;width:1px;height:9px;background:#c0c0c0"></div><div style="left:786px;top:648px;width:1px;height:9px;background:#c0c0c0"></div><div style="left:807px;top:648px;width:1px;height:9px;background:#c0c0c0"></div><div style="left:828px;top:648px;width:1px;height:9px;background:#c0c0c0"></div><div style="left:849px;top:648px;width:1px;height:9px;background:#c0c0c0"></div><div style="left:870px;top:648px;width:1px;height:9px;background:#c0c0c0"></div><div style="left:891px;top:648px;width:1px;height:9px;background:#c0c0c0"></div><div style="left:912px;top:648px;width:1px;height:9px;background:#c0c0c0"></div><div style="left:933px;top:648px;width:1px;height:9px;background:#c0c0c0"></div><div style="left:954px;top:648px;width:1px;height:9px;background:#c0c0c0"></div><div style="left:975px;top:648px;width:1px;height:9px;background:#c0c0c0"></div><div style="left:996px;top:648px;width:1px;height:9px;background:#c0c0c0"></div><div style="left:1017px;top:648px;width:1px;height:9px;background:#c0c0c0"></div><div style="left:1036px;top:648px;width:1px;height:9px;background:#c0c0c0"></div><div style="left:1043px;top:648px;width:1px;height:9px;background:#c0c0c0"></div><div style="left:1106px;top:648px;width:1px;height:9px;background:#c0c0c0"></div><div style="left:1169px;top:648px;width:1px;height:9px;background:#c0c0c0"></div><div style="left:1232px;top:648px;width:1px;height:9px;background:#c0c0c0"></div><div style="left:1295px;top:648px;width:1px;height:9px;background:#c0c0c0"></div><div style="left:1358px;top:648px;width:1px;height:9px;background:#c0c0c0"></div><div style="left:366px;top:657px;width:1px;height:17px;background:#c0c0c0"></div><div style="left:1043px;top:657px;width:1px;height:17px;background:#c0c0c0"></div><div style="left:1106px;top:657px;width:1px;height:17px;background:#c0c0c0"></div><div style="left:1169px;top:657px;width:1px;height:17px;background:#c0c0c0"></div><div style="left:1232px;top:657px;width:1px;height:17px;background:#c0c0c0"></div><div style="left:1295px;top:657px;width:1px;height:17px;background:#c0c0c0"></div><div style="left:1358px;top:657px;width:1px;height:17px;background:#c0c0c0"></div><div style="left:366px;top:674px;width:1px;height:17px;background:#c0c0c0"></div><div style="left:1043px;top:674px;width:1px;height:17px;background:#c0c0c0"></div><div style="left:1106px;top:674px;width:1px;height:17px;background:#c0c0c0"></div><div style="left:1169px;top:674px;width:1px;height:17px;background:#c0c0c0"></div><div style="left:1232px;top:674px;width:1px;height:17px;background:#c0c0c0"></div><div style="left:1295px;top:674px;width:1px;height:17px;background:#c0c0c0"></div><div style="left:1358px;top:674px;width:1px;height:17px;background:#c0c0c0"></div><div style="left:366px;top:691px;width:1px;height:15px;background:#c0c0c0"></div><div style="left:387px;top:691px;width:1px;height:15px;background:#c0c0c0"></div><div style="left:408px;top:691px;width:1px;height:15px;background:#c0c0c0"></div><div style="left:429px;top:691px;width:1px;height:15px;background:#c0c0c0"></div><div style="left:450px;top:691px;width:1px;height:15px;background:#c0c0c0"></div><div style="left:471px;top:691px;width:1px;height:15px;background:#c0c0c0"></div><div style="left:492px;top:691px;width:1px;height:15px;background:#c0c0c0"></div><div style="left:513px;top:691px;width:1px;height:15px;background:#c0c0c0"></div><div style="left:534px;top:691px;width:1px;height:15px;background:#c0c0c0"></div><div style="left:555px;top:691px;width:1px;height:15px;background:#c0c0c0"></div><div style="left:576px;top:691px;width:1px;height:15px;background:#c0c0c0"></div><div style="left:597px;top:691px;width:1px;height:15px;background:#c0c0c0"></div><div style="left:618px;top:691px;width:1px;height:15px;background:#c0c0c0"></div><div style="left:639px;top:691px;width:1px;height:15px;background:#c0c0c0"></div><div style="left:660px;top:691px;width:1px;height:15px;background:#c0c0c0"></div><div style="left:681px;top:691px;width:1px;height:15px;background:#c0c0c0"></div><div style="left:702px;top:691px;width:1px;height:15px;background:#c0c0c0"></div><div style="left:723px;top:691px;width:1px;height:15px;background:#c0c0c0"></div><div style="left:744px;top:691px;width:1px;height:15px;background:#c0c0c0"></div><div style="left:765px;top:691px;width:1px;height:15px;background:#c0c0c0"></div><div style="left:786px;top:691px;width:1px;height:15px;background:#c0c0c0"></div><div style="left:807px;top:691px;width:1px;height:15px;background:#c0c0c0"></div><div style="left:828px;top:691px;width:1px;height:15px;background:#c0c0c0"></div><div style="left:849px;top:691px;width:1px;height:15px;background:#c0c0c0"></div><div style="left:870px;top:691px;width:1px;height:15px;background:#c0c0c0"></div><div style="left:891px;top:691px;width:1px;height:15px;background:#c0c0c0"></div><div style="left:912px;top:691px;width:1px;height:15px;background:#c0c0c0"></div><div style="left:933px;top:691px;width:1px;height:15px;background:#c0c0c0"></div><div style="left:954px;top:691px;width:1px;height:15px;background:#c0c0c0"></div><div style="left:975px;top:691px;width:1px;height:15px;background:#c0c0c0"></div><div style="left:996px;top:691px;width:1px;height:15px;background:#c0c0c0"></div><div style="left:1017px;top:691px;width:1px;height:15px;background:#c0c0c0"></div><div style="left:1036px;top:691px;width:1px;height:15px;background:#c0c0c0"></div><div style="left:1043px;top:691px;width:1px;height:15px;background:#c0c0c0"></div><div style="left:1106px;top:691px;width:1px;height:15px;background:#c0c0c0"></div><div style="left:1169px;top:691px;width:1px;height:15px;background:#c0c0c0"></div><div style="left:1232px;top:691px;width:1px;height:15px;background:#c0c0c0"></div><div style="left:1295px;top:691px;width:1px;height:15px;background:#c0c0c0"></div><div style="left:1358px;top:691px;width:1px;height:15px;background:#c0c0c0"></div><div style="left:366px;top:706px;width:1px;height:9px;background:#c0c0c0"></div><div style="left:387px;top:706px;width:1px;height:9px;background:#c0c0c0"></div><div style="left:408px;top:706px;width:1px;height:9px;background:#c0c0c0"></div><div style="left:429px;top:706px;width:1px;height:9px;background:#c0c0c0"></div><div style="left:450px;top:706px;width:1px;height:9px;background:#c0c0c0"></div><div style="left:471px;top:706px;width:1px;height:9px;background:#c0c0c0"></div><div style="left:492px;top:706px;width:1px;height:9px;background:#c0c0c0"></div><div style="left:513px;top:706px;width:1px;height:9px;background:#c0c0c0"></div><div style="left:534px;top:706px;width:1px;height:9px;background:#c0c0c0"></div><div style="left:555px;top:706px;width:1px;height:9px;background:#c0c0c0"></div><div style="left:576px;top:706px;width:1px;height:9px;background:#c0c0c0"></div><div style="left:597px;top:706px;width:1px;height:9px;background:#c0c0c0"></div><div style="left:618px;top:706px;width:1px;height:9px;background:#c0c0c0"></div><div style="left:639px;top:706px;width:1px;height:9px;background:#c0c0c0"></div><div style="left:660px;top:706px;width:1px;height:9px;background:#c0c0c0"></div><div style="left:681px;top:706px;width:1px;height:9px;background:#c0c0c0"></div><div style="left:702px;top:706px;width:1px;height:9px;background:#c0c0c0"></div><div style="left:723px;top:706px;width:1px;height:9px;background:#c0c0c0"></div><div style="left:744px;top:706px;width:1px;height:9px;background:#c0c0c0"></div><div style="left:765px;top:706px;width:1px;height:9px;background:#c0c0c0"></div><div style="left:786px;top:706px;width:1px;height:9px;background:#c0c0c0"></div><div style="left:807px;top:706px;width:1px;height:9px;background:#c0c0c0"></div><div style="left:828px;top:706px;width:1px;height:9px;background:#c0c0c0"></div><div style="left:849px;top:706px;width:1px;height:9px;background:#c0c0c0"></div><div style="left:870px;top:706px;width:1px;height:9px;background:#c0c0c0"></div><div style="left:891px;top:706px;width:1px;height:9px;background:#c0c0c0"></div><div style="left:912px;top:706px;width:1px;height:9px;background:#c0c0c0"></div><div style="left:933px;top:706px;width:1px;height:9px;background:#c0c0c0"></div><div style="left:954px;top:706px;width:1px;height:9px;background:#c0c0c0"></div><div style="left:975px;top:706px;width:1px;height:9px;background:#c0c0c0"></div><div style="left:996px;top:706px;width:1px;height:9px;background:#c0c0c0"></div><div style="left:1017px;top:706px;width:1px;height:9px;background:#c0c0c0"></div><div style="left:1036px;top:706px;width:1px;height:9px;background:#c0c0c0"></div><div style="left:1043px;top:706px;width:1px;height:9px;background:#c0c0c0"></div><div style="left:1106px;top:706px;width:1px;height:9px;background:#c0c0c0"></div><div style="left:1169px;top:706px;width:1px;height:9px;background:#c0c0c0"></div><div style="left:1232px;top:706px;width:1px;height:9px;background:#c0c0c0"></div><div style="left:1295px;top:706px;width:1px;height:9px;background:#c0c0c0"></div><div style="left:1358px;top:706px;width:1px;height:9px;background:#c0c0c0"></div><div style="left:366px;top:715px;width:1px;height:15px;background:#c0c0c0"></div><div style="left:387px;top:715px;width:1px;height:15px;background:#c0c0c0"></div><div style="left:408px;top:715px;width:1px;height:15px;background:#c0c0c0"></div><div style="left:429px;top:715px;width:1px;height:15px;background:#c0c0c0"></div><div style="left:450px;top:715px;width:1px;height:15px;background:#c0c0c0"></div><div style="left:471px;top:715px;width:1px;height:15px;background:#c0c0c0"></div><div style="left:492px;top:715px;width:1px;height:15px;background:#c0c0c0"></div><div style="left:513px;top:715px;width:1px;height:15px;background:#c0c0c0"></div><div style="left:534px;top:715px;width:1px;height:15px;background:#c0c0c0"></div><div style="left:555px;top:715px;width:1px;height:15px;background:#c0c0c0"></div><div style="left:576px;top:715px;width:1px;height:15px;background:#c0c0c0"></div><div style="left:597px;top:715px;width:1px;height:15px;background:#c0c0c0"></div><div style="left:618px;top:715px;width:1px;height:15px;background:#c0c0c0"></div><div style="left:639px;top:715px;width:1px;height:15px;background:#c0c0c0"></div><div style="left:660px;top:715px;width:1px;height:15px;background:#c0c0c0"></div><div style="left:681px;top:715px;width:1px;height:15px;background:#c0c0c0"></div><div style="left:702px;top:715px;width:1px;height:15px;background:#c0c0c0"></div><div style="left:723px;top:715px;width:1px;height:15px;background:#c0c0c0"></div><div style="left:744px;top:715px;width:1px;height:15px;background:#c0c0c0"></div><div style="left:765px;top:715px;width:1px;height:15px;background:#c0c0c0"></div><div style="left:786px;top:715px;width:1px;height:15px;background:#c0c0c0"></div><div style="left:807px;top:715px;width:1px;height:15px;background:#c0c0c0"></div><div style="left:828px;top:715px;width:1px;height:15px;background:#c0c0c0"></div><div style="left:849px;top:715px;width:1px;height:15px;background:#c0c0c0"></div><div style="left:870px;top:715px;width:1px;height:15px;background:#c0c0c0"></div><div style="left:891px;top:715px;width:1px;height:15px;background:#c0c0c0"></div><div style="left:912px;top:715px;width:1px;height:15px;background:#c0c0c0"></div><div style="left:933px;top:715px;width:1px;height:15px;background:#c0c0c0"></div><div style="left:954px;top:715px;width:1px;height:15px;background:#c0c0c0"></div><div style="left:975px;top:715px;width:1px;height:15px;background:#c0c0c0"></div><div style="left:996px;top:715px;width:1px;height:15px;background:#c0c0c0"></div><div style="left:1017px;top:715px;width:1px;height:15px;background:#c0c0c0"></div><div style="left:1036px;top:715px;width:1px;height:15px;background:#c0c0c0"></div><div style="left:1043px;top:715px;width:1px;height:15px;background:#c0c0c0"></div><div style="left:1106px;top:715px;width:1px;height:15px;background:#c0c0c0"></div><div style="left:1169px;top:715px;width:1px;height:15px;background:#c0c0c0"></div><div style="left:1232px;top:715px;width:1px;height:15px;background:#c0c0c0"></div><div style="left:1295px;top:715px;width:1px;height:15px;background:#c0c0c0"></div><div style="left:1358px;top:715px;width:1px;height:15px;background:#c0c0c0"></div><div style="left:366px;top:730px;width:1px;height:12px;background:#c0c0c0"></div><div style="left:471px;top:730px;width:1px;height:12px;background:#c0c0c0"></div><div style="left:492px;top:730px;width:1px;height:12px;background:#c0c0c0"></div><div style="left:513px;top:730px;width:1px;height:12px;background:#c0c0c0"></div><div style="left:534px;top:730px;width:1px;height:12px;background:#c0c0c0"></div><div style="left:555px;top:730px;width:1px;height:12px;background:#c0c0c0"></div><div style="left:849px;top:730px;width:1px;height:12px;background:#c0c0c0"></div><div style="left:870px;top:730px;width:1px;height:12px;background:#c0c0c0"></div><div style="left:891px;top:730px;width:1px;height:12px;background:#c0c0c0"></div><div style="left:912px;top:730px;width:1px;height:12px;background:#c0c0c0"></div><div style="left:1043px;top:730px;width:1px;height:12px;background:#c0c0c0"></div><div style="left:1106px;top:730px;width:1px;height:12px;background:#c0c0c0"></div><div style="left:1169px;top:730px;width:1px;height:12px;background:#c0c0c0"></div><div style="left:1232px;top:730px;width:1px;height:12px;background:#c0c0c0"></div><div style="left:1295px;top:730px;width:1px;height:12px;background:#c0c0c0"></div><div style="left:1358px;top:730px;width:1px;height:12px;background:#c0c0c0"></div><div style="left:359px;top:184px;width:1062px;height:1px;background:#c0c0c0"></div><div style="left:359px;top:199px;width:7px;height:1px;background:#c0c0c0"></div><div style="left:1036px;top:199px;width:385px;height:1px;background:#c0c0c0"></div><div style="left:359px;top:214px;width:7px;height:1px;background:#c0c0c0"></div><div style="left:1036px;top:214px;width:385px;height:1px;background:#c0c0c0"></div><div style="left:359px;top:229px;width:1062px;height:1px;background:#c0c0c0"></div><div style="left:359px;top:244px;width:1062px;height:1px;background:#c0c0c0"></div><div style="left:359px;top:261px;width:7px;height:1px;background:#c0c0c0"></div><div style="left:807px;top:261px;width:614px;height:1px;background:#c0c0c0"></div><div style="left:359px;top:276px;width:385px;height:1px;background:#c0c0c0"></div><div style="left:1036px;top:276px;width:385px;height:1px;background:#c0c0c0"></div><div style="left:359px;top:291px;width:1062px;height:1px;background:#c0c0c0"></div><div style="left:359px;top:308px;width:7px;height:1px;background:#c0c0c0"></div><div style="left:1036px;top:308px;width:385px;height:1px;background:#c0c0c0"></div><div style="left:359px;top:323px;width:7px;height:1px;background:#c0c0c0"></div><div style="left:1036px;top:323px;width:385px;height:1px;background:#c0c0c0"></div><div style="left:359px;top:338px;width:385px;height:1px;background:#c0c0c0"></div><div style="left:1036px;top:338px;width:385px;height:1px;background:#c0c0c0"></div><div style="left:359px;top:353px;width:1062px;height:1px;background:#c0c0c0"></div><div style="left:359px;top:368px;width:1062px;height:1px;background:#c0c0c0"></div><div style="left:359px;top:383px;width:1062px;height:1px;background:#c0c0c0"></div><div style="left:359px;top:398px;width:7px;height:1px;background:#c0c0c0"></div><div style="left:1036px;top:398px;width:385px;height:1px;background:#c0c0c0"></div><div style="left:359px;top:413px;width:1062px;height:1px;background:#c0c0c0"></div><div style="left:359px;top:422px;width:1062px;height:1px;background:#c0c0c0"></div><div style="left:359px;top:431px;width:1062px;height:1px;background:#c0c0c0"></div><div style="left:359px;top:446px;width:1062px;height:1px;background:#c0c0c0"></div><div style="left:359px;top:463px;width:1062px;height:1px;background:#c0c0c0"></div><div style="left:359px;top:472px;width:1062px;height:1px;background:#c0c0c0"></div><div style="left:359px;top:487px;width:1062px;height:1px;background:#c0c0c0"></div><div style="left:359px;top:504px;width:1062px;height:1px;background:#c0c0c0"></div><div style="left:359px;top:513px;width:1062px;height:1px;background:#c0c0c0"></div><div style="left:359px;top:528px;width:1062px;height:1px;background:#c0c0c0"></div><div style="left:359px;top:545px;width:1062px;height:1px;background:#c0c0c0"></div><div style="left:359px;top:560px;width:1062px;height:1px;background:#c0c0c0"></div><div style="left:359px;top:575px;width:1062px;height:1px;background:#c0c0c0"></div><div style="left:359px;top:590px;width:1062px;height:1px;background:#c0c0c0"></div><div style="left:359px;top:599px;width:1062px;height:1px;background:#c0c0c0"></div><div style="left:359px;top:616px;width:1062px;height:1px;background:#c0c0c0"></div><div style="left:359px;top:631px;width:1062px;height:1px;background:#c0c0c0"></div><div style="left:359px;top:648px;width:1062px;height:1px;background:#c0c0c0"></div><div style="left:359px;top:657px;width:1062px;height:1px;background:#c0c0c0"></div><div style="left:359px;top:674px;width:1062px;height:1px;background:#c0c0c0"></div><div style="left:359px;top:691px;width:1062px;height:1px;background:#c0c0c0"></div><div style="left:359px;top:706px;width:1062px;height:1px;background:#c0c0c0"></div><div style="left:359px;top:715px;width:1062px;height:1px;background:#c0c0c0"></div><div style="left:359px;top:730px;width:1062px;height:1px;background:#c0c0c0"></div><div style="left:325px;top:169px;width:34px;height:573px;background:#fdfaef"></div><div style="left:326px;top:169px;width:33px;height:15px;background:#e4e0d4"></div><div style="left:325px;top:169px;width:34px;height:1px;background:#202020"></div><div class="t" style="left:326px;top:171px;width:33px;text-align:center;font-size:11px;line-height:15px;color:#000;font-weight:bold;">1</div><div style="left:325px;top:184px;width:34px;height:1px;background:#202020"></div><div class="t" style="left:326px;top:185px;width:33px;text-align:center;font-size:11px;line-height:15px;color:#000;">2</div><div style="left:325px;top:199px;width:34px;height:1px;background:#202020"></div><div class="t" style="left:326px;top:201px;width:33px;text-align:center;font-size:11px;line-height:15px;color:#000;">3</div><div style="left:325px;top:214px;width:34px;height:1px;background:#202020"></div><div class="t" style="left:326px;top:215px;width:33px;text-align:center;font-size:11px;line-height:15px;color:#000;">4</div><div style="left:325px;top:229px;width:34px;height:1px;background:#202020"></div><div class="t" style="left:326px;top:231px;width:33px;text-align:center;font-size:11px;line-height:15px;color:#000;">5</div><div style="left:325px;top:244px;width:34px;height:1px;background:#202020"></div><div class="t" style="left:326px;top:247px;width:33px;text-align:center;font-size:11px;line-height:15px;color:#000;">6</div><div style="left:325px;top:261px;width:34px;height:1px;background:#202020"></div><div class="t" style="left:326px;top:263px;width:33px;text-align:center;font-size:11px;line-height:15px;color:#000;">7</div><div style="left:325px;top:276px;width:34px;height:1px;background:#202020"></div><div class="t" style="left:326px;top:277px;width:33px;text-align:center;font-size:11px;line-height:15px;color:#000;">8</div><div style="left:325px;top:291px;width:34px;height:1px;background:#202020"></div><div class="t" style="left:326px;top:293px;width:33px;text-align:center;font-size:11px;line-height:15px;color:#000;">9</div><div style="left:325px;top:308px;width:34px;height:1px;background:#202020"></div><div class="t" style="left:326px;top:309px;width:33px;text-align:center;font-size:11px;line-height:15px;color:#000;">10</div><div style="left:325px;top:323px;width:34px;height:1px;background:#202020"></div><div class="t" style="left:326px;top:325px;width:33px;text-align:center;font-size:11px;line-height:15px;color:#000;">11</div><div style="left:325px;top:338px;width:34px;height:1px;background:#202020"></div><div class="t" style="left:326px;top:339px;width:33px;text-align:center;font-size:11px;line-height:15px;color:#000;">12</div><div style="left:325px;top:353px;width:34px;height:1px;background:#202020"></div><div class="t" style="left:326px;top:355px;width:33px;text-align:center;font-size:11px;line-height:15px;color:#000;">13</div><div style="left:325px;top:368px;width:34px;height:1px;background:#202020"></div><div class="t" style="left:326px;top:369px;width:33px;text-align:center;font-size:11px;line-height:15px;color:#000;">14</div><div style="left:325px;top:383px;width:34px;height:1px;background:#202020"></div><div class="t" style="left:326px;top:385px;width:33px;text-align:center;font-size:11px;line-height:15px;color:#000;">15</div><div style="left:325px;top:398px;width:34px;height:1px;background:#202020"></div><div class="t" style="left:326px;top:399px;width:33px;text-align:center;font-size:11px;line-height:15px;color:#000;">16</div><div style="left:325px;top:413px;width:34px;height:1px;background:#202020"></div><div style="left:326px;top:414px;width:33px;height:8px;overflow:hidden"><div class="t" style="left:0px;top:-3px;width:33px;text-align:center;font-size:11px;line-height:15px;color:#000;">17</div></div><div style="left:325px;top:422px;width:34px;height:1px;background:#202020"></div><div style="left:326px;top:423px;width:33px;height:8px;overflow:hidden"><div class="t" style="left:0px;top:-3px;width:33px;text-align:center;font-size:11px;line-height:15px;color:#000;">18</div></div><div style="left:325px;top:431px;width:34px;height:1px;background:#202020"></div><div class="t" style="left:326px;top:433px;width:33px;text-align:center;font-size:11px;line-height:15px;color:#000;">19</div><div style="left:325px;top:446px;width:34px;height:1px;background:#202020"></div><div class="t" style="left:326px;top:449px;width:33px;text-align:center;font-size:11px;line-height:15px;color:#000;">20</div><div style="left:325px;top:463px;width:34px;height:1px;background:#202020"></div><div style="left:326px;top:464px;width:33px;height:8px;overflow:hidden"><div class="t" style="left:0px;top:-3px;width:33px;text-align:center;font-size:11px;line-height:15px;color:#000;">21</div></div><div style="left:325px;top:472px;width:34px;height:1px;background:#202020"></div><div class="t" style="left:326px;top:473px;width:33px;text-align:center;font-size:11px;line-height:15px;color:#000;">22</div><div style="left:325px;top:487px;width:34px;height:1px;background:#202020"></div><div class="t" style="left:326px;top:489px;width:33px;text-align:center;font-size:11px;line-height:15px;color:#000;">23</div><div style="left:325px;top:504px;width:34px;height:1px;background:#202020"></div><div style="left:326px;top:505px;width:33px;height:8px;overflow:hidden"><div class="t" style="left:0px;top:-3px;width:33px;text-align:center;font-size:11px;line-height:15px;color:#000;">24</div></div><div style="left:325px;top:513px;width:34px;height:1px;background:#202020"></div><div class="t" style="left:326px;top:515px;width:33px;text-align:center;font-size:11px;line-height:15px;color:#000;">25</div><div style="left:325px;top:528px;width:34px;height:1px;background:#202020"></div><div class="t" style="left:326px;top:531px;width:33px;text-align:center;font-size:11px;line-height:15px;color:#000;">26</div><div style="left:325px;top:545px;width:34px;height:1px;background:#202020"></div><div class="t" style="left:326px;top:547px;width:33px;text-align:center;font-size:11px;line-height:15px;color:#000;">27</div><div style="left:325px;top:560px;width:34px;height:1px;background:#202020"></div><div class="t" style="left:326px;top:561px;width:33px;text-align:center;font-size:11px;line-height:15px;color:#000;">28</div><div style="left:325px;top:575px;width:34px;height:1px;background:#202020"></div><div class="t" style="left:326px;top:577px;width:33px;text-align:center;font-size:11px;line-height:15px;color:#000;">29</div><div style="left:325px;top:590px;width:34px;height:1px;background:#202020"></div><div style="left:326px;top:591px;width:33px;height:8px;overflow:hidden"><div class="t" style="left:0px;top:-3px;width:33px;text-align:center;font-size:11px;line-height:15px;color:#000;">30</div></div><div style="left:325px;top:599px;width:34px;height:1px;background:#202020"></div><div class="t" style="left:326px;top:601px;width:33px;text-align:center;font-size:11px;line-height:15px;color:#000;">31</div><div style="left:325px;top:616px;width:34px;height:1px;background:#202020"></div><div class="t" style="left:326px;top:617px;width:33px;text-align:center;font-size:11px;line-height:15px;color:#000;">32</div><div style="left:325px;top:631px;width:34px;height:1px;background:#202020"></div><div class="t" style="left:326px;top:633px;width:33px;text-align:center;font-size:11px;line-height:15px;color:#000;">33</div><div style="left:325px;top:648px;width:34px;height:1px;background:#202020"></div><div style="left:326px;top:649px;width:33px;height:8px;overflow:hidden"><div class="t" style="left:0px;top:-3px;width:33px;text-align:center;font-size:11px;line-height:15px;color:#000;">34</div></div><div style="left:325px;top:657px;width:34px;height:1px;background:#202020"></div><div class="t" style="left:326px;top:659px;width:33px;text-align:center;font-size:11px;line-height:15px;color:#000;">35</div><div style="left:325px;top:674px;width:34px;height:1px;background:#202020"></div><div class="t" style="left:326px;top:677px;width:33px;text-align:center;font-size:11px;line-height:15px;color:#000;">36</div><div style="left:325px;top:691px;width:34px;height:1px;background:#202020"></div><div class="t" style="left:326px;top:693px;width:33px;text-align:center;font-size:11px;line-height:15px;color:#000;">37</div><div style="left:325px;top:706px;width:34px;height:1px;background:#202020"></div><div style="left:326px;top:707px;width:33px;height:8px;overflow:hidden"><div class="t" style="left:0px;top:-3px;width:33px;text-align:center;font-size:11px;line-height:15px;color:#000;">38</div></div><div style="left:325px;top:715px;width:34px;height:1px;background:#202020"></div><div class="t" style="left:326px;top:717px;width:33px;text-align:center;font-size:11px;line-height:15px;color:#000;">39</div><div style="left:325px;top:730px;width:34px;height:1px;background:#202020"></div><div class="t" style="left:326px;top:731px;width:33px;text-align:center;font-size:11px;line-height:15px;color:#000;">40</div><div style="left:324px;top:154px;width:2px;height:588px;background:#000"></div><div style="left:359px;top:118px;width:1px;height:624px;background:#000"></div><div style="left:359px;top:154px;width:1062px;height:15px;background:#fdfaef"></div><div style="left:324px;top:154px;width:1097px;height:2px;background:#000"></div><div style="left:260px;top:169px;width:1161px;height:1px;background:#000"></div><div style="left:359px;top:156px;width:1px;height:13px;background:#000"></div><div class="t" style="left:359px;top:156px;width:9px;text-align:center;font-size:11px;line-height:15px;color:#000;font-weight:bold;">1</div><div style="left:366px;top:156px;width:1px;height:13px;background:#000"></div><div class="t" style="left:366px;top:156px;width:21px;text-align:center;font-size:11px;line-height:15px;color:#000;">2</div><div style="left:387px;top:156px;width:1px;height:13px;background:#000"></div><div class="t" style="left:387px;top:156px;width:21px;text-align:center;font-size:11px;line-height:15px;color:#000;">3</div><div style="left:408px;top:156px;width:1px;height:13px;background:#000"></div><div class="t" style="left:408px;top:156px;width:21px;text-align:center;font-size:11px;line-height:15px;color:#000;">4</div><div style="left:429px;top:156px;width:1px;height:13px;background:#000"></div><div class="t" style="left:429px;top:156px;width:21px;text-align:center;font-size:11px;line-height:15px;color:#000;">5</div><div style="left:450px;top:156px;width:1px;height:13px;background:#000"></div><div class="t" style="left:450px;top:156px;width:21px;text-align:center;font-size:11px;line-height:15px;color:#000;">6</div><div style="left:471px;top:156px;width:1px;height:13px;background:#000"></div><div class="t" style="left:471px;top:156px;width:21px;text-align:center;font-size:11px;line-height:15px;color:#000;">7</div><div style="left:492px;top:156px;width:1px;height:13px;background:#000"></div><div class="t" style="left:492px;top:156px;width:21px;text-align:center;font-size:11px;line-height:15px;color:#000;">8</div><div style="left:513px;top:156px;width:1px;height:13px;background:#000"></div><div class="t" style="left:513px;top:156px;width:21px;text-align:center;font-size:11px;line-height:15px;color:#000;">9</div><div style="left:534px;top:156px;width:1px;height:13px;background:#000"></div><div class="t" style="left:534px;top:156px;width:21px;text-align:center;font-size:11px;line-height:15px;color:#000;">10</div><div style="left:555px;top:156px;width:1px;height:13px;background:#000"></div><div class="t" style="left:555px;top:156px;width:21px;text-align:center;font-size:11px;line-height:15px;color:#000;">11</div><div style="left:576px;top:156px;width:1px;height:13px;background:#000"></div><div class="t" style="left:576px;top:156px;width:21px;text-align:center;font-size:11px;line-height:15px;color:#000;">12</div><div style="left:597px;top:156px;width:1px;height:13px;background:#000"></div><div class="t" style="left:597px;top:156px;width:21px;text-align:center;font-size:11px;line-height:15px;color:#000;">13</div><div style="left:618px;top:156px;width:1px;height:13px;background:#000"></div><div class="t" style="left:618px;top:156px;width:21px;text-align:center;font-size:11px;line-height:15px;color:#000;">14</div><div style="left:639px;top:156px;width:1px;height:13px;background:#000"></div><div class="t" style="left:639px;top:156px;width:21px;text-align:center;font-size:11px;line-height:15px;color:#000;">15</div><div style="left:660px;top:156px;width:1px;height:13px;background:#000"></div><div class="t" style="left:660px;top:156px;width:21px;text-align:center;font-size:11px;line-height:15px;color:#000;">16</div><div style="left:681px;top:156px;width:1px;height:13px;background:#000"></div><div class="t" style="left:681px;top:156px;width:21px;text-align:center;font-size:11px;line-height:15px;color:#000;">17</div><div style="left:702px;top:156px;width:1px;height:13px;background:#000"></div><div class="t" style="left:702px;top:156px;width:21px;text-align:center;font-size:11px;line-height:15px;color:#000;">18</div><div style="left:723px;top:156px;width:1px;height:13px;background:#000"></div><div class="t" style="left:723px;top:156px;width:21px;text-align:center;font-size:11px;line-height:15px;color:#000;">19</div><div style="left:744px;top:156px;width:1px;height:13px;background:#000"></div><div class="t" style="left:744px;top:156px;width:21px;text-align:center;font-size:11px;line-height:15px;color:#000;">20</div><div style="left:765px;top:156px;width:1px;height:13px;background:#000"></div><div class="t" style="left:765px;top:156px;width:21px;text-align:center;font-size:11px;line-height:15px;color:#000;">21</div><div style="left:786px;top:156px;width:1px;height:13px;background:#000"></div><div class="t" style="left:786px;top:156px;width:21px;text-align:center;font-size:11px;line-height:15px;color:#000;">22</div><div style="left:807px;top:156px;width:1px;height:13px;background:#000"></div><div class="t" style="left:807px;top:156px;width:21px;text-align:center;font-size:11px;line-height:15px;color:#000;">23</div><div style="left:828px;top:156px;width:1px;height:13px;background:#000"></div><div class="t" style="left:828px;top:156px;width:21px;text-align:center;font-size:11px;line-height:15px;color:#000;">24</div><div style="left:849px;top:156px;width:1px;height:13px;background:#000"></div><div class="t" style="left:849px;top:156px;width:21px;text-align:center;font-size:11px;line-height:15px;color:#000;">25</div><div style="left:870px;top:156px;width:1px;height:13px;background:#000"></div><div class="t" style="left:870px;top:156px;width:21px;text-align:center;font-size:11px;line-height:15px;color:#000;">26</div><div style="left:891px;top:156px;width:1px;height:13px;background:#000"></div><div class="t" style="left:891px;top:156px;width:21px;text-align:center;font-size:11px;line-height:15px;color:#000;">27</div><div style="left:912px;top:156px;width:1px;height:13px;background:#000"></div><div class="t" style="left:912px;top:156px;width:21px;text-align:center;font-size:11px;line-height:15px;color:#000;">28</div><div style="left:933px;top:156px;width:1px;height:13px;background:#000"></div><div class="t" style="left:933px;top:156px;width:21px;text-align:center;font-size:11px;line-height:15px;color:#000;">29</div><div style="left:954px;top:156px;width:1px;height:13px;background:#000"></div><div class="t" style="left:954px;top:156px;width:21px;text-align:center;font-size:11px;line-height:15px;color:#000;">30</div><div style="left:975px;top:156px;width:1px;height:13px;background:#000"></div><div class="t" style="left:975px;top:156px;width:21px;text-align:center;font-size:11px;line-height:15px;color:#000;">31</div><div style="left:996px;top:156px;width:1px;height:13px;background:#000"></div><div class="t" style="left:996px;top:156px;width:21px;text-align:center;font-size:11px;line-height:15px;color:#000;">32</div><div style="left:1017px;top:156px;width:1px;height:13px;background:#000"></div><div class="t" style="left:1017px;top:156px;width:19px;text-align:center;font-size:11px;line-height:15px;color:#000;">33</div><div style="left:1036px;top:156px;width:1px;height:13px;background:#000"></div><div style="left:1037px;top:156px;width:6px;height:13px;overflow:hidden"><div class="t" style="left:-10px;top:0px;width:26px;text-align:center;font-size:11px;line-height:15px;color:#000;">34</div></div><div style="left:1043px;top:156px;width:1px;height:13px;background:#000"></div><div class="t" style="left:1043px;top:156px;width:63px;text-align:center;font-size:11px;line-height:15px;color:#000;">35</div><div style="left:1106px;top:156px;width:1px;height:13px;background:#000"></div><div class="t" style="left:1106px;top:156px;width:63px;text-align:center;font-size:11px;line-height:15px;color:#000;">36</div><div style="left:1169px;top:156px;width:1px;height:13px;background:#000"></div><div class="t" style="left:1169px;top:156px;width:63px;text-align:center;font-size:11px;line-height:15px;color:#000;">37</div><div style="left:1232px;top:156px;width:1px;height:13px;background:#000"></div><div class="t" style="left:1232px;top:156px;width:63px;text-align:center;font-size:11px;line-height:15px;color:#000;">38</div><div style="left:1295px;top:156px;width:1px;height:13px;background:#000"></div><div class="t" style="left:1295px;top:156px;width:63px;text-align:center;font-size:11px;line-height:15px;color:#000;">39</div><div style="left:1358px;top:156px;width:1px;height:13px;background:#000"></div><div class="t" style="left:1358px;top:156px;width:63px;text-align:center;font-size:11px;line-height:15px;color:#000;">40</div><div style="left:366px;top:244px;width:671px;height:1px;background:#000"></div><div style="left:366px;top:353px;width:671px;height:1px;background:#000"></div><div style="left:366px;top:244px;width:1px;height:109px;background:#000"></div><div style="left:1036px;top:244px;width:1px;height:109px;background:#000"></div><div style="left:744px;top:244px;width:1px;height:109px;background:#000"></div><div style="left:807px;top:244px;width:1px;height:109px;background:#000"></div><div style="left:744px;top:261px;width:63px;height:1px;background:#000"></div><div style="left:366px;top:291px;width:670px;height:1px;background:#000"></div><div style="left:366px;top:308px;width:378px;height:1px;background:#000"></div><div style="left:555px;top:291px;width:1px;height:17px;background:#000"></div><div style="left:408px;top:291px;width:1px;height:17px;background:#c0c0c0"></div><div style="left:597px;top:291px;width:1px;height:17px;background:#c0c0c0"></div><div style="left:366px;top:276px;width:378px;height:1px;background:#c0c0c0"></div><div style="left:366px;top:338px;width:378px;height:1px;background:#c0c0c0"></div><div style="left:807px;top:261px;width:229px;height:1px;background:#c0c0c0"></div><div style="left:366px;top:422px;width:670px;height:2px;background:#000"></div><div style="left:366px;top:528px;width:665px;height:2px;background:#000"></div><div style="left:366px;top:545px;width:665px;height:1px;background:#000"></div><div style="left:366px;top:528px;width:2px;height:18px;background:#000"></div><div style="left:1029px;top:528px;width:2px;height:18px;background:#000"></div><div style="left:408px;top:528px;width:1px;height:17px;background:#000"></div><div style="left:711px;top:528px;width:1px;height:17px;background:#000"></div><div style="left:774px;top:528px;width:1px;height:17px;background:#000"></div><div style="left:822px;top:528px;width:1px;height:17px;background:#000"></div><div style="left:921px;top:528px;width:1px;height:17px;background:#000"></div><div style="left:366px;top:560px;width:2px;height:16px;background:#000"></div><div style="left:1029px;top:560px;width:2px;height:16px;background:#000"></div><div style="left:408px;top:560px;width:1px;height:15px;background:#000"></div><div style="left:711px;top:560px;width:1px;height:15px;background:#000"></div><div style="left:774px;top:560px;width:1px;height:15px;background:#000"></div><div style="left:822px;top:560px;width:1px;height:15px;background:#000"></div><div style="left:921px;top:560px;width:1px;height:15px;background:#000"></div><div style="left:366px;top:590px;width:665px;height:2px;background:#000"></div><div style="left:366px;top:715px;width:672px;height:2px;background:#000"></div><div style="left:1017px;top:674px;width:1px;height:17px;background:#c0c0c0"></div><div style="left:1030px;top:591px;width:1px;height:57px;background:#c0c0c0"></div><div style="left:1036px;top:154px;width:1px;height:588px;background:repeating-linear-gradient(to bottom,#000 0 5px,transparent 5px 7px)"></div><div style="left:325px;top:184px;width:1096px;height:1px;background:#ff0000"></div><div style="left:325px;top:368px;width:1096px;height:1px;background:#ff0000"></div><div style="left:325px;top:383px;width:1096px;height:1px;background:#ff0000"></div><div style="left:325px;top:431px;width:1096px;height:1px;background:#ff0000"></div><div style="left:325px;top:446px;width:1096px;height:1px;background:#ff0000"></div><div style="left:325px;top:472px;width:1096px;height:1px;background:#ff0000"></div><div style="left:325px;top:487px;width:1096px;height:1px;background:#ff0000"></div><div style="left:325px;top:513px;width:1096px;height:1px;background:#ff0000"></div><div style="left:325px;top:528px;width:1096px;height:1px;background:#ff0000"></div><div style="left:325px;top:545px;width:1096px;height:1px;background:#ff0000"></div><div style="left:325px;top:560px;width:1096px;height:1px;background:#ff0000"></div><div style="left:325px;top:575px;width:1096px;height:1px;background:#ff0000"></div><div style="left:325px;top:590px;width:1096px;height:1px;background:#ff0000"></div><div style="left:325px;top:616px;width:1096px;height:1px;background:#ff0000"></div><div style="left:325px;top:631px;width:1096px;height:1px;background:#ff0000"></div><div style="left:325px;top:648px;width:1096px;height:1px;background:#ff0000"></div><div style="left:325px;top:657px;width:1096px;height:1px;background:#ff0000"></div><div style="left:325px;top:691px;width:1096px;height:1px;background:#ff0000"></div><div style="left:325px;top:706px;width:1096px;height:1px;background:#ff0000"></div><div style="left:359px;top:169px;width:8px;height:16px;border:2px solid #000;background:#fff"></div><div style="left:361px;top:171px;width:3px;height:11px;background:#c8c8f0"></div><div style="left:359px;top:184px;width:8px;height:2px;background:#00c0c0"></div><div class="t" style="left:366px;top:186px;width:670px;text-align:center;font-size:11px;line-height:15px;color:#000;letter-spacing:0.09px;">Внимание! Оплата данного счета означает согласие с условиями поставки товара. Уведомление об оплате</div><div class="t" style="left:366px;top:200px;width:670px;text-align:center;font-size:11px;line-height:15px;color:#000;letter-spacing:0.09px;">обязательно, в противном случае не гарантируется наличие товара на складе. Товар отпускается по факту</div><div class="t" style="left:366px;top:214px;width:670px;text-align:center;font-size:11px;line-height:15px;color:#000;letter-spacing:0.09px;">прихода денег на р/с Поставщика, самовывозом, при наличии доверенности и паспорта.</div><div class="t" style="left:371px;top:246px;font-size:12.8px;line-height:16.8px;color:#000;">&lt;БанкПолучателяПредставление&gt;</div><div class="t" style="left:369px;top:277px;font-size:11px;line-height:15px;color:#000;">Банк получателя</div><div class="t" style="left:370px;top:292px;font-size:12.8px;line-height:16.8px;color:#000;">ИНН</div><div class="t" style="left:412px;top:292px;font-size:12.8px;line-height:16.8px;color:#000;">&lt;ИНН&gt;</div><div class="t" style="left:559px;top:292px;font-size:12.8px;line-height:16.8px;color:#000;">КПП</div><div class="t" style="left:601px;top:292px;font-size:12.8px;line-height:16.8px;color:#000;">&lt;КПП&gt;</div><div class="t" style="left:371px;top:310px;font-size:12.8px;line-height:16.8px;color:#000;">&lt;ПредставлениеПоставщика&gt;</div><div class="t" style="left:368px;top:339px;font-size:11px;line-height:15px;color:#000;">Получатель</div><div class="t" style="left:748px;top:246px;font-size:12.8px;line-height:16.8px;color:#000;">БИК</div><div class="t" style="left:748px;top:262px;font-size:12.8px;line-height:16.8px;color:#000;">Сч. №</div><div class="t" style="left:811px;top:246px;font-size:12.8px;line-height:16.8px;color:#000;">&lt;БИКБанкаПолучателя&gt;</div><div style="left:811px;top:260px;width:225px;height:18px;overflow:hidden"><div class="t" style="left:0px;top:2px;font-size:12.8px;line-height:16.8px;color:#000;">&lt;СчетБанкаПолучателяПредставление&gt;</div></div><div class="t" style="left:748px;top:292px;font-size:12.8px;line-height:16.8px;color:#000;">Сч. №</div><div class="t" style="left:811px;top:292px;font-size:12.8px;line-height:16.8px;color:#000;">&lt;СчетПолучателяПредставление&gt;</div><div class="t" style="left:371px;top:387px;font-size:19.5px;line-height:23.5px;color:#000;font-weight:bold;">&lt;ТекстЗаголовка&gt;</div><div class="t" style="left:370px;top:447px;font-size:12.8px;line-height:16.8px;color:#000;">Поставщик:</div><div class="t" style="left:454px;top:447px;font-size:13px;line-height:17px;color:#000;font-weight:bold;">&lt;ПредставлениеПоставщика&gt;</div><div class="t" style="left:370px;top:488px;font-size:12.8px;line-height:16.8px;color:#000;">Покупатель:</div><div class="t" style="left:454px;top:488px;font-size:13px;line-height:17px;color:#000;font-weight:bold;">&lt;ПредставлениеПолучателя&gt;</div><div class="t" style="left:366px;top:529px;width:42px;text-align:center;font-size:13px;line-height:17px;color:#000;font-weight:bold;">№</div><div class="t" style="left:408px;top:529px;width:303px;text-align:center;font-size:13px;line-height:17px;color:#000;font-weight:bold;">Товар</div><div class="t" style="left:711px;top:529px;width:63px;text-align:center;font-size:13px;line-height:17px;color:#000;font-weight:bold;">Кол-во</div><div class="t" style="left:774px;top:529px;width:48px;text-align:center;font-size:13px;line-height:17px;color:#000;font-weight:bold;">Ед.</div><div class="t" style="left:822px;top:529px;width:99px;text-align:center;font-size:13px;line-height:17px;color:#000;font-weight:bold;">Цена</div><div class="t" style="left:921px;top:529px;width:109px;text-align:center;font-size:13px;line-height:17px;color:#000;font-weight:bold;">Сумма</div><div style="left:368px;top:561px;width:40px;height:14px;overflow:hidden"><div class="t" style="left:-30px;top:1px;width:100px;text-align:center;font-size:10.5px;line-height:14.5px;color:#000;">&lt;НомерСтроки&gt;</div></div><div class="t" style="left:411px;top:562px;font-size:10.5px;line-height:14.5px;color:#000;">&lt;Товар&gt;</div><div style="left:712px;top:561px;width:62px;height:14px;overflow:hidden"><div class="t" style="left:-40px;top:1px;width:98px;text-align:right;font-size:10.5px;line-height:14.5px;color:#000;">&lt;Количество&gt;</div></div><div style="left:775px;top:561px;width:47px;height:14px;overflow:hidden"><div class="t" style="left:1px;top:1px;font-size:10.5px;line-height:14.5px;color:#000;">&lt;ЕдиницаИзмерения&gt;</div></div><div class="t" style="left:822px;top:562px;width:96px;text-align:right;font-size:10.5px;line-height:14.5px;color:#000;">&lt;Цена&gt;</div><div class="t" style="left:921px;top:562px;width:105px;text-align:right;font-size:10.5px;line-height:14.5px;color:#000;">&lt;Сумма&gt;</div><div class="t" style="left:822px;top:600px;width:96px;text-align:right;font-size:13px;line-height:17px;color:#000;font-weight:bold;">Итого:</div><div class="t" style="left:921px;top:600px;width:105px;text-align:right;font-size:13px;line-height:17px;color:#000;font-weight:bold;">&lt;Всего&gt;</div><div class="t" style="left:822px;top:632px;width:96px;text-align:right;font-size:13px;line-height:17px;color:#000;font-weight:bold;">&lt;НДС&gt;</div><div class="t" style="left:921px;top:632px;width:105px;text-align:right;font-size:13px;line-height:17px;color:#000;font-weight:bold;">&lt;ВсегоНДС&gt;</div><div class="t" style="left:371px;top:658px;font-size:12.5px;line-height:16.5px;color:#000;">&lt;ИтоговаяСтрока&gt;</div><div class="t" style="left:370px;top:676px;font-size:13px;line-height:17px;color:#000;font-weight:bold;">&lt;СуммаПрописью&gt;</div><div style="left:360px;top:731px;width:680px;height:11px;overflow:hidden"><div class="t" style="left:10px;top:1px;font-size:13px;line-height:17px;color:#000;font-weight:bold;">Руководитель</div><div class="t" style="left:0px;top:3px;width:383px;text-align:right;font-size:11px;line-height:15px;color:#000;">&lt;ФИОРуководителя&gt;</div><div class="t" style="left:409px;top:1px;font-size:13px;line-height:17px;color:#000;font-weight:bold;">Бухгалтер</div><div class="t" style="left:500px;top:3px;width:173px;text-align:right;font-size:11px;line-height:15px;color:#000;">&lt;ФИОБухгалтера&gt;</div></div><div style="left:260px;top:169px;width:65px;height:573px;background:#fffbf1"></div><div style="left:263px;top:184px;width:62px;height:185px;background:#fffefa;border:1px solid #000;border-right:none;border-radius:2px 0 0 2px"></div><div style="left:264px;top:185px;width:61px;height:14px;overflow:hidden"><div class="t" style="left:2px;top:0px;font-size:11px;line-height:15px;color:#000;">ЗаголовокСчета</div></div><div style="left:263px;top:383px;width:62px;height:49px;background:#fffefa;border:1px solid #000;border-right:none;border-radius:2px 0 0 2px"></div><div style="left:264px;top:384px;width:61px;height:14px;overflow:hidden"><div class="t" style="left:2px;top:0px;font-size:11px;line-height:15px;color:#000;">Заголовок</div></div><div style="left:263px;top:446px;width:62px;height:27px;background:#fffefa;border:1px solid #000;border-right:none;border-radius:2px 0 0 2px"></div><div style="left:264px;top:447px;width:61px;height:14px;overflow:hidden"><div class="t" style="left:2px;top:0px;font-size:11px;line-height:15px;color:#000;">Поставщик</div></div><div style="left:263px;top:487px;width:62px;height:27px;background:#fffefa;border:1px solid #000;border-right:none;border-radius:2px 0 0 2px"></div><div style="left:264px;top:488px;width:61px;height:14px;overflow:hidden"><div class="t" style="left:2px;top:0px;font-size:11px;line-height:15px;color:#000;">Покупатель</div></div><div style="left:263px;top:528px;width:62px;height:18px;background:#fffefa;border:1px solid #000;border-right:none;border-radius:2px 0 0 2px"></div><div style="left:264px;top:529px;width:61px;height:14px;overflow:hidden"><div class="t" style="left:2px;top:0px;font-size:11px;line-height:15px;color:#000;">ШапкаТаблицы</div></div><div style="left:263px;top:560px;width:62px;height:16px;background:#fffefa;border:1px solid #000;border-right:none;border-radius:2px 0 0 2px"></div><div style="left:264px;top:561px;width:61px;height:14px;overflow:hidden"><div class="t" style="left:2px;top:0px;font-size:11px;line-height:15px;color:#000;">Строка</div></div><div style="left:263px;top:590px;width:62px;height:27px;background:#fffefa;border:1px solid #000;border-right:none;border-radius:2px 0 0 2px"></div><div style="left:264px;top:591px;width:61px;height:14px;overflow:hidden"><div class="t" style="left:2px;top:0px;font-size:11px;line-height:15px;color:#000;">Итого</div></div><div style="left:263px;top:631px;width:62px;height:18px;background:#fffefa;border:1px solid #000;border-right:none;border-radius:2px 0 0 2px"></div><div style="left:264px;top:632px;width:61px;height:14px;overflow:hidden"><div class="t" style="left:2px;top:0px;font-size:11px;line-height:15px;color:#000;">ИтогоНДС</div></div><div style="left:263px;top:657px;width:62px;height:35px;background:#fffefa;border:1px solid #000;border-right:none;border-radius:2px 0 0 2px"></div><div style="left:264px;top:658px;width:61px;height:14px;overflow:hidden"><div class="t" style="left:2px;top:0px;font-size:11px;line-height:15px;color:#000;">СуммаПрописью</div></div><div style="left:263px;top:706px;width:62px;height:40px;background:#fffefa;border:1px solid #000;border-right:none;border-radius:2px 0 0 2px"></div><div style="left:264px;top:707px;width:61px;height:14px;overflow:hidden"><div class="t" style="left:2px;top:0px;font-size:11px;line-height:15px;color:#000;">ПодвалСчета</div></div><div style="left:324px;top:169px;width:2px;height:573px;background:#000"></div><div style="left:260px;top:169px;width:99px;height:1px;background:#000"></div><div style="left:1421px;top:118px;width:13px;height:625px;background:#f8f5ec"></div><div style="left:1422px;top:120px;width:12px;height:11px;background:#dcd8cc;border:1px solid #c8c4b8"></div><svg style="position:absolute;left:1424px;top:122px" width="9" height="6" viewBox="0 0 9 6" shape-rendering="crispEdges"><path d="M1 5 L4.5 1.5 L8 5" stroke="#000" stroke-width="1.4" fill="none" shape-rendering="auto"/></svg><div style="left:1422px;top:132px;width:12px;height:452px;background:#dcd8cc;border:1px solid #c8c4b8"></div><div style="left:1422px;top:731px;width:12px;height:11px;background:#dcd8cc;border:1px solid #c8c4b8"></div><svg style="position:absolute;left:1424px;top:734px" width="9" height="6" viewBox="0 0 9 6" shape-rendering="crispEdges"><path d="M1 1 L4.5 4.5 L8 1" stroke="#000" stroke-width="1.4" fill="none" shape-rendering="auto"/></svg><div style="left:260px;top:742px;width:1161px;height:14px;background:#f8f5ec"></div><div style="left:261px;top:744px;width:11px;height:11px;background:#dcd8cc;border:1px solid #c8c4b8"></div><svg style="position:absolute;left:263px;top:746px" width="6" height="9" viewBox="0 0 6 9" shape-rendering="crispEdges"><path d="M5 1 L1.5 4.5 L5 8" stroke="#000" stroke-width="1.4" fill="none" shape-rendering="auto"/></svg><div style="left:273px;top:744px;width:953px;height:11px;background:#dcd8cc;border:1px solid #c8c4b8"></div><div style="left:1409px;top:744px;width:11px;height:11px;background:#dcd8cc;border:1px solid #c8c4b8"></div><svg style="position:absolute;left:1412px;top:746px" width="6" height="9" viewBox="0 0 6 9" shape-rendering="crispEdges"><path d="M1 1 L4.5 4.5 L1 8" stroke="#000" stroke-width="1.4" fill="none" shape-rendering="auto"/></svg><div style="left:1421px;top:743px;width:13px;height:13px;background:#d0ccc0"></div><div style="left:0px;top:928px;width:1680px;height:73px;background:#dfdbce"></div><div style="left:3px;top:933px;width:3px;height:1px;background:#808080"></div><div style="left:3px;top:935px;width:3px;height:1px;background:#808080"></div><div style="left:3px;top:937px;width:3px;height:1px;background:#808080"></div><div style="left:3px;top:939px;width:3px;height:1px;background:#808080"></div><div style="left:3px;top:941px;width:3px;height:1px;background:#808080"></div><div style="left:3px;top:943px;width:3px;height:1px;background:#808080"></div><div style="left:3px;top:945px;width:3px;height:1px;background:#808080"></div><svg style="position:absolute;left:12px;top:933px" width="16" height="16" viewBox="0 0 16 16" shape-rendering="crispEdges"><path d="M1 0 V16" stroke="#909090"/><rect x="2.5" y="1.5" width="8" height="5" fill="#c8c8c8" stroke="#909090"/><rect x="2.5" y="9.5" width="12" height="5" fill="#c8c8c8" stroke="#909090"/></svg><svg style="position:absolute;left:36px;top:933px" width="16" height="16" viewBox="0 0 16 16" shape-rendering="crispEdges"><path d="M8 0 V16" stroke="#909090"/><rect x="3.5" y="1.5" width="9" height="5" fill="#c8c8c8" stroke="#909090"/><rect x="1.5" y="9.5" width="13" height="5" fill="#c8c8c8" stroke="#909090"/></svg><svg style="position:absolute;left:59px;top:933px" width="16" height="16" viewBox="0 0 16 16" shape-rendering="crispEdges"><path d="M15 0 V16" stroke="#909090"/><rect x="5.5" y="1.5" width="8" height="5" fill="#c8c8c8" stroke="#909090"/><rect x="1.5" y="9.5" width="12" height="5" fill="#c8c8c8" stroke="#909090"/></svg><svg style="position:absolute;left:81px;top:933px" width="16" height="16" viewBox="0 0 16 16" shape-rendering="crispEdges"><path d="M0 1 H16" stroke="#909090"/><rect x="1.5" y="2.5" width="5" height="8" fill="#c8c8c8" stroke="#909090"/><rect x="8.5" y="2.5" width="6" height="12" fill="#c8c8c8" stroke="#909090"/></svg><svg style="position:absolute;left:105px;top:933px" width="16" height="16" viewBox="0 0 16 16" shape-rendering="crispEdges"><path d="M0 8 H16" stroke="#909090"/><rect x="1.5" y="3.5" width="5" height="9" fill="#c8c8c8" stroke="#909090"/><rect x="8.5" y="1.5" width="6" height="13" fill="#c8c8c8" stroke="#909090"/></svg><svg style="position:absolute;left:127px;top:933px" width="16" height="16" viewBox="0 0 16 16" shape-rendering="crispEdges"><path d="M0 15 H16" stroke="#909090"/><rect x="1.5" y="6.5" width="5" height="8" fill="#c8c8c8" stroke="#909090"/><rect x="8.5" y="2.5" width="6" height="12" fill="#c8c8c8" stroke="#909090"/></svg><svg style="position:absolute;left:151px;top:933px" width="16" height="16" viewBox="0 0 16 16" shape-rendering="crispEdges"><rect x="1.5" y="3.5" width="13" height="9" fill="#b8bcc8" stroke="#a0a4b0"/><path d="M2 4 L8 8 L14 4 M2 12 L8 8 L14 12" stroke="#d8d8e0" fill="none"/><path d="M8 0 V16" stroke="#a0a0a0"/></svg><svg style="position:absolute;left:173px;top:933px" width="16" height="16" viewBox="0 0 16 16" shape-rendering="crispEdges"><rect x="3.5" y="1.5" width="9" height="13" fill="#b8bcc8" stroke="#a0a4b0"/><path d="M4 2 L8 8 L4 14 M12 2 L8 8 L12 14" stroke="#d8d8e0" fill="none"/><path d="M0 8 H16" stroke="#a0a0a0"/></svg><svg style="position:absolute;left:197px;top:933px" width="16" height="16" viewBox="0 0 16 16" shape-rendering="crispEdges"><path d="M1 4 V12 M0 4 H2 M0 12 H2 M15 4 V12 M14 4 H16 M14 12 H16" stroke="#808080"/><path d="M3 8 L7 4 V12Z M13 8 L9 4 V12Z" fill="#a8b0c8"/></svg><svg style="position:absolute;left:219px;top:933px" width="16" height="16" viewBox="0 0 16 16" shape-rendering="crispEdges"><path d="M3 1 H13 M8 0 V2 M3 15 H13 M8 14 V16" stroke="#808080"/><path d="M8 3 L12 7 H4Z M8 13 L12 9 H4Z" fill="#a8b0c8"/></svg><svg style="position:absolute;left:243px;top:933px" width="16" height="16" viewBox="0 0 16 16" shape-rendering="crispEdges"><path d="M1 4 V12 H2 M1 4 H2 M15 4 V12 H14 M15 4 H14" stroke="#808080" fill="none"/><path d="M3 8 L7 4 V12Z M13 8 L9 4 V12Z" fill="#a8b0c8"/></svg><svg style="position:absolute;left:265px;top:933px" width="16" height="16" viewBox="0 0 16 16" shape-rendering="crispEdges"><path d="M3 1 H13 M8 0 V2 M3 15 H13 M8 14 V16" stroke="#808080"/><path d="M8 3 L12 7 H4Z M8 13 L12 9 H4Z" fill="#a8b0c8"/></svg><svg style="position:absolute;left:289px;top:933px" width="16" height="16" viewBox="0 0 16 16" shape-rendering="crispEdges"><rect x="1.5" y="1.5" width="13" height="13" fill="none" stroke="#909090" stroke-dasharray="3 2"/><path d="M8 3 L11 6 H5Z M8 13 L11 10 H5Z M3 8 L6 5 V11Z M13 8 L10 5 V11Z" fill="#a8b0c8"/></svg><svg style="position:absolute;left:312px;top:933px" width="16" height="16" viewBox="0 0 16 16" shape-rendering="crispEdges"><rect x="1.5" y="1.5" width="13" height="13" fill="none" stroke="#909090" stroke-dasharray="3 2"/><circle cx="8" cy="7" r="3" fill="#c8c8d0" stroke="#a0a0a0"/><rect x="7" y="10" width="2" height="3" fill="#a0a0a0"/></svg><svg style="position:absolute;left:333px;top:945px" width="7" height="4" viewBox="0 0 7 4" shape-rendering="crispEdges"><path d="M0 0 H7 L3.5 4 Z" fill="#000"/></svg><div style="left:350px;top:933px;width:3px;height:1px;background:#808080"></div><div style="left:350px;top:935px;width:3px;height:1px;background:#808080"></div><div style="left:350px;top:937px;width:3px;height:1px;background:#808080"></div><div style="left:350px;top:939px;width:3px;height:1px;background:#808080"></div><div style="left:350px;top:941px;width:3px;height:1px;background:#808080"></div><div style="left:350px;top:943px;width:3px;height:1px;background:#808080"></div><div style="left:350px;top:945px;width:3px;height:1px;background:#808080"></div><svg style="position:absolute;left:359px;top:933px" width="16" height="16" viewBox="0 0 16 16" shape-rendering="crispEdges"><path d="M4 1 V13 L7 10 L9 15 L11 14 L9 9 H13 Z" fill="#f0f0f0" stroke="#909090"/></svg><div style="left:380px;top:932px;width:1px;height:18px;background:#c2beb2"></div><div style="left:381px;top:932px;width:1px;height:18px;background:#f4f2ea"></div><svg style="position:absolute;left:386px;top:933px" width="16" height="16" viewBox="0 0 16 16" shape-rendering="crispEdges"><rect x="1.5" y="0.5" width="12" height="15" fill="#d8d8e0" stroke="#a8a8b0"/><path d="M4 4 H11 M4 7 H11 M4 10 H11 M4 13 H11" stroke="#a0a0b0"/></svg><svg style="position:absolute;left:409px;top:933px" width="16" height="16" viewBox="0 0 16 16" shape-rendering="crispEdges"><rect x="1.5" y="3.5" width="13" height="9" fill="#c8c8c8" stroke="#a0a0a0"/><path d="M3 11 L7 7 L10 10 L14 6" stroke="#a0a8c0" fill="none"/></svg><svg style="position:absolute;left:432px;top:933px" width="16" height="16" viewBox="0 0 16 16" shape-rendering="crispEdges"><rect x="1" y="4" width="4" height="11" fill="#b8c0c8"/><rect x="5" y="2" width="5" height="13" fill="#c8c8b8"/><rect x="10" y="5" width="4" height="10" fill="#c0b0b0"/></svg><div style="left:456px;top:932px;width:1px;height:18px;background:#c2beb2"></div><div style="left:457px;top:932px;width:1px;height:18px;background:#f4f2ea"></div><svg style="position:absolute;left:460px;top:933px" width="16" height="16" viewBox="0 0 16 16" shape-rendering="crispEdges"><rect x="0.5" y="0.5" width="15" height="15" fill="#d0d0d0" stroke="#a8a8a8"/><path d="M1 4 H15 M1 8 H15 M1 12 H15 M5 1 V15" stroke="#e8e8e8"/><text x="7" y="9" font-size="8" fill="#909090" font-family="Liberation Sans">A</text></svg><div style="left:483px;top:932px;width:1px;height:18px;background:#c2beb2"></div><div style="left:484px;top:932px;width:1px;height:18px;background:#f4f2ea"></div><svg style="position:absolute;left:488px;top:933px" width="16" height="16" viewBox="0 0 16 16" shape-rendering="crispEdges"><rect x="0.5" y="0.5" width="15" height="15" fill="none" stroke="#a8a8a8"/><path d="M5 1 V15 M10 1 V15" stroke="#b0b0b0"/><path d="M7 3 V12 M5 5 L7 3 L9 5" stroke="#8090b0" fill="none"/></svg><svg style="position:absolute;left:511px;top:933px" width="16" height="16" viewBox="0 0 16 16" shape-rendering="crispEdges"><rect x="0.5" y="0.5" width="15" height="15" fill="none" stroke="#a8a8a8"/><path d="M5 1 V15 M10 1 V15" stroke="#b0b0b0"/><path d="M3 4 L12 12 M12 4 L3 12" stroke="#8090b0" fill="none"/></svg><div style="left:534px;top:932px;width:1px;height:18px;background:#c2beb2"></div><div style="left:535px;top:932px;width:1px;height:18px;background:#f4f2ea"></div><div style="left:536px;top:930px;width:23px;height:22px;border:1px solid #909090;background:#f0eee8"></div><svg style="position:absolute;left:539px;top:933px" width="16" height="16" viewBox="0 0 16 16" shape-rendering="crispEdges"><rect x="0.5" y="0.5" width="15" height="15" fill="#fff" stroke="#000"/><rect x="1" y="1" width="14" height="2" fill="#000"/><path d="M2 5 H15 M2 8 H15 M2 11 H15 M2 14 H15" stroke="#000" stroke-dasharray="1 2"/></svg><div style="left:559px;top:930px;width:23px;height:22px;border:1px solid #909090;background:#f0eee8"></div><svg style="position:absolute;left:562px;top:933px" width="16" height="16" viewBox="0 0 16 16" shape-rendering="crispEdges"><rect x="0.5" y="0.5" width="15" height="15" fill="#fff" stroke="#000" stroke-width="1.5"/><path d="M1 5 H15 M1 10 H15 M6 1 V15" stroke="#000" stroke-width="1.5"/></svg><div style="left:585px;top:932px;width:1px;height:18px;background:#c2beb2"></div><div style="left:586px;top:932px;width:1px;height:18px;background:#f4f2ea"></div><svg style="position:absolute;left:590px;top:933px" width="16" height="16" viewBox="0 0 16 16" shape-rendering="crispEdges"><rect x="0.5" y="0.5" width="15" height="15" fill="#fff" stroke="#909090"/><path d="M1 5 H15 M1 10 H15 M6 1 V15" stroke="#909090"/><path d="M3 13 L14 2" stroke="#20a020" stroke-width="3"/><path d="M8 10 L13 15 M13 10 L8 15" stroke="#e00000" stroke-width="1.5"/></svg><svg style="position:absolute;left:613px;top:933px" width="16" height="16" viewBox="0 0 16 16" shape-rendering="crispEdges"><rect x="0.5" y="0.5" width="15" height="13" fill="#fff" stroke="#303030"/><path d="M1 4 H15 M6 1 V14" stroke="#303030"/><path d="M1 9 H15" stroke="#909090"/></svg><svg style="position:absolute;left:635px;top:945px" width="7" height="4" viewBox="0 0 7 4" shape-rendering="crispEdges"><path d="M0 0 H7 L3.5 4 Z" fill="#000"/></svg><div style="left:1px;top:955px;width:172px;height:20px;background:#5a7cbc;border:1px solid #50627a"></div><svg style="position:absolute;left:3px;top:957px" width="17" height="16" viewBox="0 0 17 16" shape-rendering="crispEdges"><path d="M3.5 0.5 H9.5 L12.5 3.5 V10 H3.5Z" fill="#fff" stroke="#a0a0a0"/><text x="0" y="15" font-size="11" font-weight="bold" fill="#000080" font-family="Liberation Serif">A</text><path d="M9 9 H16 M9 11 H16 M9 13 H16 M9 15 H16" stroke="#e0e0e0"/></svg><div class="t" style="left:20px;top:959px;font-size:11px;line-height:15px;color:#fff;">...: СчетЗаказ [Только для ч...</div><div style="left:0px;top:977px;width:1578px;height:20px;border:1px solid #cbc7bb"></div><div class="t" style="left:5px;top:980px;font-size:11px;line-height:15px;color:#000;">Для получения подсказки нажмите F1</div><div style="left:1583px;top:977px;width:30px;height:20px;border:1px solid #cbc7bb"></div><div class="t" style="left:1587px;top:980px;font-size:11px;line-height:15px;color:#808080;">CAP</div><div style="left:1617px;top:977px;width:33px;height:20px;border:1px solid #cbc7bb"></div><div class="t" style="left:1620px;top:980px;font-size:11px;line-height:15px;color:#000;">NUM</div><div style="left:1655px;top:977px;width:25px;height:20px;border:1px solid #cbc7bb"></div><div class="t" style="left:1658px;top:980px;font-size:11px;line-height:15px;color:#000;">ru</div><svg style="position:absolute;left:1671px;top:983px" width="5" height="3" viewBox="0 0 5 3" shape-rendering="crispEdges"><path d="M0 0 H5 L2.5 3Z" fill="#000"/></svg><div style="left:0px;top:998px;width:1680px;height:1px;background:#fff"></div>
</body></html>
